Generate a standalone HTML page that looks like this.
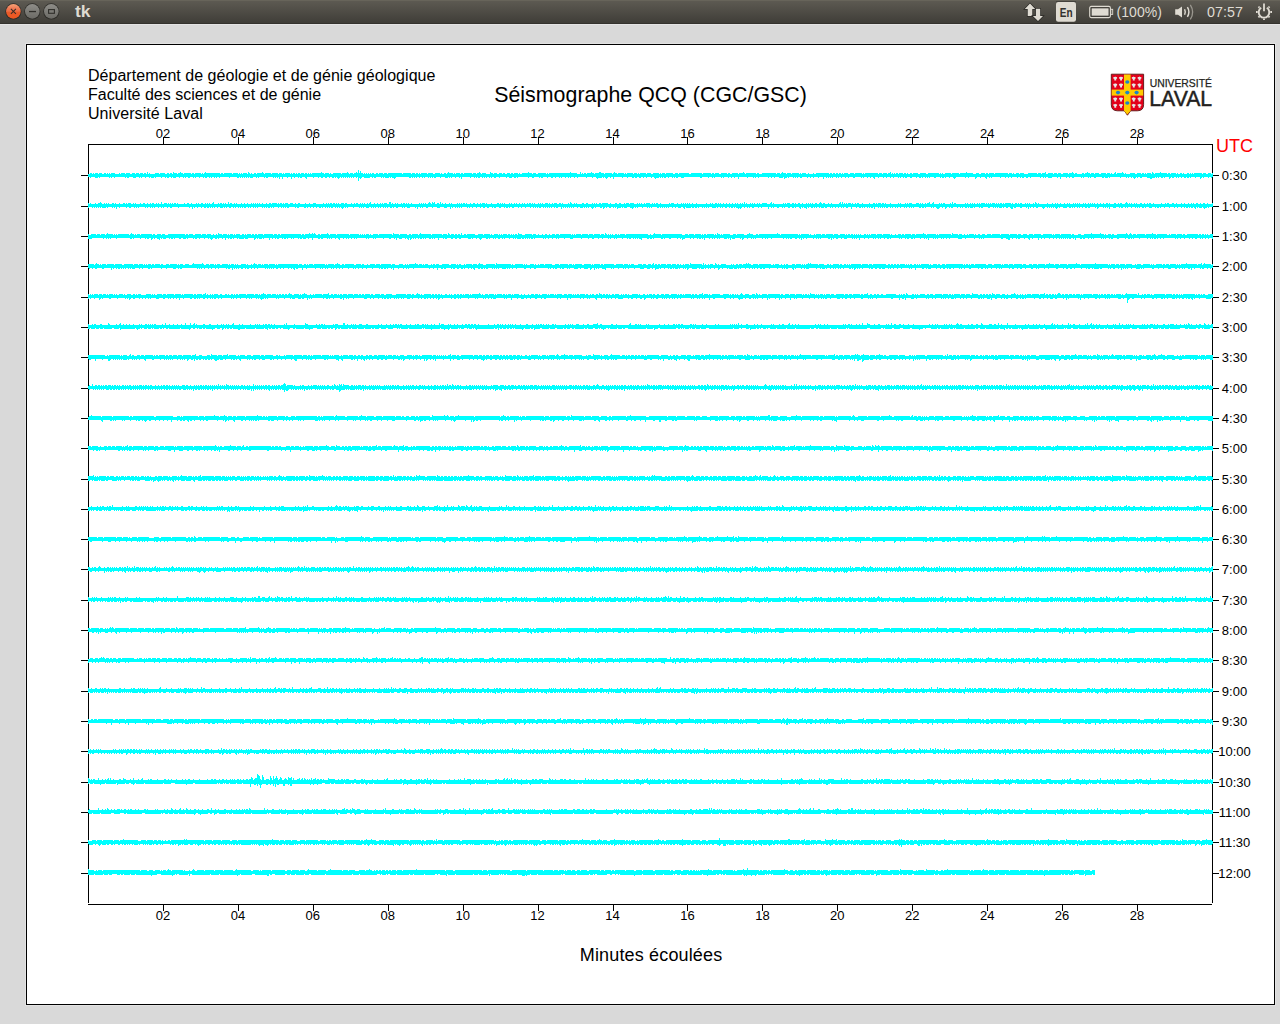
<!DOCTYPE html>
<html><head><meta charset="utf-8"><style>
html,body{margin:0;padding:0;width:1280px;height:1024px;overflow:hidden;background:#d9d9d9;}
svg{position:absolute;left:0;top:0;display:block}
text{font-family:"Liberation Sans",sans-serif;}
</style></head><body>
<svg width="1280" height="1024" viewBox="0 0 1280 1024">
<defs>
<linearGradient id="pg" x1="0" y1="0" x2="0" y2="1">
<stop offset="0" stop-color="#5e5b53"/><stop offset="1" stop-color="#3e3c37"/>
</linearGradient>
</defs>
<rect x="0" y="0" width="1280" height="24" fill="url(#pg)"/>
<rect x="0" y="0" width="1280" height="1" fill="#67645a"/>
<rect x="0" y="23" width="1280" height="1" fill="#34322e"/>
<rect x="0" y="24" width="1280" height="1" fill="#e4e4e4"/>
<!-- canvas -->
<rect x="25" y="43" width="1251" height="963" fill="#e3e3e3"/>
<rect x="26" y="44" width="1249" height="961" fill="#000"/>
<rect x="27" y="45" width="1247" height="959" fill="#fff"/>
<g shape-rendering="crispEdges">
<g stroke="#000" stroke-width="1" fill="none"><path d="M88.5 144V903M1212.5 144V903M88 144.5H1213M88 904.5H1212"/><path d="M163.5 137V144M163.5 905V911M238.5 137V144M238.5 905V911M313.5 137V144M313.5 905V911M388.5 137V144M388.5 905V911M463.5 137V144M463.5 905V911M538.5 137V144M538.5 905V911M613.5 137V144M613.5 905V911M687.5 137V144M687.5 905V911M762.5 137V144M762.5 905V911M837.5 137V144M837.5 905V911M912.5 137V144M912.5 905V911M987.5 137V144M987.5 905V911M1062.5 137V144M1062.5 905V911M1137.5 137V144M1137.5 905V911M81 175.5H88M1213 175.5H1219M81 206.5H88M1213 206.5H1219M81 236.5H88M1213 236.5H1219M81 266.5H88M1213 266.5H1219M81 297.5H88M1213 297.5H1219M81 327.5H88M1213 327.5H1219M81 357.5H88M1213 357.5H1219M81 388.5H88M1213 388.5H1219M81 418.5H88M1213 418.5H1219M81 448.5H88M1213 448.5H1219M81 479.5H88M1213 479.5H1219M81 509.5H88M1213 509.5H1219M81 539.5H88M1213 539.5H1219M81 569.5H88M1213 569.5H1219M81 600.5H88M1213 600.5H1219M81 630.5H88M1213 630.5H1219M81 660.5H88M1213 660.5H1219M81 691.5H88M1213 691.5H1219M81 721.5H88M1213 721.5H1219M81 751.5H88M1213 751.5H1219M81 782.5H88M1213 782.5H1219M81 812.5H88M1213 812.5H1219M81 842.5H88M1213 842.5H1219M81 873.5H88M1213 873.5H1219"/></g>
<g fill="#00ffff"><path d="M88 174h2v-1h2v1h1v-1h1v1h1v-1h3v1h1v-1h3v1h2v-1h2v1h1v-1h1v1h1v-1h1v1h1v-1h4v1h4v-1h1v1h1v-1h4v1h1v-1h4v1h2v-1h3v1h1v-1h3v1h1v-1h3v1h1v-1h2v1h1v-2h1v2h1v-1h1v1h5v-1h4v1h1v-1h5v1h2v-1h2v1h1v-1h2v1h1v-2h1v1h3v1h1v-1h2v-1h1v1h2v1h1v-1h7v1h1v-1h2v1h1v-1h6v1h1v-1h1v1h1v-1h1v-1h1v1h14v1h1v-1h2v1h1v-1h8v1h1v-1h5v1h1v-1h1v1h1v-1h1v1h1v-1h4v1h1v-2h1v1h1v1h1v-1h1v1h2v-1h2v1h1v-1h5v-1h1v1h1v1h1v-1h6v1h1v-1h6v1h1v-1h3v1h1v-1h1v1h1v-1h5v1h1v-1h1v1h1v-1h2v1h1v-1h1v1h1v-1h2v1h1v-1h3v1h1v-1h2v1h1v-1h1v1h1v-1h1v1h1v-1h9v-1h1v1h2v1h1v-1h4v1h1v-1h1v1h2v-1h8v1h1v-1h5v-1h1v1h1v1h1v-1h3v1h1v-1h2v-1h1v1h1v-3h1v3h1v-2h1v2h2v1h1v-1h1v1h1v-1h1v1h1v-1h1v1h1v-1h1v1h1v-1h2v1h2v-1h2v1h1v-1h4v1h1v-1h3v1h1v-1h14v1h1v-1h8v1h1v-1h3v1h1v-1h2v1h1v-1h1v1h1v-1h6v1h1v-1h5v1h2v-1h5v1h1v-1h1v1h2v-1h2v1h1v-1h1v-1h1v1h4v1h1v-1h1v1h1v-1h4v1h1v-1h2v1h1v-1h8v1h1v-1h3v1h1v-1h2v-1h1v1h1v1h1v-1h4v1h4v-2h1v1h2v1h1v-1h3v1h2v-1h3v1h1v-1h2v1h2v-1h3v1h1v-1h2v1h1v-1h4v1h1v-1h1v1h2v-1h6v-1h1v1h3v1h1v-1h3v1h2v-1h8v1h1v-1h1v1h1v-1h21v-1h1v1h6v1h3v-2h1v2h1v-1h1v1h1v-1h2v1h1v-1h4v-1h1v1h2v1h1v-1h4v-1h2v1h3v1h1v-1h7v1h1v-1h1v-1h1v1h2v1h1v-1h6v1h1v-1h1v1h1v-1h6v1h1v-1h3v1h1v-1h1v1h1v-1h6v1h1v-1h4v1h2v-1h6v1h1v-1h1v1h1v-1h3v1h1v-1h7v1h2v-1h3v1h1v-1h10v1h2v-1h11v1h1v-1h8v1h1v-1h2v1h1v-1h4v1h2v-1h6v1h1v-1h2v1h2v-1h6v1h1v-1h4v-1h1v1h1v1h1v-1h10v1h1v-1h2v1h3v-1h14v1h1v-1h3v1h1v-1h1v-1h1v1h3v1h1v-1h4v1h1v-1h7v1h1v-1h1v1h1v-1h4v1h2v-1h1v1h4v-1h1v1h2v-1h13v1h1v-1h2v1h1v-1h2v1h1v-1h2v1h1v-1h2v1h1v-1h1v1h1v-1h4v1h2v-1h4v1h1v-1h7v1h1v-1h1v1h1v-1h13v1h1v-1h3v1h1v-1h4v1h1v-1h2v-1h1v2h1v-1h1v1h1v-1h1v1h1v-1h2v1h1v-1h4v1h1v-1h2v1h1v-1h1v1h2v-1h2v1h1v-1h5v1h2v-1h6v1h2v-1h11v1h1v-1h1v1h1v-1h1v1h2v-1h6v1h1v-1h7v1h1v-1h6v-1h1v1h6v1h3v-1h3v1h2v-1h4v1h1v-1h2v1h1v-1h5v1h1v-1h13v1h1v-1h3v1h1v-1h1v1h2v-1h3v1h1v-1h4v1h4v-1h9v1h1v-1h3v1h1v-1h3v-1h1v2h2v-1h5v1h1v-1h3v1h1v-1h3v1h2v-1h5v1h1v-1h3v-1h1v1h1v1h1v-1h2v1h5v-1h2v1h1v-1h2v-1h1v1h2v1h1v-1h3v1h1v-1h4v1h2v-1h5v1h1v-1h3v1h1v-1h1v1h2v-1h1v-1h1v2h1v-1h5v-1h1v1h1v1h1v-1h1v1h4v-1h5v1h2v-1h4v1h1v-1h2v1h1v-1h1v1h1v-1h4v1h1v-2h1v1h1v1h1v-1h5v-1h1v1h6v1h1v-1h2v1h1v-1h5v1h1v-1h1v1h2v-1h2v1h1v-1h1v1h3v-1h2v1h1v-1h1v1h1v-1h1v1h1v-1h8v1h1v-1h3v1h2v-1h3v1h1v-1h1v4h-1v1h-1v-1h-2v1h-1v-1h-4v1h-1v-1h-1v1h-1v1h-1v-2h-4v1h-1v-1h-4v1h-1v-1h-1v1h-2v-1h-1v1h-2v-1h-2v1h-1v-1h-2v1h-1v-1h-1v1h-1v-1h-2v1h-2v-1h-1v1h-1v1h-1v-2h-4v1h-1v-1h-1v1h-2v-1h-2v1h-1v-1h-1v1h-1v-1h-1v1h-3v1h-2v-1h-3v-1h-5v1h-2v-1h-2v1h-1v-1h-1v1h-1v1h-1v-1h-1v-1h-1v1h-1v-1h-2v1h-1v-1h-1v1h-1v-1h-5v1h-1v-1h-10v1h-1v-1h-1v1h-3v-1h-1v1h-2v-1h-6v1h-2v-1h-3v1h-1v-1h-1v1h-1v-1h-4v1h-1v-1h-1v1h-1v-1h-7v1h-2v-1h-2v1h-1v-1h-2v1h-1v-1h-5v2h-1v-2h-2v1h-1v-1h-5v1h-4v-1h-2v1h-1v-1h-1v1h-1v-1h-2v1h-1v-1h-9v1h-1v-1h-2v1h-2v-1h-2v1h-2v-1h-1v1h-1v-1h-2v1h-1v-1h-5v1h-1v-1h-2v1h-1v-1h-2v1h-1v-1h-4v1h-1v-1h-8v1h-1v-1h-1v1h-1v-1h-2v2h-1v-1h-1v-1h-4v1h-1v-1h-3v1h-1v1h-1v-2h-6v1h-1v-1h-2v1h-1v-1h-9v1h-1v1h-1v-1h-1v-1h-3v1h-1v-1h-3v1h-1v-1h-1v1h-2v-1h-1v1h-1v-1h-4v1h-2v-1h-4v1h-1v-1h-1v1h-1v-1h-1v1h-1v-1h-2v1h-1v-1h-1v1h-2v-1h-2v1h-1v-1h-4v1h-2v-1h-3v1h-2v-1h-1v1h-1v-1h-2v1h-1v-1h-1v1h-1v-1h-4v1h-1v-1h-2v1h-1v-1h-3v1h-1v-1h-2v1h-1v-1h-4v1h-1v-1h-3v2h-1v-1h-1v-1h-2v1h-1v-1h-2v1h-1v-1h-3v1h-1v-1h-1v1h-1v-1h-6v1h-2v-1h-4v1h-1v-1h-2v1h-1v-1h-3v1h-1v-1h-2v1h-1v-1h-1v1h-1v-1h-3v1h-1v-1h-1v1h-1v-1h-1v1h-1v-1h-1v1h-1v-1h-2v2h-1v-2h-4v1h-1v-1h-4v1h-1v-1h-2v1h-1v-1h-2v1h-1v-1h-5v1h-2v-1h-2v1h-1v-1h-1v1h-1v-1h-1v1h-1v-1h-4v1h-1v-1h-1v1h-2v1h-1v-2h-1v1h-4v-1h-4v1h-1v-1h-2v1h-1v-1h-2v1h-1v-1h-9v1h-1v-1h-2v1h-1v-1h-1v1h-1v-1h-5v1h-1v-1h-8v2h-1v-2h-3v1h-1v-1h-2v1h-1v-1h-2v1h-1v-1h-4v1h-1v-1h-1v1h-1v-1h-6v1h-1v-1h-1v1h-1v-1h-3v1h-1v-1h-6v1h-2v-1h-16v1h-3v-1h-3v1h-2v-1h-1v1h-1v-1h-1v1h-1v-1h-3v1h-1v-1h-2v1h-2v-1h-1v1h-1v-1h-1v1h-1v-1h-1v1h-3v1h-1v-1h-1v-1h-2v1h-1v-1h-4v1h-1v-1h-2v1h-1v-1h-2v1h-2v-1h-2v1h-2v-1h-1v1h-2v-1h-4v1h-1v-1h-4v1h-1v-1h-8v2h-1v-2h-2v1h-1v-1h-2v1h-1v1h-1v-1h-1v-1h-1v1h-1v-1h-1v1h-4v1h-1v-1h-1v-1h-3v1h-1v-1h-5v1h-1v-1h-8v1h-1v-1h-2v1h-1v-1h-3v1h-1v-1h-1v1h-1v-1h-2v1h-1v-1h-3v1h-1v-1h-1v1h-1v-1h-3v1h-1v-1h-2v1h-2v-1h-3v1h-1v-1h-4v1h-2v-1h-1v1h-1v-1h-5v1h-2v-1h-3v1h-1v-1h-10v1h-1v-1h-1v1h-2v-1h-2v1h-3v-1h-2v1h-1v-1h-6v1h-1v-1h-3v1h-2v-1h-2v1h-1v-1h-1v1h-1v-1h-2v1h-1v-1h-1v1h-1v-1h-1v1h-1v-1h-2v1h-2v-1h-1v1h-1v-1h-1v1h-1v-1h-3v1h-1v-1h-8v2h-1v-2h-1v1h-1v-1h-3v1h-1v-1h-3v1h-1v-1h-1v1h-1v-1h-1v1h-3v-1h-4v1h-1v-1h-4v1h-2v-1h-1v1h-1v-1h-1v1h-1v-1h-1v1h-1v-1h-3v1h-1v-1h-1v1h-1v-1h-2v1h-1v-1h-2v1h-1v-1h-1v1h-1v-1h-1v1h-1v-1h-1v1h-2v-1h-13v1h-1v1h-1v-1h-2v-1h-1v1h-1v-1h-1v1h-4v-1h-1v1h-1v-1h-1v1h-1v-1h-5v1h-2v-1h-1v1h-1v-1h-2v1h-6v-1h-2v1h-1v1h-1v-1h-1v3h-1v-4h-1v1h-1v-1h-2v1h-1v-1h-1v1h-1v-1h-1v1h-1v-1h-1v1h-1v-1h-1v1h-1v-1h-1v1h-1v-1h-1v1h-1v-1h-1v1h-1v1h-1v-1h-1v-1h-1v1h-1v-1h-1v1h-2v-1h-2v1h-1v-1h-2v1h-2v-1h-2v1h-2v-1h-2v1h-1v-1h-4v1h-1v-1h-6v2h-1v-1h-1v-1h-3v1h-2v-1h-1v1h-1v-1h-3v1h-1v-1h-2v2h-1v-2h-3v1h-1v-1h-4v2h-1v-2h-2v2h-1v-2h-1v1h-1v-1h-1v1h-1v-1h-1v1h-1v-1h-5v1h-2v-1h-1v1h-1v-1h-5v1h-1v-1h-1v1h-1v-1h-3v1h-3v-1h-1v1h-1v-1h-1v1h-1v-1h-1v1h-1v-1h-1v1h-1v-1h-1v1h-1v-1h-1v1h-2v-1h-7v1h-1v-1h-9v1h-1v-1h-2v1h-1v-1h-1v1h-1v-1h-2v1h-1v-1h-1v1h-1v-1h-2v1h-2v-1h-1v1h-1v-1h-3v1h-1v-1h-3v1h-1v-1h-1v1h-1v-1h-3v1h-2v-1h-2v1h-1v-1h-1v1h-1v-1h-3v1h-1v-1h-3v1h-3v-1h-1v1h-1v-1h-2v1h-2v-1h-1v1h-1v-1h-3v1h-1v-1h-5v1h-1v-1h-1v1h-3v-1h-1v1h-1v-1h-3v1h-1v-1h-3v1h-1v-1h-1v1h-1v-1h-3v1h-3v-1h-4v1h-2v-1h-1v1h-1v-1h-10v1h-1v-1h-2v1h-1v-1h-1v1h-1v-1h-9v1h-1v-1h-1v1h-3v-1h-4v1h-1v-1h-2z"/><path d="M88 203h1v1h1v-1h1v1h4v-1h1v1h2v-1h2v-1h1v1h1v1h2v-1h1v1h1v-1h1v1h1v-1h1v1h3v-1h2v1h1v-1h1v1h3v-1h1v1h3v-1h2v1h1v-1h1v1h1v-1h3v1h2v-1h1v1h1v-1h1v1h4v-1h1v1h2v-1h2v1h2v-1h1v1h2v-1h1v1h1v-1h2v1h2v-1h1v1h1v-1h1v1h2v-2h1v2h2v-1h3v1h1v-1h1v1h1v-1h1v1h1v-1h1v1h1v-1h2v1h1v-1h1v1h6v-1h1v1h2v-1h2v1h2v-1h1v1h4v-1h1v1h1v-1h1v1h2v-1h2v1h2v-1h1v1h1v-1h1v1h1v-1h1v1h2v-1h1v-1h1v2h4v-1h1v1h1v-1h2v1h1v-1h1v1h1v-1h1v1h2v-2h1v2h1v-1h2v1h2v-1h1v1h1v-1h1v1h4v-1h1v1h2v-1h1v1h2v-1h1v1h3v-1h1v1h1v-1h1v1h1v-1h1v1h1v-1h1v1h1v-1h1v1h2v-1h1v1h3v-1h1v1h2v-1h2v1h1v-1h5v1h1v-1h1v1h1v-1h2v1h1v-1h1v1h1v-1h3v1h2v-1h3v1h2v-1h1v1h2v-1h2v1h5v-1h1v1h3v-1h1v1h3v-1h3v1h7v-1h1v1h2v-1h1v1h1v-1h1v1h1v-1h2v1h1v-1h2v1h1v-1h1v1h1v-1h1v1h2v-1h3v1h1v-1h2v1h4v-1h1v1h2v-1h1v1h1v-1h2v1h2v-1h1v1h1v-1h1v1h1v-1h1v1h2v-1h1v1h1v-1h1v-1h1v2h3v-1h1v1h2v-1h1v1h2v-1h1v1h1v-1h1v1h1v-1h3v1h2v-2h2v2h1v-1h1v1h2v-1h1v1h1v-1h1v1h3v-1h1v1h1v-1h2v1h1v-1h1v1h1v-1h1v1h2v-1h1v1h7v-1h1v1h1v-1h1v1h1v-1h1v1h1v-1h1v1h2v-1h1v-1h1v1h1v1h1v-2h1v1h1v-1h1v2h2v-1h2v1h1v-2h1v2h1v-1h1v1h2v-1h1v1h3v-1h1v1h1v-1h1v1h5v-1h1v1h1v-1h1v1h1v-1h1v1h1v-1h2v1h1v-1h1v1h3v-1h1v1h2v-1h2v1h2v-1h1v1h2v-1h1v1h1v-1h3v1h1v-1h1v1h4v-1h1v1h5v-1h2v1h1v-1h1v1h1v-1h1v1h1v-1h1v1h4v-1h1v1h1v-1h1v1h2v-1h1v1h1v-1h1v1h2v-1h1v1h2v-1h1v1h1v-1h1v1h2v-1h1v1h1v-1h2v1h1v-1h1v1h1v-1h1v1h3v-1h1v1h1v-1h1v1h1v-1h1v1h2v-1h3v1h1v-1h1v1h2v-1h1v1h1v-1h3v1h2v-1h2v1h1v-1h1v1h5v-1h1v1h1v-2h1v1h1v1h2v-1h1v1h1v-1h1v1h5v-1h2v1h2v-1h2v1h4v-1h1v1h1v-1h1v1h1v-1h1v1h2v-1h2v1h1v-1h6v1h2v-1h1v1h4v-1h2v1h2v-1h2v1h3v-1h1v1h1v-1h3v1h1v-1h4v1h3v-1h1v1h1v-1h1v1h1v-1h1v1h2v-1h1v1h1v-1h4v1h2v-1h1v1h1v-1h1v1h1v-1h2v1h2v-1h1v1h8v-1h1v1h1v-1h3v1h3v-1h1v1h3v-1h1v1h1v-1h1v1h1v-1h1v1h1v-1h1v1h1v-1h1v1h2v-1h1v1h3v-1h1v1h9v-1h1v1h3v-1h1v1h1v-1h1v1h2v-1h2v1h1v-1h1v1h1v-1h1v1h2v-1h1v1h2v-1h1v1h2v-1h1v1h2v-1h1v1h2v-1h1v1h1v-1h1v1h2v-1h1v1h1v-1h1v1h1v-2h1v2h1v-1h1v1h3v-1h1v1h1v-1h1v1h1v-1h1v1h2v-1h1v1h1v-1h1v1h2v-1h5v1h3v-1h1v-1h1v2h1v-1h1v1h9v-1h1v1h1v-1h1v1h1v-1h3v1h2v-1h2v1h1v-1h1v1h2v-1h2v1h2v-1h1v1h3v-1h1v1h1v-1h1v1h1v-1h1v1h1v-1h1v1h2v-1h2v1h2v-1h1v-1h1v1h1v1h1v-1h2v1h3v-1h1v1h2v-1h1v1h7v-1h1v-1h1v2h1v-2h1v2h1v-1h1v1h1v-1h1v1h1v-1h3v1h1v-1h1v1h2v-1h1v1h1v-1h2v1h3v-1h1v1h6v-1h1v1h3v-1h2v1h1v-1h1v1h1v-1h3v1h1v-1h2v1h1v-1h1v1h4v-1h1v1h7v-1h1v1h1v-1h1v1h4v-1h1v1h1v-1h1v1h1v-1h3v1h4v-1h3v1h1v-1h1v1h1v-1h1v1h2v-1h1v1h1v-1h2v-1h1v2h2v-1h1v-1h1v2h5v-1h1v1h1v-1h1v1h1v-1h2v1h5v-1h1v1h1v-2h1v2h1v-1h2v1h9v-1h1v1h1v-1h1v1h2v-1h1v1h1v-1h1v1h1v-1h1v1h2v-1h1v1h1v-1h1v1h1v-1h4v1h1v-1h1v1h1v-1h1v1h1v-1h1v1h1v-1h3v1h1v-1h1v1h1v-1h1v1h1v-1h2v1h1v-1h1v1h1v-1h6v1h1v-1h1v1h2v-1h2v1h1v-1h1v1h1v-1h2v1h3v-1h1v1h1v-1h1v1h1v-1h1v1h3v-1h1v1h1v-2h1v1h1v1h1v-1h1v1h8v-1h1v1h4v-1h1v1h2v-1h1v1h1v-1h1v1h2v-1h1v1h3v-1h1v1h2v-1h1v1h1v-1h1v1h3v-1h1v1h1v-1h1v1h1v-1h1v1h1v-1h1v1h3v-1h1v1h1v-1h1v1h2v-1h1v1h1v-1h1v1h1v-1h1v1h1v-1h1v1h2v-1h1v1h2v-1h1v1h2v-1h1v1h2v-1h2v1h1v-1h1v1h4v-1h2v1h2v-1h1v1h1v-1h2v1h3v-1h1v-1h1v1h1v1h1v-1h1v1h1v-1h1v1h2v-1h1v1h1v-1h1v1h3v-1h2v1h2v-1h1v1h2v-1h1v1h1v-1h2v1h2v-1h1v1h7v-1h1v1h3v-1h1v1h1v-1h2v1h3v-1h2v1h2v-1h1v1h4v-1h1v1h2v-1h1v1h3v-1h1v1h2v-1h1v1h1v-1h1v1h2v-1h2v1h2v-1h1v1h2v-1h2v1h2v-1h1v1h4v-1h1v4h-4v1h-1v-1h-1v1h-2v1h-1v-1h-1v-1h-1v1h-3v-1h-1v1h-1v-1h-1v2h-1v-1h-1v-1h-1v1h-2v-1h-1v1h-1v-1h-1v1h-2v-1h-1v1h-1v-1h-2v1h-1v-1h-3v1h-1v-1h-2v1h-1v-1h-4v1h-1v-1h-4v1h-1v-1h-3v1h-1v-1h-1v1h-2v-1h-1v1h-1v-1h-3v1h-3v-1h-3v1h-1v-1h-1v1h-2v-1h-2v1h-1v-1h-1v1h-1v-1h-1v1h-1v-1h-3v1h-1v-1h-3v1h-1v-1h-1v1h-1v-1h-2v1h-2v-1h-1v1h-1v-1h-3v1h-3v-1h-3v2h-1v-2h-1v1h-1v-1h-1v1h-1v-1h-1v1h-1v-1h-4v1h-1v1h-1v-2h-1v1h-1v-1h-5v1h-2v-1h-1v1h-2v-1h-2v1h-1v-1h-2v1h-1v-1h-1v1h-1v-1h-2v1h-1v-1h-1v1h-1v-1h-1v1h-2v-1h-2v1h-4v-1h-3v1h-1v-1h-1v1h-1v1h-1v-1h-1v-1h-1v1h-1v-1h-1v1h-1v-1h-1v1h-1v-1h-1v1h-1v-1h-2v1h-1v1h-1v-1h-1v-1h-4v1h-2v-1h-2v1h-1v-1h-2v1h-1v-1h-1v2h-1v-2h-1v1h-1v-1h-4v1h-2v-1h-4v1h-2v-1h-1v2h-2v-1h-1v-1h-2v1h-2v-1h-2v1h-1v-1h-1v1h-3v-1h-1v1h-1v-1h-1v1h-1v-1h-1v1h-1v-1h-3v1h-2v-1h-5v1h-2v-1h-1v1h-1v-1h-4v1h-1v-1h-1v1h-3v-1h-1v1h-1v-1h-1v1h-2v-1h-2v1h-1v-1h-1v1h-1v-1h-2v1h-1v-1h-4v1h-2v-1h-1v1h-1v-1h-2v1h-1v1h-1v-2h-2v1h-1v-1h-2v1h-1v1h-2v-1h-1v-1h-2v1h-1v-1h-1v1h-1v-1h-5v1h-1v-1h-1v1h-2v-1h-1v1h-2v-1h-5v1h-1v-1h-1v1h-1v-1h-1v1h-1v-1h-2v1h-1v-1h-1v1h-1v-1h-3v1h-1v-1h-2v1h-1v-1h-1v1h-1v-1h-2v1h-1v-1h-1v1h-1v-1h-2v1h-2v-1h-1v1h-1v-1h-1v1h-1v-1h-1v1h-1v-1h-1v1h-1v-1h-3v2h-1v-2h-1v1h-2v-1h-1v1h-1v-1h-1v1h-1v-1h-2v1h-1v-1h-1v1h-1v-1h-1v1h-2v-1h-2v1h-1v-1h-4v2h-1v-2h-3v1h-2v-1h-2v1h-1v-1h-1v1h-1v-1h-2v1h-1v-1h-2v1h-1v-1h-2v1h-1v-1h-1v1h-1v-1h-3v1h-2v-1h-1v1h-3v-1h-1v1h-1v-1h-2v1h-1v-1h-1v1h-1v-1h-1v1h-2v-1h-2v1h-1v-1h-1v2h-1v-1h-2v-1h-1v1h-1v-1h-1v2h-1v-1h-1v-1h-3v1h-1v-1h-1v1h-2v-1h-2v1h-2v-1h-3v1h-1v-1h-1v1h-1v-1h-3v1h-2v-1h-3v1h-1v-1h-1v1h-1v-1h-2v2h-1v-2h-6v1h-1v-1h-2v1h-1v-1h-4v1h-2v-1h-2v1h-1v-1h-1v1h-1v-1h-2v1h-1v-1h-2v1h-1v1h-1v-1h-1v1h-1v-1h-2v-1h-1v1h-1v-1h-1v1h-2v-1h-1v1h-1v-1h-2v1h-2v-1h-2v1h-1v-1h-1v1h-1v-1h-2v1h-1v-1h-1v1h-4v-1h-3v1h-1v-1h-1v1h-1v-1h-1v1h-1v-1h-1v1h-1v-1h-3v1h-1v-1h-1v1h-2v-1h-1v1h-2v-1h-1v1h-5v-1h-1v2h-1v-1h-1v-1h-2v1h-3v-1h-2v1h-1v-1h-2v1h-1v-1h-3v1h-1v-1h-1v1h-1v-1h-1v1h-1v-1h-1v1h-1v-1h-1v1h-1v-1h-1v1h-2v-1h-5v1h-1v-1h-1v1h-1v-1h-1v1h-1v-1h-4v1h-1v-1h-4v1h-1v-1h-1v1h-1v-1h-1v1h-1v1h-1v-1h-2v-1h-3v1h-3v-1h-1v1h-1v-1h-1v1h-3v1h-1v-2h-1v1h-1v-1h-1v1h-1v-1h-2v1h-2v-1h-2v1h-1v-1h-1v1h-1v1h-1v-2h-1v1h-2v-1h-4v1h-1v-1h-1v1h-1v1h-1v-1h-1v-1h-2v1h-1v-1h-1v1h-1v-1h-1v1h-1v-1h-1v1h-3v-1h-2v1h-1v-1h-3v1h-1v-1h-1v1h-1v-1h-1v1h-1v-1h-1v1h-1v-1h-1v1h-1v-1h-1v1h-1v-1h-1v2h-1v-2h-3v1h-2v-1h-1v1h-1v-1h-2v1h-1v-1h-1v1h-1v-1h-1v1h-1v-1h-1v1h-1v-1h-1v1h-1v-1h-2v1h-2v-1h-1v1h-1v-1h-1v1h-1v-1h-1v1h-1v-1h-2v1h-1v-1h-4v1h-1v-1h-3v1h-1v-1h-2v1h-1v-1h-4v1h-2v-1h-2v1h-1v-1h-1v1h-2v-1h-1v1h-1v-1h-3v1h-2v-1h-3v1h-2v-1h-1v1h-1v-1h-3v1h-2v-1h-2v1h-2v-1h-2v1h-1v-1h-3v1h-1v-1h-3v1h-1v-1h-2v1h-1v-1h-1v1h-1v-1h-5v1h-1v-1h-1v1h-1v-1h-1v1h-1v-1h-1v1h-1v-1h-2v1h-1v-1h-1v2h-1v-2h-3v1h-3v-1h-4v1h-3v-1h-4v1h-1v-1h-4v1h-2v-1h-3v1h-1v-1h-1v1h-1v-1h-2v2h-1v-2h-1v1h-1v-1h-5v1h-3v-1h-2v1h-1v-1h-1v1h-1v-1h-4v1h-2v-1h-2v1h-1v-1h-1v1h-2v-1h-2v1h-1v-1h-1v1h-1v-1h-1v1h-1v-1h-2v1h-1v-1h-1v1h-1v-1h-2v1h-1v-1h-1v1h-1v-1h-1v1h-1v-1h-2v1h-3v-1h-2v1h-1v-1h-1v1h-1v-1h-1v1h-1v-1h-5v1h-1v-1h-5v1h-1v-1h-1v1h-1v-1h-1v1h-1v1h-1v-1h-1v-1h-1v1h-1v-1h-1v1h-1v-1h-1v1h-1v-1h-2v1h-2v-1h-1v1h-1v-1h-1v1h-1v-1h-1v1h-1v-1h-2v1h-1v-1h-1v1h-2v-1h-2v1h-1v-1h-2v1h-1v-1h-2v1h-1v-1h-2v1h-1v-1h-1v1h-2v-1h-5v1h-2v-1h-1v1h-1v-1h-6v1h-2v-1h-1v1h-1v-1h-1v1h-1v-1h-1v1h-1v-1h-2v1h-1v-1h-4v1h-1v-1h-1v1h-1v-1h-1v1h-2v-1h-1v1h-1v-1h-1v1h-1v-1h-1v1h-1v-1h-4v1h-1v-1h-1v1h-1v-1h-1v1h-1v-1h-2v1h-1v-1h-1v1h-1v-1h-2v1h-2v-1h-1v1h-1v-1h-1v1h-1v-1h-1v1h-1v-1h-2v1h-1v-1h-1v1h-1v-1h-2v1h-2v-1h-2v1h-1v-1h-1v1h-1v-1h-1v1h-3v-1h-2v1h-1v-1h-2v1h-1v-1h-1v1h-1v-1h-1v1h-1v-1h-1v1h-2v-1h-1v1h-2v-1h-2v1h-1v-1h-3v1h-1v-1h-2v1h-1v-1h-1v2h-1v-2h-2v1h-1v-1h-10v1h-1v-1h-6v1h-2v-1h-2v1h-1v-1h-3v1h-1v-1h-1v1h-1v-1h-2v1h-1v-1h-3v1h-1v-1h-1v1h-1v-1h-1v1h-1v-1h-2v1h-1v-1h-1v1h-1v-1h-6v1h-1v-1h-1v1h-1v-1h-1v1h-1v-1h-3v1h-2v-1h-2v1h-1v-1h-6v1h-1v-1h-2v2h-1v-2h-1v1h-1v-1h-1v1h-1v-1h-4v1h-1v-1h-1v1h-4v-1h-1v1h-1v-1h-1v1h-1v-1h-1v1h-1v-1h-1v1h-1v-1h-1v1h-1v-1h-3v1h-1z"/><path d="M88 234h1v1h2v-1h5v1h1v-1h3v1h1v-1h4v1h1v-1h1v-1h1v1h5v1h1v-1h1v1h1v-1h1v1h1v-1h11v1h1v-1h1v-1h1v1h2v1h1v-1h1v1h1v-1h3v1h1v-1h11v1h1v-1h2v1h2v-1h4v1h1v-1h3v1h3v-1h17v1h1v-1h2v1h1v-1h4v1h2v-1h6v1h1v-1h4v1h1v-1h4v1h2v-1h1v1h2v-1h1v1h1v-2h1v1h3v1h1v-1h4v1h1v-1h1v1h1v-1h3v1h1v-1h1v1h1v-1h4v1h2v-1h2v1h1v-1h1v1h1v-1h4v1h1v-1h2v1h1v-1h2v1h1v-1h5v1h1v-1h9v1h1v-1h3v1h1v-1h2v1h1v-1h20v1h1v-1h2v1h1v-1h4v-1h1v1h2v-1h1v1h1v-1h1v1h1v1h2v-1h2v1h1v-1h6v-1h1v1h1v1h1v-1h6v1h1v-1h12v1h1v-1h9v1h1v-1h1v1h1v-1h1v1h1v-1h1v1h1v-1h3v1h1v-1h1v1h2v-1h5v1h1v-1h13v1h1v-2h1v1h5v1h1v-1h7v1h2v-1h2v1h1v-1h6v1h1v-1h1v-1h1v1h10v1h1v-1h10v1h1v-1h4v1h1v-2h1v1h1v1h1v-1h3v1h1v-1h2v1h1v-1h2v1h1v-2h1v2h2v-1h2v1h1v-1h8v1h3v-1h5v1h1v-1h6v1h1v-1h1v1h2v-1h4v1h1v-1h1v1h1v-1h1v1h1v-1h4v1h1v-1h2v1h1v-1h1v1h1v-1h1v1h1v-1h2v1h1v-2h1v1h3v1h3v-1h7v1h1v-1h3v1h2v-1h1v1h3v-1h1v1h2v-1h2v1h2v-1h1v1h2v-1h3v1h1v-1h3v1h1v-1h11v1h1v-1h1v1h1v-1h1v1h1v-1h5v1h1v-1h6v1h1v-1h4v1h1v-1h6v1h1v-1h3v1h1v-2h1v1h1v1h1v-1h1v1h1v-1h1v1h1v-1h1v1h2v-1h2v1h1v-1h1v1h1v-1h5v1h1v-1h22v1h2v-1h1v1h2v-1h1v-1h1v1h6v1h1v-1h20v1h3v-1h3v1h1v-1h5v1h1v-1h6v1h1v-1h1v1h1v-1h2v1h1v-1h7v1h1v-1h1v1h1v-2h1v1h2v1h1v-1h1v1h1v-1h7v1h3v-1h3v1h1v-1h7v1h3v-1h2v-1h1v1h3v1h3v-1h2v1h1v-1h18v-1h1v1h2v1h1v-1h17v1h1v-1h1v1h1v-1h8v1h1v-1h1v1h3v-1h1v1h1v-1h5v1h1v-1h3v1h1v-1h7v1h1v-1h4v1h2v-1h5v1h1v-1h1v1h1v-1h2v1h1v-1h2v1h1v-1h1v1h1v-1h1v1h1v-1h1v1h1v-1h1v1h3v-1h2v1h1v-1h1v1h1v-1h1v1h1v-1h5v1h1v-1h5v1h1v-1h7v1h1v-1h1v1h3v-1h1v1h2v-1h3v1h1v-1h2v1h1v-1h6v1h1v-1h3v1h1v-1h7v-1h1v1h2v1h1v-1h9v1h1v-1h1v1h1v-1h12v1h1v-2h1v1h5v1h1v-1h3v1h2v-1h1v1h2v-1h1v1h1v-1h5v1h1v-1h1v1h2v-1h2v1h2v-1h3v1h2v-1h4v1h1v-1h8v1h1v-1h8v1h1v-1h7v1h1v-1h3v1h2v-1h4v1h2v-1h4v1h1v-1h7v1h2v-1h9v1h1v-1h1v1h1v-1h5v1h1v-1h10v1h1v-1h2v1h4v-1h3v1h3v-1h7v-1h1v1h8v-1h1v1h3v1h1v-1h1v1h2v-1h3v1h1v-1h2v1h3v-1h9v-1h1v1h1v1h1v-1h1v-1h1v1h1v1h1v-1h3v1h1v-1h8v1h1v-1h6v-1h1v1h3v1h1v-1h10v1h2v-1h1v1h1v-1h5v1h1v-1h5v1h1v-1h2v1h2v-1h11v1h1v-1h2v1h1v-1h2v1h1v-1h1v1h1v-1h1v1h2v-1h3v5h-1v-1h-3v1h-1v-1h-2v1h-1v-1h-2v1h-1v-1h-1v1h-1v-1h-3v1h-2v-1h-2v1h-1v-1h-2v1h-1v-1h-4v1h-1v-1h-3v1h-1v-1h-2v1h-1v-1h-1v1h-1v-1h-11v1h-1v-1h-2v1h-1v-1h-2v1h-1v-1h-1v1h-2v-1h-1v1h-1v-1h-1v1h-1v-1h-2v1h-1v-1h-7v1h-1v-1h-5v1h-1v-1h-1v1h-1v-1h-1v1h-2v-1h-2v1h-1v-1h-6v1h-2v-1h-4v1h-2v-1h-1v1h-1v-1h-3v1h-1v-1h-1v1h-1v-1h-1v1h-1v-1h-7v1h-1v-1h-1v1h-1v-1h-2v1h-1v-1h-3v1h-2v-1h-1v1h-2v-1h-4v2h-1v-2h-1v1h-1v-1h-2v1h-2v-1h-1v1h-1v-1h-1v1h-1v-1h-1v1h-1v-1h-1v1h-1v-1h-1v1h-1v-1h-2v1h-1v-1h-2v1h-1v-1h-3v1h-1v-1h-4v1h-1v-1h-2v1h-1v-1h-2v2h-1v-2h-5v1h-1v-1h-2v2h-1v-1h-1v-1h-3v1h-1v-1h-4v1h-2v-1h-1v1h-1v-1h-3v1h-1v-1h-2v2h-2v-1h-2v-1h-3v1h-2v-1h-17v1h-1v-1h-1v1h-1v-1h-1v1h-1v-1h-4v1h-1v-1h-8v1h-1v-1h-3v1h-4v-1h-8v1h-1v-1h-2v1h-1v-1h-2v1h-1v-1h-1v1h-1v-1h-3v1h-1v-1h-1v1h-1v-1h-1v1h-1v-1h-4v2h-1v-2h-1v1h-1v-1h-1v1h-1v-1h-3v1h-1v-1h-5v1h-1v-1h-1v1h-2v-1h-2v1h-2v-1h-1v1h-1v-1h-3v1h-1v-1h-1v1h-1v-1h-8v1h-1v-1h-1v1h-2v-1h-2v1h-1v-1h-3v1h-1v-1h-1v1h-1v-1h-2v1h-1v-1h-1v1h-1v-1h-4v1h-1v-1h-3v1h-1v-1h-4v2h-1v-2h-2v1h-1v-1h-1v1h-1v-1h-1v1h-1v-1h-5v1h-3v-1h-2v1h-1v-1h-3v1h-2v-1h-2v1h-1v-1h-1v2h-1v-2h-1v1h-2v-1h-7v1h-1v-1h-1v1h-1v-1h-1v1h-1v-1h-2v1h-1v-1h-6v1h-1v-1h-2v1h-1v-1h-1v2h-1v-2h-1v1h-1v-1h-2v1h-2v-1h-3v1h-2v-1h-1v1h-1v-1h-1v1h-1v-1h-2v1h-1v-1h-11v1h-1v-1h-3v1h-1v-1h-1v1h-1v-1h-2v1h-1v-1h-6v1h-1v-1h-1v1h-1v-1h-1v1h-1v-1h-3v1h-1v-1h-3v1h-1v1h-1v-2h-1v1h-1v-1h-5v1h-3v-1h-1v2h-1v-2h-1v1h-1v-1h-1v1h-3v-1h-4v1h-1v-1h-1v1h-1v-1h-2v1h-1v-1h-1v1h-1v-1h-2v1h-1v-1h-4v2h-1v-2h-1v1h-1v-1h-1v1h-2v-1h-1v1h-1v-1h-3v1h-1v-1h-2v1h-1v-1h-5v1h-2v1h-1v-2h-1v1h-1v-1h-2v1h-1v-1h-6v1h-2v-1h-4v1h-1v-1h-1v1h-2v-1h-7v1h-1v-1h-1v1h-2v-1h-1v1h-2v-1h-5v2h-1v-1h-2v-1h-1v1h-1v-1h-1v1h-1v-1h-1v1h-1v-1h-2v1h-2v-1h-1v1h-1v-1h-4v1h-1v-1h-5v1h-1v-1h-1v1h-1v-1h-3v1h-1v-1h-1v1h-1v-1h-5v1h-1v-1h-3v1h-1v-1h-4v1h-2v-1h-3v1h-1v-1h-6v1h-1v-1h-8v1h-3v-1h-5v1h-1v-1h-5v1h-1v-1h-1v1h-1v-1h-3v1h-1v-1h-3v1h-1v-1h-2v1h-1v-1h-1v1h-1v-1h-8v1h-1v-1h-1v1h-2v-1h-1v1h-1v-1h-1v1h-1v-1h-1v1h-1v-1h-1v1h-2v-1h-1v1h-4v-1h-1v1h-1v-1h-1v1h-1v-1h-3v1h-1v-1h-4v1h-1v-1h-1v1h-1v-1h-2v1h-2v-1h-2v1h-1v-1h-1v1h-1v-1h-3v1h-1v-1h-1v1h-2v-1h-4v1h-1v1h-1v-1h-1v-1h-2v1h-1v-1h-3v1h-1v-1h-1v1h-3v-1h-7v1h-2v-1h-2v1h-2v-1h-2v1h-2v-1h-4v1h-2v-1h-1v1h-1v-1h-4v2h-1v-2h-3v1h-1v-1h-1v1h-1v-1h-1v1h-2v-1h-3v1h-1v-1h-1v1h-1v-1h-1v1h-2v-1h-1v1h-1v-1h-2v1h-1v-1h-1v1h-1v-1h-1v1h-1v1h-1v-2h-1v2h-1v-1h-1v-1h-1v1h-1v-1h-3v1h-3v-1h-2v2h-1v-2h-1v1h-1v-1h-3v1h-2v-1h-5v1h-1v-1h-7v1h-1v-1h-1v1h-1v-1h-4v1h-1v-1h-1v1h-1v-1h-9v1h-1v-1h-1v1h-1v-1h-2v1h-1v-1h-2v1h-1v-1h-1v1h-1v-1h-2v1h-1v-1h-3v2h-1v-1h-1v-1h-2v1h-1v-1h-3v1h-1v-1h-1v1h-1v-1h-1v1h-1v-1h-4v1h-2v-1h-1v1h-2v-1h-5v2h-1v-2h-3v1h-1v-1h-2v1h-3v-1h-1v1h-2v-1h-1v1h-1v-1h-4v1h-1v-1h-1v1h-1v-1h-3v1h-1v-1h-1v1h-2v-1h-1v1h-1v-1h-3v1h-2v-1h-1v1h-1v-1h-2v1h-1v-1h-2v2h-1v-2h-5v1h-1v-1h-1v1h-3v-1h-1v1h-1v-1h-1v1h-1v1h-1v-2h-6v1h-3v-1h-1v1h-5v-1h-1v1h-1v-1h-3v1h-1v-1h-1v1h-2v-1h-1v1h-1v-1h-2v2h-1v-2h-2v1h-1v-1h-3v1h-1v-1h-1v1h-2v-1h-2v1h-1v1h-1v-1h-1v-1h-1v1h-1v-1h-3v1h-1v-1h-4v1h-1v-1h-2v1h-2v-1h-1v1h-1v-1h-5v1h-1v-1h-1v1h-3v-1h-2v1h-2v-1h-4v1h-1v-1h-1v1h-2v-1h-1v1h-1v-1h-3v1h-3v-1h-1v1h-1v-1h-1v2h-1v-1h-2v-1h-2v1h-1v-1h-1v1h-1v1h-1v-2h-2v1h-2v-1h-1v1h-1v-1h-4v1h-1v-1h-6v1h-1v-1h-1v1h-2v-1h-13v1h-1v-1h-5v1h-1v-1h-1v1h-1v-1h-1v1h-1v-1h-2v1h-1v-1h-11v1h-4z"/><path d="M88 264h6v1h1v-1h1v-1h1v1h2v1h1v-1h1v1h1v-1h4v1h1v-1h7v1h1v-1h7v1h2v-1h9v1h1v-1h4v1h1v-1h4v1h1v-1h1v1h1v-1h1v1h1v-1h3v1h1v-1h2v1h1v-1h5v1h1v-1h2v1h3v-1h3v1h1v-1h7v1h1v-1h1v1h1v-1h3v1h2v-1h4v1h3v-1h1v-1h1v1h8v-1h1v1h1v1h2v-1h3v1h1v-1h4v1h1v-1h1v1h1v-1h3v1h2v-1h6v1h1v-1h1v1h1v-1h3v1h1v-1h1v1h1v-1h1v1h3v-1h5v1h1v-1h1v1h3v-1h1v1h1v-1h1v-1h1v1h2v1h1v-1h3v1h1v-1h1v1h1v-1h4v1h1v-1h6v1h1v-1h1v1h1v-1h20v1h1v-1h3v1h2v-1h2v1h1v-1h1v1h1v-1h4v1h1v-1h11v1h1v-1h1v1h1v-1h6v1h1v-1h2v-1h1v1h2v1h2v-1h2v1h1v-1h9v1h2v-1h5v1h1v-1h2v1h3v-1h1v1h2v-1h5v1h1v-1h4v1h1v-1h10v1h1v-1h3v1h4v-1h4v1h2v-1h1v1h1v-1h1v1h1v-1h6v-1h1v1h2v1h1v-1h3v1h1v-1h1v1h1v-1h3v1h3v-1h1v1h1v-1h2v1h1v-1h3v1h3v-1h7v1h2v-1h5v1h1v-1h1v1h1v-1h2v1h3v-1h1v1h1v-1h6v1h1v-1h4v1h1v-1h1v-1h1v1h3v1h3v-1h9v1h1v-2h1v1h14v1h1v-1h1v1h2v-1h8v1h1v-1h1v1h1v-1h1v1h3v-1h4v1h1v-1h1v1h2v-1h1v1h1v-1h4v1h1v-1h7v1h3v-1h4v1h1v-1h8v1h1v-1h3v1h1v-1h1v1h1v-1h7v1h2v-1h7v1h1v-1h1v1h1v-1h6v1h1v-1h2v1h1v-1h10v1h2v-1h7v1h1v-1h4v1h1v-1h1v1h1v-1h3v1h4v-1h4v1h1v-1h3v1h2v-1h3v1h1v-1h1v-1h1v2h1v-1h2v1h1v-1h2v1h1v-1h5v1h1v-1h4v1h1v-1h4v1h1v-1h2v1h1v-1h1v1h2v-1h1v1h1v-1h4v1h1v-2h1v1h11v1h1v-2h1v2h1v-1h1v1h2v-1h1v1h1v-1h3v1h2v-2h1v1h1v1h1v-1h1v1h2v-1h5v1h5v-1h1v1h1v-1h1v1h2v-1h2v1h1v-1h3v1h1v-1h3v-1h1v1h1v-1h1v1h2v1h2v-1h5v1h1v-1h12v1h2v-1h1v1h1v-1h4v1h2v-1h1v1h2v-1h1v1h1v-1h2v1h4v-1h3v1h1v-1h5v1h1v-1h1v1h1v-1h1v1h1v-1h2v-1h1v1h1v-1h1v1h7v1h1v-1h5v1h3v-1h2v1h1v-1h1v1h2v-1h6v1h1v-1h2v1h2v-1h2v1h1v-1h1v1h1v-1h1v1h1v-1h10v1h1v-1h6v1h1v-1h3v1h1v-1h13v1h2v-1h2v1h1v-1h2v1h1v-1h2v1h1v-1h2v1h1v-1h5v1h1v-1h1v1h1v-1h1v1h1v-1h2v1h2v-1h2v1h1v-1h1v1h1v-1h1v1h1v-1h8v1h1v-1h1v1h2v-1h4v1h1v-1h2v1h2v-1h3v1h1v-1h17v1h1v-1h1v1h1v-1h2v1h1v-1h1v1h1v-1h3v1h1v-1h11v1h2v-1h4v1h2v-1h7v1h1v-1h1v1h1v-1h4v1h1v-1h4v1h1v-1h8v1h1v-1h3v1h3v-1h3v1h1v-1h4v1h1v-1h7v1h1v-1h3v-1h1v1h4v1h1v-1h4v1h1v-1h7v1h1v-1h8v-1h1v1h3v1h1v-1h14v-1h1v1h12v1h1v-1h1v1h1v-1h4v1h1v-1h3v1h1v-1h5v1h1v-1h6v1h3v-1h1v1h1v-1h4v1h2v-1h7v1h1v-1h1v1h1v-1h1v1h2v-1h6v1h1v-1h2v1h1v-1h3v1h1v-1h6v1h1v-1h1v1h1v-1h1v1h1v-1h5v-1h1v1h10v1h1v-1h3v-1h1v2h1v-1h1v-1h1v1h6v1h1v-1h1v4h-2v1h-1v-1h-2v1h-1v-1h-3v1h-2v-1h-1v1h-1v-1h-5v1h-1v-1h-2v2h-1v-2h-1v1h-2v-1h-3v1h-1v-1h-1v1h-1v-1h-2v1h-1v-1h-2v1h-2v-1h-4v1h-3v-1h-4v1h-1v-1h-4v1h-1v-1h-4v1h-2v-1h-8v1h-1v-1h-1v1h-1v-1h-1v1h-4v-1h-4v1h-1v-1h-3v1h-1v-1h-1v1h-1v-1h-1v1h-1v-1h-1v2h-1v-2h-2v1h-1v-1h-3v1h-2v-1h-2v1h-1v-1h-1v1h-1v-1h-6v1h-2v-1h-1v1h-5v-1h-1v1h-1v-1h-2v1h-2v-1h-1v1h-1v-1h-4v1h-1v-1h-6v1h-1v-1h-2v1h-2v-1h-2v1h-2v-1h-2v1h-1v-1h-5v1h-2v-1h-7v1h-1v-1h-3v1h-1v-1h-5v1h-1v-1h-1v1h-1v-1h-3v1h-2v-1h-5v1h-1v-1h-3v1h-2v-1h-2v1h-1v-1h-3v1h-2v-1h-2v1h-1v-1h-7v1h-1v-1h-1v1h-1v-1h-2v1h-1v-1h-4v1h-1v-1h-3v1h-1v-1h-1v1h-1v-1h-2v1h-2v-1h-2v1h-1v-1h-7v1h-2v-1h-4v1h-1v-1h-2v1h-1v-1h-1v1h-1v-1h-5v1h-1v-1h-2v1h-2v-1h-1v1h-1v-1h-2v1h-2v-1h-2v1h-1v-1h-3v1h-1v-1h-5v1h-3v-1h-1v1h-1v-1h-2v1h-2v-1h-6v2h-1v-2h-3v1h-1v-1h-1v1h-1v-1h-7v1h-1v-1h-3v1h-1v-1h-3v1h-1v-1h-2v1h-1v-1h-1v1h-1v-1h-3v1h-3v-1h-1v1h-2v-1h-2v1h-2v-1h-2v1h-2v-1h-1v1h-1v-1h-6v1h-1v-1h-2v1h-1v-1h-1v1h-1v-1h-1v1h-1v1h-1v-2h-1v1h-1v-1h-1v1h-2v-1h-5v1h-1v-1h-2v1h-1v-1h-1v1h-1v-1h-2v1h-1v-1h-1v1h-1v-1h-2v1h-1v-1h-3v1h-1v-1h-1v1h-3v-1h-1v1h-1v-1h-3v1h-1v-1h-7v1h-3v-1h-1v1h-1v-1h-2v1h-1v-1h-5v1h-1v-1h-1v2h-1v-1h-1v-1h-4v1h-2v-1h-1v1h-1v-1h-1v1h-1v-1h-4v1h-1v-1h-7v1h-1v-1h-4v1h-2v-1h-1v1h-2v-1h-2v1h-1v-1h-2v1h-1v-1h-1v1h-1v-1h-2v1h-1v-1h-3v1h-1v-1h-4v1h-1v-1h-1v1h-1v-1h-1v1h-3v-1h-1v1h-4v-1h-1v1h-1v-1h-4v1h-1v-1h-2v1h-1v1h-1v-2h-3v1h-1v-1h-3v1h-1v-1h-1v1h-1v-1h-2v1h-1v-1h-1v1h-3v-1h-1v1h-1v-1h-2v1h-5v-1h-3v1h-1v1h-1v-2h-1v1h-1v-1h-1v1h-1v-1h-3v1h-1v-1h-1v1h-3v-1h-1v1h-1v-1h-1v1h-2v-1h-1v1h-1v-1h-3v1h-1v-1h-3v1h-1v-1h-1v1h-3v1h-1v-2h-2v1h-1v-1h-2v1h-3v-1h-3v1h-4v-1h-5v1h-1v-1h-5v1h-1v-1h-2v1h-1v-1h-1v1h-1v-1h-4v1h-1v-1h-4v1h-1v-1h-1v1h-1v-1h-5v2h-1v-1h-3v-1h-3v1h-1v-1h-1v1h-1v-1h-1v2h-1v-2h-2v1h-1v1h-1v-2h-2v1h-4v-1h-3v1h-1v-1h-2v1h-4v-1h-4v1h-1v-1h-1v1h-1v-1h-3v1h-2v-1h-1v1h-1v-1h-3v1h-2v-1h-1v1h-1v-1h-2v1h-1v-1h-1v1h-1v-1h-12v1h-2v-1h-3v1h-1v-1h-4v1h-2v-1h-7v1h-1v-1h-3v1h-1v-1h-2v1h-1v-1h-1v1h-1v-1h-1v1h-4v-1h-3v1h-1v-1h-1v1h-1v-1h-1v1h-1v-1h-1v1h-1v-1h-4v1h-2v-1h-1v1h-1v-1h-1v1h-2v-1h-1v1h-2v-1h-3v2h-1v-1h-1v-1h-1v1h-1v-1h-2v1h-1v-1h-3v1h-1v-1h-1v1h-2v-1h-2v1h-2v-1h-2v1h-2v-1h-1v1h-1v-1h-5v1h-2v-1h-1v1h-2v-1h-3v2h-1v-2h-3v1h-1v-1h-3v1h-1v-1h-15v1h-1v-1h-4v1h-1v-1h-1v1h-1v-1h-2v1h-1v-1h-4v1h-1v-1h-4v2h-1v-2h-1v1h-1v-1h-3v1h-1v-1h-1v1h-2v-1h-1v1h-2v-1h-1v1h-1v-1h-6v1h-1v-1h-5v1h-1v-1h-3v1h-1v-1h-3v1h-1v-1h-2v1h-1v-1h-1v1h-1v-1h-4v1h-1v-1h-5v1h-1v-1h-2v1h-1v-1h-2v1h-1v-1h-2v1h-1v-1h-1v1h-1v-1h-3v1h-1v-1h-1v1h-1v-1h-2v1h-1v-1h-1v1h-1v-1h-4v1h-1v-1h-8v1h-1v-1h-3v2h-1v-2h-4v1h-2v-1h-1v2h-1v-1h-1v-1h-1v1h-1v-1h-2v1h-1v-1h-4v1h-1v-1h-2v1h-1v-1h-2v1h-2v-1h-2v1h-1v-1h-1v1h-1v-1h-1v1h-1v-1h-1v1h-1v-1h-1v1h-1v-1h-7v1h-1v-1h-2v1h-1v-1h-2v1h-1v-1h-2v1h-2v-1h-1v1h-1v-1h-2v1h-2v-1h-2v1h-1v-1h-1v1h-1v-1h-1v1h-1v-1h-1v2h-1v-2h-2v1h-2v-1h-1v1h-1v-1h-7v1h-1v-1h-2v1h-1v-1h-3v1h-1v-1h-2v1h-1v-1h-3v1h-1v-1h-2v1h-1v-1h-1v1h-1v-1h-1v1h-1v-1h-15v1h-2v-1h-1v1h-1v-1h-2v1h-3v-1h-6v1h-1v-1h-4v1h-1v-1h-9v1h-1v-1h-1v1h-2v-1h-5v1h-1v-1h-2v1h-1v-1h-4v1h-3v-1h-1v1h-1v-1h-1v1h-1v-1h-2v1h-1v-1h-1v1h-1v-1h-1v1h-1v-1h-1v1h-2v-1h-1v1h-1v-1h-2v1h-1v-1h-1v2h-1v-2h-7v1h-2v-1h-5v1h-2v-1h-2v1h-1v-1h-2v1h-1v-1h-1z"/><path d="M88 294h1v1h1v-1h1v1h1v-1h1v1h1v-1h4v1h1v-1h3v1h1v-1h3v1h1v-1h1v1h1v-1h4v1h1v-1h1v1h1v-1h1v1h2v-1h4v1h1v-1h1v1h2v-1h4v1h2v-1h2v1h1v-1h1v1h1v-1h3v1h5v-1h5v1h1v-1h1v1h1v-1h1v1h2v-1h5v1h1v-1h3v1h1v-1h7v1h1v-1h6v1h1v-1h1v1h1v-1h9v1h1v-1h2v1h1v-1h5v1h1v-1h2v-1h1v2h1v-1h1v1h2v-1h1v1h1v-1h1v1h1v-1h4v1h2v-1h2v1h3v-1h2v1h1v-1h1v1h2v-1h2v1h1v-1h1v1h1v-1h2v1h1v-1h7v1h1v-1h7v1h1v-1h3v1h1v-1h1v1h1v-1h2v-1h1v1h2v1h1v-1h4v1h1v-1h4v1h1v-1h1v1h1v-1h2v1h1v-1h2v1h1v-1h2v1h1v-1h1v-1h1v1h2v1h2v-1h5v1h1v-1h1v1h1v-1h2v-1h1v1h2v1h3v-1h1v1h2v-1h1v1h1v-1h7v1h1v-1h5v-1h1v2h2v-1h2v1h1v-1h3v1h1v-1h1v1h1v-1h2v1h1v-1h4v1h1v-1h5v1h1v-1h4v1h1v-1h2v1h1v-1h2v1h1v-1h5v1h1v-1h2v1h2v-1h5v1h1v-1h3v1h2v-1h6v1h4v-1h10v1h1v-1h4v1h1v-1h2v1h2v-1h1v-1h1v1h2v1h1v-1h1v1h2v-1h7v1h1v-1h2v1h1v-1h2v1h1v-1h2v1h1v-1h1v1h3v-1h2v1h2v-1h1v1h1v-1h1v1h2v-1h2v1h1v-1h2v1h1v-1h2v1h1v-1h1v1h1v-1h4v1h1v-1h1v1h1v-1h7v-1h1v1h1v1h1v-1h1v1h2v-1h3v1h1v-1h5v1h1v-1h1v1h1v-1h5v1h1v-1h2v1h1v-1h1v1h1v-1h3v1h1v-1h1v1h1v-1h5v1h2v-1h1v1h2v-1h1v1h3v-1h1v1h2v-1h3v1h1v-1h3v1h1v-1h1v1h2v-1h5v1h1v-1h1v1h1v-1h4v1h1v-1h1v1h1v-1h5v1h2v-1h3v1h1v-1h4v1h1v-1h1v1h1v-1h1v1h1v-1h2v1h1v-1h5v1h1v-1h2v1h2v-1h1v1h1v-1h2v1h2v-1h2v1h1v-2h1v1h2v1h1v-1h2v1h1v-1h2v1h1v-1h1v1h2v-1h2v1h1v-1h4v1h2v-1h1v1h1v-1h1v1h1v-1h2v1h1v-1h1v1h3v-1h6v1h1v-1h1v1h3v-1h2v1h2v-1h1v1h1v-1h3v1h1v-1h2v1h2v-1h2v1h2v-1h3v1h1v-1h4v1h2v-1h6v1h1v-1h1v1h1v-1h2v1h1v-1h1v1h1v-1h6v1h1v-1h2v1h1v-1h2v1h2v-1h3v-1h1v2h1v-1h4v1h1v-1h1v1h2v-1h8v1h3v-1h6v1h1v-1h1v1h1v-1h2v1h1v-1h1v1h1v-1h1v1h2v-1h1v-1h1v1h1v1h2v-1h4v1h3v-1h3v1h1v-2h1v1h1v1h1v-1h1v1h2v-1h5v1h1v-1h12v1h1v-1h2v1h2v-1h4v1h1v-1h5v1h1v-1h6v1h1v-1h1v1h1v-1h2v1h1v-1h1v1h1v-2h1v1h4v1h1v-1h1v1h1v-1h1v1h1v-1h3v1h1v-1h1v1h1v-1h4v1h1v-1h3v1h2v-1h8v1h1v-1h3v1h1v-1h3v1h1v-1h7v1h1v-1h2v1h1v-1h3v-1h1v2h2v-1h2v1h2v-1h2v1h1v-1h2v1h2v-1h2v1h3v-1h10v1h3v-1h1v1h1v-1h1v1h1v-1h2v1h1v-2h1v1h1v1h4v-1h2v1h1v-1h1v1h1v-1h1v1h2v-1h5v1h2v-1h2v1h1v-1h3v1h2v-1h7v1h1v-1h5v1h1v-1h2v1h1v-1h1v1h1v-1h6v1h1v-1h4v1h1v-1h4v1h2v-2h1v1h5v1h2v-1h2v1h1v-1h2v1h1v-1h2v1h1v-1h2v1h1v-2h1v1h2v1h1v-1h4v1h2v-1h3v1h2v-1h1v1h3v-1h3v-1h1v1h1v1h1v-1h1v1h2v-1h1v1h1v-1h1v1h2v-1h1v1h1v-1h4v1h1v-1h7v1h1v-1h4v-1h1v2h1v-1h2v1h1v-1h2v1h1v-1h2v1h1v-1h1v1h1v-1h1v-1h2v1h1v1h1v-1h2v1h1v-1h3v1h1v-1h3v1h1v-1h2v1h1v-1h4v1h1v-1h1v1h1v-1h9v1h1v-1h5v1h1v-1h1v1h1v-1h2v1h1v-1h2v1h1v-1h3v1h1v-1h2v1h1v-1h1v1h1v-1h5v1h1v-1h1v1h2v-1h1v-1h1v1h10v1h1v-2h1v2h3v-1h1v1h1v-1h2v1h1v-1h3v1h1v-1h1v1h2v-1h11v1h1v-1h6v1h1v-1h2v1h1v-1h2v1h1v-1h1v1h1v-1h1v1h1v-1h12v1h1v-1h1v1h1v-1h2v1h1v-1h1v1h1v-1h2v1h3v-1h5v4h-2v1h-5v-1h-6v1h-1v-1h-4v1h-1v-1h-1v2h-1v-1h-1v-1h-1v1h-2v-1h-1v1h-1v-1h-2v1h-2v-1h-2v1h-1v-1h-2v1h-1v-1h-1v1h-3v-1h-4v1h-1v-1h-2v1h-1v-1h-1v1h-2v-1h-4v1h-1v-1h-2v1h-2v-1h-7v1h-1v-1h-2v1h-1v-1h-7v1h-2v-1h-2v1h-1v1h-1v3h-1v-5h-3v1h-1v-1h-2v1h-3v-1h-8v1h-1v-1h-1v1h-1v-1h-1v1h-1v-1h-5v1h-1v-1h-2v1h-2v-1h-6v1h-1v-1h-3v1h-1v-1h-3v2h-1v-2h-1v1h-1v-1h-9v1h-1v-1h-1v2h-1v-2h-2v1h-1v-1h-6v1h-2v-1h-2v1h-3v-1h-2v1h-1v-1h-3v1h-1v-1h-2v1h-2v-1h-4v1h-1v-1h-8v1h-1v-1h-1v1h-2v-1h-1v1h-1v-1h-2v1h-2v-1h-4v1h-1v-1h-3v1h-2v-1h-1v1h-1v-1h-2v1h-1v-1h-4v1h-2v-1h-3v2h-1v-2h-1v1h-3v-1h-3v1h-1v-1h-1v1h-1v-1h-1v1h-2v-1h-6v1h-1v-1h-4v1h-1v-1h-2v1h-1v-1h-2v1h-1v-1h-4v1h-1v-1h-1v1h-3v-1h-2v1h-1v-1h-2v1h-1v-1h-1v1h-1v-1h-1v1h-1v-1h-5v1h-1v-1h-2v1h-1v-1h-3v1h-1v-1h-1v1h-1v-1h-9v1h-1v-1h-2v1h-3v-1h-5v2h-1v-2h-1v1h-2v-1h-2v2h-1v-2h-6v1h-2v-1h-14v1h-1v-1h-3v1h-1v-1h-1v1h-1v-1h-1v1h-1v-1h-5v1h-2v-1h-6v1h-1v-1h-3v1h-1v-1h-3v1h-2v-1h-2v1h-1v-1h-2v1h-3v-1h-6v1h-1v-1h-3v1h-2v-1h-1v1h-1v-1h-1v1h-1v-1h-2v1h-1v-1h-3v1h-1v-1h-4v1h-1v-1h-6v1h-1v-1h-5v1h-1v-1h-1v1h-1v-1h-3v2h-1v-2h-4v1h-1v-1h-3v1h-1v-1h-1v2h-1v-2h-3v1h-1v-1h-5v1h-1v-1h-1v2h-1v-2h-4v1h-1v-1h-4v1h-1v-1h-1v1h-1v-1h-1v1h-1v-1h-2v1h-2v-1h-3v1h-1v-1h-2v1h-3v1h-1v-1h-1v-1h-4v1h-1v-1h-2v1h-1v-1h-4v1h-2v-1h-9v1h-2v-1h-3v2h-1v-2h-4v1h-1v-1h-1v1h-1v-1h-2v1h-1v-1h-1v1h-1v-1h-3v1h-1v-1h-1v1h-1v-1h-10v1h-1v-1h-2v1h-1v-1h-2v1h-1v-1h-1v1h-1v-1h-2v1h-1v-1h-2v1h-1v-1h-1v1h-1v-1h-1v1h-1v-1h-4v1h-2v-1h-2v1h-1v-1h-1v1h-1v-1h-5v1h-1v1h-1v-2h-2v1h-2v-1h-3v1h-1v-1h-3v1h-2v-1h-2v1h-1v-1h-5v1h-5v-1h-2v1h-1v-1h-3v1h-1v-1h-2v1h-1v-1h-1v1h-1v-1h-4v1h-1v-1h-4v2h-1v-1h-1v-1h-5v1h-1v-1h-1v1h-1v-1h-3v1h-1v-1h-2v1h-1v-1h-9v1h-1v-1h-2v2h-1v-2h-6v1h-1v-1h-2v1h-1v-1h-11v1h-2v-1h-2v1h-1v-1h-4v1h-2v-1h-4v1h-1v-1h-3v1h-1v-1h-2v1h-3v-1h-3v1h-1v-1h-5v2h-1v-2h-4v1h-1v-1h-1v1h-1v-1h-8v1h-3v-1h-1v1h-1v-1h-2v1h-1v-1h-2v1h-1v-1h-1v1h-1v-1h-5v1h-1v-1h-1v1h-1v-1h-6v1h-1v-1h-7v1h-1v-1h-1v1h-1v-1h-2v1h-2v-1h-2v1h-1v-1h-8v1h-1v-1h-2v1h-1v1h-1v-2h-1v1h-1v-1h-2v1h-1v-1h-2v1h-1v-1h-2v1h-1v-1h-1v1h-2v-1h-2v1h-1v-1h-2v1h-1v-1h-5v1h-1v-1h-2v1h-3v-1h-3v1h-1v-1h-1v1h-1v-1h-2v1h-1v-1h-1v1h-1v-1h-1v1h-1v-1h-3v1h-1v-1h-1v1h-2v-1h-1v1h-2v-1h-1v1h-1v-1h-3v1h-1v-1h-4v1h-1v-1h-2v1h-1v-1h-3v1h-3v-1h-10v1h-1v-1h-4v1h-1v-1h-1v1h-1v-1h-2v2h-1v-2h-1v1h-2v-1h-6v1h-1v-1h-3v1h-1v-1h-1v1h-2v-1h-2v1h-1v-1h-11v1h-1v-1h-1v1h-1v-1h-1v2h-1v-2h-3v1h-2v-1h-1v1h-3v-1h-3v1h-3v-1h-1v1h-1v-1h-5v1h-1v-1h-5v1h-1v-1h-1v1h-1v-1h-8v1h-1v-1h-1v1h-1v-1h-1v1h-2v1h-1v-1h-1v-1h-1v1h-1v-1h-1v1h-1v-1h-4v1h-1v-1h-1v1h-1v-1h-2v1h-1v-1h-5v1h-1v-1h-3v1h-1v-1h-2v1h-1v-1h-1v1h-1v-1h-9v1h-1v-1h-2v1h-1v-1h-2v1h-2v-1h-1v1h-1v-1h-1v1h-1v-1h-2v1h-1v-1h-2v1h-2v-1h-3v1h-1v-1h-1v1h-1v-1h-1v1h-2v-1h-2v1h-2v-1h-6v1h-1v-1h-3v2h-1v-2h-2v1h-1v-1h-2v1h-1v-1h-2v1h-1v-1h-1v1h-1v-1h-3v1h-2v-1h-4v1h-3v-1h-5v1h-1v-1h-1v1h-1v-1h-2v1h-1v-1h-2v1h-1v-1h-2v1h-1v-1h-4v1h-2v-1h-2v1h-1v1h-1v-2h-1v1h-1v-1h-1v1h-1v-1h-7v1h-1v-1h-6v1h-2v-1h-6v1h-1v-1h-1v1h-1v1h-1v-2h-4v1h-1v-1h-3v1h-1v-1h-1v1h-1z"/><path d="M88 324h1v1h3v-1h1v1h1v-1h2v1h4v-1h2v1h6v-2h1v1h1v1h6v-1h1v1h2v-1h1v-1h1v2h2v-1h1v1h2v-1h1v1h2v-1h1v1h3v-1h1v1h5v-1h1v1h1v-1h1v1h3v-1h2v1h1v-1h1v1h1v-1h1v1h1v-1h1v1h1v-1h2v1h6v-1h1v1h2v-2h1v2h3v-1h1v1h3v-1h1v1h3v-1h1v1h3v-1h1v1h3v-2h1v2h4v-2h1v2h2v-1h1v-1h1v2h1v-1h1v1h6v-1h2v1h4v-1h2v1h6v-1h1v1h3v-1h1v1h1v-1h1v1h2v-1h1v1h1v-1h1v1h3v-1h1v-1h1v2h5v-1h1v1h2v-1h1v1h7v-1h1v1h4v-1h1v1h1v-1h1v1h1v-1h1v1h3v-1h1v1h1v-1h2v1h1v-1h2v1h1v-1h1v1h2v-1h1v1h9v-1h1v1h1v-2h1v2h7v-1h1v1h10v-2h1v1h2v1h8v-1h1v1h2v-1h1v1h1v-1h2v1h1v-1h1v1h8v-1h1v1h1v-1h3v1h5v-2h2v2h2v-1h1v1h3v-1h1v1h1v-1h1v1h1v-1h1v1h3v-1h3v1h4v-1h2v1h10v-1h1v1h2v-1h1v1h4v-1h1v1h3v-1h1v1h2v-1h1v1h1v-1h2v1h1v-1h1v1h1v-1h2v1h4v-1h1v1h3v-1h1v1h4v-1h1v1h1v-1h2v1h3v-1h2v1h1v-1h1v1h1v-1h1v1h3v-1h1v1h2v-1h1v1h4v-2h1v2h1v-1h3v1h4v-1h1v1h1v-1h1v1h3v-1h1v1h2v-1h1v1h4v-1h1v1h2v-1h2v1h1v-1h2v1h1v-1h2v1h1v-1h2v1h2v-1h1v1h9v-1h1v1h5v-1h1v1h2v-1h2v1h1v-1h1v1h1v-1h1v1h2v-1h1v1h2v-1h1v1h1v-1h1v1h1v-1h1v1h2v-1h1v1h4v-1h1v1h5v-1h2v1h4v-1h1v1h3v-1h1v1h1v-1h1v1h1v-1h2v1h1v-1h1v1h2v-1h1v1h1v-1h1v1h3v-1h2v1h1v-1h1v1h9v-1h1v1h2v-1h1v1h1v-1h1v1h1v-1h1v1h3v-1h3v1h4v-1h1v1h3v-1h2v1h4v-1h4v-1h1v2h2v-1h2v1h9v-1h2v1h3v-1h1v1h12v-1h1v-1h1v2h4v-1h2v1h1v-1h1v1h1v-1h1v1h5v-1h1v1h1v-1h1v1h10v-1h1v1h4v-1h1v1h3v-1h1v1h4v-1h2v1h1v-1h1v1h1v-1h2v1h1v-1h2v1h7v-1h2v1h1v-1h1v1h1v-1h1v1h6v-1h1v1h3v-1h1v1h8v-1h1v1h2v-1h1v1h11v-1h1v1h1v-1h1v1h1v-1h1v1h1v-1h1v1h1v-2h1v2h2v-1h1v1h4v-1h2v1h6v-1h1v1h2v-1h1v1h3v-1h1v1h9v-1h1v1h1v-1h1v1h5v-1h1v1h2v-1h2v1h4v-1h1v-1h1v2h2v-1h1v1h2v-1h1v1h2v-1h1v1h16v-1h1v1h2v-1h1v1h1v-1h1v1h3v-1h1v1h2v-1h1v1h15v-1h1v1h1v-1h1v1h2v-1h2v1h1v-1h1v1h4v-1h1v1h2v-1h1v1h2v-2h1v2h4v-2h1v1h2v1h4v-1h1v1h3v-1h2v1h6v-1h1v1h1v-1h1v1h2v-2h1v2h2v-1h2v1h3v-1h2v1h2v-1h1v1h4v-1h1v1h4v-1h1v1h15v-1h1v1h2v-1h1v1h2v-1h1v1h1v-1h1v1h6v-1h1v1h1v-1h1v1h2v-1h1v1h1v-1h1v1h4v-1h1v-1h1v1h1v1h1v-1h2v1h6v-1h1v1h2v-1h2v1h3v-1h2v1h3v-2h1v1h1v1h6v-1h3v1h2v-1h2v1h2v-2h1v2h2v-1h1v1h5v-2h1v2h7v-1h1v1h9v-1h1v1h2v-1h1v1h4v-1h1v1h2v-1h1v1h2v-1h1v1h4v-1h1v1h6v-1h1v-1h1v2h1v-1h1v1h2v-1h1v1h4v-1h1v1h5v-2h1v2h1v-1h1v1h2v-1h2v1h4v-1h1v1h5v-1h1v1h1v-2h1v2h2v-1h1v-1h1v2h1v-1h1v1h2v-1h1v1h2v-1h1v1h7v-1h1v1h5v-1h1v1h1v-1h1v1h3v-2h1v2h2v-1h1v1h3v-1h1v1h1v-1h1v1h1v-1h1v1h2v-1h1v1h8v-1h1v1h1v-1h1v1h2v-1h1v1h2v-1h3v1h1v-1h1v1h2v-1h1v1h5v-1h2v1h3v-1h1v1h1v-1h4v1h2v-1h1v1h3v-1h1v1h3v-1h1v1h1v-1h1v1h1v-2h1v1h1v1h1v-1h1v1h4v-1h1v1h2v-1h2v1h3v-2h1v1h1v1h2v-1h1v1h2v-1h2v5h-1v-1h-2v1h-6v-1h-1v1h-1v-1h-2v1h-2v-1h-2v1h-7v-1h-1v1h-3v-1h-5v1h-10v-1h-1v1h-4v-1h-1v1h-3v-1h-1v1h-1v-1h-1v1h-5v-1h-2v1h-2v-1h-1v1h-9v-1h-2v1h-5v-1h-2v1h-7v-1h-1v1h-8v-1h-1v1h-5v-1h-1v1h-2v-1h-1v1h-4v-1h-1v1h-3v-1h-1v1h-4v-1h-1v1h-11v-1h-1v1h-5v-1h-2v1h-4v-1h-1v1h-1v-1h-1v1h-7v-1h-1v1h-9v1h-1v-1h-1v-1h-2v1h-3v-1h-1v1h-10v-1h-1v1h-5v1h-1v-1h-1v-1h-1v1h-1v-1h-1v1h-6v-1h-1v1h-2v-1h-1v1h-2v-1h-1v2h-1v-1h-4v-1h-1v1h-13v-1h-1v1h-5v-1h-2v1h-2v-1h-1v1h-10v-1h-1v1h-8v-1h-1v1h-1v-1h-1v1h-3v-1h-1v1h-8v-1h-1v1h-2v-1h-1v1h-6v-1h-5v1h-1v-1h-2v1h-3v1h-1v-1h-7v-1h-2v1h-7v-1h-3v1h-6v-1h-2v1h-7v-1h-1v1h-1v-1h-2v1h-11v-1h-3v1h-18v-1h-1v1h-1v-1h-1v1h-8v-1h-1v1h-6v-1h-1v1h-11v-1h-1v1h-2v-1h-2v1h-3v-1h-1v1h-14v-1h-1v1h-8v-1h-1v1h-9v-1h-1v1h-6v-1h-2v1h-1v-1h-1v1h-3v-1h-2v1h-1v-1h-1v1h-2v-1h-1v1h-5v1h-1v-2h-1v1h-3v-1h-4v1h-1v-1h-2v1h-5v-1h-1v1h-24v-1h-3v1h-5v-1h-1v1h-4v-1h-1v1h-3v-1h-1v1h-1v-1h-1v1h-4v-1h-1v1h-1v-1h-1v1h-1v-1h-1v1h-2v-1h-2v1h-16v-1h-2v1h-3v1h-1v-2h-1v1h-6v-1h-1v1h-18v-1h-3v1h-2v-1h-1v1h-4v-1h-1v1h-7v-1h-1v1h-1v-1h-2v1h-2v1h-1v-1h-2v-1h-1v1h-1v-1h-1v1h-3v-1h-2v1h-5v-1h-1v1h-2v-1h-1v1h-9v-1h-1v1h-2v-1h-2v1h-3v-1h-1v1h-2v-1h-1v1h-6v-1h-2v1h-5v-1h-1v1h-7v-1h-2v1h-5v1h-1v-2h-1v1h-2v-1h-1v1h-5v-1h-1v1h-1v1h-1v-1h-7v-1h-1v1h-1v-1h-1v1h-2v-1h-1v1h-2v-1h-1v1h-3v-1h-1v1h-2v-1h-1v2h-1v-2h-1v1h-2v-1h-1v1h-17v1h-1v-1h-1v-1h-1v1h-1v-1h-1v1h-3v-1h-1v1h-1v-1h-3v1h-3v-1h-1v1h-1v-1h-1v1h-7v-1h-1v1h-1v1h-1v-1h-3v1h-1v-1h-3v-1h-1v1h-8v1h-1v-1h-6v-1h-1v1h-1v-1h-1v1h-13v-1h-1v1h-7v-1h-1v1h-1v-1h-1v1h-1v-1h-4v1h-5v-1h-2v1h-5v-1h-2v1h-4v-1h-1v1h-2v-1h-1v1h-6v-1h-1v1h-6v-1h-1v1h-5v-1h-1v1h-2v-1h-1v1h-7v-1h-1v1h-2v-1h-1v1h-1v1h-1v-2h-2v1h-2v-1h-1v1h-2v-1h-1v1h-5v-1h-1v1h-4v-1h-4v1h-3v1h-1v-1h-4v-1h-1v1h-8v-1h-1v1h-2v-1h-3v1h-1v1h-1v-1h-5v-1h-2v1h-1v-1h-2v1h-2v-1h-1v1h-3v-1h-1v1h-2v-1h-1v2h-1v-1h-2v-1h-1v1h-8v-1h-1v1h-9v-1h-1v1h-5v1h-2v-1h-5v-1h-1v1h-2v-1h-1v1h-2v-1h-1v1h-1v-1h-1v1h-1v1h-1v-2h-2v1h-3v-1h-2v1h-2v1h-1v-1h-6v-1h-1v1h-2v-1h-1v1h-3v-1h-1v1h-1v-1h-2v1h-2v-1h-2v1h-1v1h-1v-1h-8v-1h-1v1h-11v-1h-1v1h-2v-1h-2v1h-1v-1h-1v1h-2v-1h-1v1h-5v-1h-1v1h-1v-1h-1v1h-3v-1h-1v1h-3v-1h-2v1h-1v-1h-1v1h-2v1h-1v-1h-1v-1h-1v1h-14v1h-1v-2h-1v1h-5v-1h-2v1h-8v-1h-1v1h-3v-1h-1v1h-3v-1h-1v1h-4v-1h-1v1h-2z"/><path d="M88 355h17v1h2v-1h1v1h1v-1h11v1h1v-1h1v1h1v-1h4v1h2v-1h1v-1h1v2h1v-1h2v1h3v-1h3v1h1v-1h3v1h1v-1h8v1h1v-1h1v1h1v-1h2v1h1v-1h6v1h1v-1h2v1h1v-1h3v1h1v-1h4v1h1v-1h4v1h1v-1h8v1h1v-1h3v-1h1v2h3v-1h3v1h5v-1h3v1h1v-2h1v1h5v1h1v-1h4v1h1v-1h4v-1h1v2h1v-1h7v1h2v-1h1v1h1v-1h5v1h2v-1h4v1h2v-1h7v1h1v-1h3v1h1v-1h8v1h3v-1h2v1h1v-1h1v1h4v-1h1v1h1v-1h7v1h1v-1h8v1h1v-1h4v1h1v-1h2v1h1v-1h1v1h1v-1h8v1h1v-1h7v1h1v-1h1v1h1v-1h1v1h1v-1h5v1h2v-1h1v1h1v-1h5v1h1v-1h4v1h1v-1h2v1h2v-1h2v1h1v-1h2v1h3v-1h2v1h1v-1h3v1h2v-1h3v1h1v-1h7v1h1v-1h1v1h1v-1h4v1h1v-1h3v1h1v-1h1v1h2v-1h4v1h3v-1h5v1h1v-1h1v1h1v-1h3v1h1v-1h1v1h2v-1h10v1h1v-1h3v1h1v-1h1v1h1v-1h1v1h1v-1h1v1h1v-1h1v1h1v-1h1v1h2v-1h2v-1h1v2h1v-1h4v1h1v-1h2v1h2v-1h12v1h1v-1h4v1h1v-1h3v1h1v-1h2v1h1v-1h3v1h1v-1h2v1h1v-1h6v1h1v-1h2v1h1v-1h2v1h1v-1h2v1h1v-1h3v1h1v-1h3v1h1v-1h3v1h1v-1h1v1h3v-1h2v1h2v-1h1v1h1v-1h7v1h1v-1h1v1h2v-1h4v1h1v-1h1v1h1v-1h6v1h1v-1h1v-1h1v1h1v1h2v-1h3v-1h1v1h3v1h1v-1h4v1h1v-1h8v1h4v-1h1v1h1v-1h3v1h2v-2h1v1h6v1h1v-1h1v1h2v-1h4v1h2v-1h1v-1h1v1h8v1h2v-1h3v1h1v-1h1v1h1v-1h2v1h1v-1h3v1h1v-1h2v1h1v-1h2v1h1v-1h3v1h1v-1h1v1h1v-1h12v1h2v-1h7v1h2v-1h1v1h2v-1h2v1h1v-1h2v1h3v-1h5v1h1v-1h4v1h2v-1h1v1h1v-1h5v1h1v-1h3v1h1v-1h4v-1h1v1h11v1h1v-1h2v1h1v-1h2v1h1v-1h6v1h1v-1h1v1h1v-1h6v1h1v-1h2v1h1v-2h1v1h2v1h1v-1h1v1h2v-1h3v1h1v-1h1v1h1v-1h11v1h1v-1h5v1h1v-1h5v1h1v-1h3v1h1v-1h2v1h1v-1h3v1h1v-1h1v1h1v-1h1v1h1v-1h1v-1h1v1h10v1h1v-1h13v1h1v-1h1v1h1v-1h6v-1h1v2h1v-1h2v1h1v-1h4v1h1v-1h6v1h1v-1h4v-1h1v1h1v-1h1v1h2v1h1v-1h2v-1h1v1h5v1h1v-1h5v1h1v-1h3v-1h1v1h3v1h1v-1h2v1h3v-1h9v1h1v-1h6v1h4v-1h2v1h1v-1h1v1h1v-1h1v1h1v-1h9v1h2v-1h16v1h2v-1h1v1h1v-2h1v2h1v-1h3v1h1v-1h3v1h1v-1h2v1h1v-1h10v1h1v-1h4v1h1v-1h2v1h2v-1h2v1h1v-1h1v1h1v-1h3v1h1v-1h1v1h1v-1h3v1h1v-1h2v1h1v-1h11v1h1v-1h4v1h1v-1h4v1h1v-1h2v1h1v-1h1v1h1v-1h1v1h1v-1h3v1h1v-1h5v1h3v-1h20v1h2v-1h3v1h1v-1h5v1h1v-1h4v-1h1v1h1v1h1v-1h4v1h1v-1h4v1h1v-1h1v1h1v-1h1v1h2v-1h3v1h1v-2h1v1h2v1h1v-1h1v1h1v-1h5v1h1v-1h1v1h1v-1h1v-1h1v1h1v1h1v-1h7v1h1v-1h2v1h1v-1h7v1h1v-1h1v1h1v-1h1v1h2v-1h3v1h1v-1h1v1h2v-1h5v1h1v-1h2v-1h1v1h1v1h2v-1h3v-1h1v1h3v1h2v-1h7v1h3v-1h1v1h2v-1h1v1h1v-1h2v1h1v-1h13v1h1v-1h1v1h1v-1h4v1h1v-1h7v5h-3v-1h-4v1h-1v-1h-1v1h-1v-1h-1v1h-1v-1h-4v1h-2v-1h-1v1h-1v-1h-2v1h-1v-1h-8v1h-3v-1h-4v1h-3v-1h-4v1h-1v-1h-2v1h-2v-1h-5v1h-1v-1h-1v1h-1v-1h-2v1h-3v-1h-1v1h-2v-1h-6v1h-3v-1h-1v2h-1v-2h-4v1h-2v-1h-5v1h-1v-1h-3v1h-1v-1h-1v1h-2v-1h-8v1h-1v-1h-3v1h-1v-1h-1v1h-1v-1h-1v1h-1v-1h-1v1h-2v-1h-5v1h-1v-1h-3v1h-1v-1h-8v1h-1v-1h-5v1h-2v-1h-1v1h-1v-1h-2v1h-3v-1h-3v1h-1v1h-1v-2h-3v2h-1v-1h-1v-1h-2v1h-1v-1h-1v1h-5v-1h-3v1h-1v-1h-2v1h-3v-1h-6v1h-1v-1h-1v2h-1v-2h-1v1h-1v-1h-1v1h-2v-1h-10v1h-1v-1h-6v1h-1v-1h-3v1h-1v-1h-2v1h-3v-1h-1v1h-1v-1h-5v1h-1v-1h-3v1h-1v-1h-11v1h-1v1h-1v-2h-2v1h-1v-1h-1v1h-1v-1h-6v1h-1v-1h-2v1h-1v-1h-1v1h-3v-1h-4v1h-1v-1h-4v1h-1v-1h-2v1h-1v-1h-1v1h-1v-1h-3v1h-1v-1h-1v1h-2v-1h-2v2h-1v-2h-6v1h-1v-1h-1v1h-1v-1h-1v1h-1v-1h-1v2h-1v-2h-3v1h-1v-1h-3v1h-1v-1h-2v1h-1v-1h-2v1h-1v-1h-3v1h-2v-1h-2v1h-2v-1h-2v1h-1v-1h-6v1h-2v-1h-2v1h-1v-1h-3v1h-3v-1h-1v1h-5v1h-1v1h-1v-3h-1v1h-2v1h-2v-2h-2v2h-1v-2h-1v1h-1v-1h-1v1h-1v-1h-3v1h-1v-1h-2v1h-1v-1h-1v1h-1v-1h-1v1h-2v-1h-3v1h-3v-1h-10v1h-1v-1h-3v1h-2v-1h-10v1h-1v-1h-1v1h-1v-1h-5v1h-1v-1h-6v1h-1v-1h-3v1h-1v-1h-1v1h-1v-1h-4v1h-1v-1h-6v1h-1v-1h-4v1h-2v-1h-1v1h-2v-1h-1v1h-2v-1h-6v1h-1v-1h-3v1h-5v-1h-4v1h-2v-1h-9v1h-1v-1h-1v1h-1v-1h-4v1h-1v-1h-1v1h-1v-1h-2v1h-1v-1h-3v1h-1v-1h-3v1h-1v-1h-2v1h-1v-1h-1v1h-2v-1h-2v1h-3v-1h-1v1h-1v-1h-6v2h-2v-1h-1v-1h-2v1h-1v-1h-4v1h-1v-1h-2v2h-1v-1h-2v-1h-2v1h-1v-1h-1v1h-2v-1h-4v2h-1v-2h-2v1h-1v-1h-1v1h-1v-1h-6v1h-2v-1h-3v1h-3v-1h-8v1h-1v-1h-3v1h-1v-1h-4v1h-1v-1h-9v1h-2v-1h-1v1h-1v-1h-1v1h-1v-1h-2v1h-2v-1h-1v1h-1v-1h-3v1h-1v-1h-3v1h-1v-1h-1v1h-2v-1h-5v1h-2v-1h-3v1h-1v-1h-1v1h-1v-1h-1v1h-1v-1h-3v1h-1v-1h-3v1h-1v-1h-6v1h-1v-1h-4v1h-1v-1h-1v1h-1v-1h-3v1h-1v-1h-1v1h-1v-1h-2v1h-1v-1h-4v1h-1v-1h-2v1h-1v-1h-1v1h-1v-1h-3v1h-1v-1h-3v1h-3v-1h-7v1h-1v-1h-1v1h-2v-1h-2v1h-1v-1h-1v1h-3v-1h-2v1h-1v-1h-1v1h-1v-1h-2v1h-1v-1h-1v1h-2v-1h-2v1h-2v-1h-3v1h-2v-1h-3v1h-1v-1h-1v1h-1v1h-1v-1h-2v-1h-3v1h-1v-1h-3v1h-1v-1h-3v1h-1v-1h-6v1h-1v-1h-2v1h-3v-1h-3v1h-1v-1h-2v2h-1v-2h-6v1h-1v-1h-7v2h-1v-2h-1v1h-1v-1h-2v1h-1v-1h-2v1h-1v1h-1v-2h-1v2h-1v-2h-3v1h-1v-1h-3v1h-1v-1h-2v1h-1v-1h-3v1h-1v-1h-4v1h-1v1h-1v-2h-1v1h-1v-1h-1v1h-2v-1h-4v1h-1v-1h-6v1h-2v-1h-2v1h-2v-1h-2v1h-2v-1h-4v1h-1v-1h-2v1h-1v-1h-2v1h-1v-1h-1v2h-1v-1h-1v-1h-1v1h-1v-1h-3v2h-1v-2h-2v1h-1v-1h-1v1h-2v-1h-8v2h-1v-1h-1v-1h-2v2h-1v-1h-2v-1h-8v1h-1v-1h-1v1h-2v-1h-8v1h-1v-1h-3v1h-2v-1h-1v1h-1v-1h-1v1h-1v-1h-3v1h-1v-1h-5v2h-2v-1h-1v-1h-2v1h-1v-1h-5v1h-1v-1h-3v1h-1v-1h-3v1h-1v-1h-3v1h-1v-1h-1v1h-2v-1h-5v1h-3v-1h-2v1h-1v-1h-3v1h-2v-1h-1v1h-1v-1h-2v1h-1v-1h-1v1h-1v-1h-6v2h-1v-1h-1v-1h-2v1h-1v-1h-1v1h-2v-1h-1v1h-1v-1h-5v1h-1v-1h-2v1h-3v-1h-1v1h-2v1h-2v-1h-1v-1h-2v1h-1v-1h-1v1h-2v-1h-1v1h-2v-1h-1v1h-1v-1h-2v1h-2v-1h-1v1h-2v-1h-1v2h-1v-2h-1v1h-2v-1h-2v1h-1v1h-1v-2h-2v1h-1v-1h-1v1h-1v-1h-1v1h-1v-1h-2v1h-1v-1h-4v1h-1v-1h-1v1h-1v-1h-1v1h-1v-1h-1v1h-1v-1h-1v1h-1v-1h-3v1h-1v-1h-6v1h-2v-1h-6v2h-1v-1h-1v-1h-4v1h-1v-1h-2v1h-1v-1h-1v1h-1v-1h-1v1h-1v-1h-3v1h-1v-1h-1v1h-4v-1h-1v1h-1v-1h-1v1h-1v-1h-1v1h-1v-1h-1v1h-1v-1h-1v1h-1v-1h-2v1h-1v1h-2v-2h-5v1h-1v-1h-6v2h-1v-2h-4v1h-2v-1h-1z"/><path d="M88 386h1v-1h1v1h2v-2h1v2h2v-1h2v1h1v-1h2v1h1v-1h1v1h1v-1h1v1h1v-1h2v1h1v-1h3v1h1v-1h1v1h1v-1h2v1h1v-1h1v1h1v-1h1v1h2v-1h2v1h1v-1h1v1h1v-1h1v1h1v-1h2v1h2v-1h1v1h1v-1h1v1h1v-1h1v1h1v-1h3v1h1v-1h1v1h1v-1h2v1h1v-1h1v1h1v-1h2v1h3v-1h1v1h2v-1h1v1h2v-1h1v1h1v-1h2v1h1v-1h2v1h1v-1h1v1h2v-1h1v1h1v-1h1v1h1v-1h1v1h1v-1h1v1h3v-1h3v1h1v-1h2v1h2v-1h1v1h3v-1h1v1h1v-1h1v1h1v-1h1v1h1v-1h2v1h1v-1h1v1h1v-1h2v1h1v-1h1v1h1v-1h1v1h1v-1h1v1h1v-1h1v1h1v-1h1v1h1v-2h1v2h1v-1h1v1h1v-1h1v1h1v-1h1v1h1v-2h1v1h2v1h1v-1h1v1h1v-1h1v1h1v-1h1v1h1v-1h1v1h1v-1h1v1h2v-1h2v1h1v-1h1v1h2v-1h1v1h1v-1h1v1h3v-2h1v2h1v-1h1v1h1v-1h1v1h1v-1h1v1h1v-1h1v1h1v-1h1v1h1v-1h2v1h1v-1h2v1h2v-1h1v1h1v-1h1v1h1v-1h1v1h1v-1h2v1h1v-1h2v-1h1v-1h1v1h1v2h1v-1h6v1h1v-1h1v1h5v-1h1v1h1v-1h2v1h4v-1h1v1h2v-1h1v1h1v-1h4v1h1v-1h1v1h1v-1h1v1h1v-1h1v1h1v-1h1v1h2v-1h2v1h3v-1h1v1h1v-2h1v1h1v1h1v-1h1v1h1v-2h1v1h1v-1h1v2h1v-2h1v1h5v1h2v-1h2v1h1v-1h1v1h1v-1h1v1h1v-1h3v1h1v-1h2v1h1v-1h1v1h3v-1h1v1h1v-1h1v1h1v-1h1v1h1v-1h1v1h1v-1h1v1h1v-1h1v1h4v-1h1v1h1v-1h1v1h1v-1h1v1h1v-1h1v1h1v-1h2v1h1v-1h1v1h1v-1h2v1h4v-1h1v1h2v-1h1v1h1v-1h1v1h1v-1h1v1h1v-1h2v1h2v-1h1v1h2v-1h2v1h1v-1h1v1h1v-1h1v1h3v-1h1v1h2v-1h1v1h2v-1h2v1h1v-1h1v1h2v-1h1v1h1v-1h2v1h1v-1h1v1h1v-2h1v2h1v-1h2v1h1v-2h1v1h1v1h1v-1h1v1h1v-1h2v1h1v-1h1v1h5v-1h1v1h2v-1h2v1h1v-1h1v1h1v-1h1v1h1v-1h1v1h1v-1h1v1h1v-1h1v1h1v-1h1v1h1v-1h1v1h1v-1h1v1h4v-1h1v1h1v-1h5v1h2v-1h4v1h1v-1h1v1h2v-1h2v1h1v-1h3v1h1v-1h1v1h2v-1h2v1h1v-1h1v1h1v-1h2v1h1v-1h1v1h1v-1h1v1h1v-1h3v1h1v-1h3v1h1v-1h1v1h2v-1h1v1h1v-1h1v1h1v-1h1v1h1v-1h1v1h1v-1h1v1h2v-1h3v1h1v-1h1v1h1v-1h1v1h1v-1h1v1h1v-1h1v1h1v-1h1v1h1v-1h1v1h2v-1h3v1h1v-1h1v1h1v-1h2v1h1v-1h1v1h1v-1h1v1h2v-1h2v1h1v-1h2v1h1v-1h1v1h3v-1h2v1h1v-1h1v-1h1v1h1v1h3v-1h2v1h2v-1h1v1h1v-1h1v1h1v-1h1v1h1v-1h1v1h1v-1h2v1h1v-1h1v1h1v-1h1v1h1v-1h2v1h1v-1h2v1h2v-1h1v1h1v-1h2v1h1v-1h1v1h1v-1h1v1h1v-1h2v1h2v-1h1v1h1v-1h1v1h1v-1h1v1h1v-2h1v1h2v1h1v-1h1v1h1v-1h2v1h1v-1h1v1h1v-1h4v1h1v-1h1v1h1v-1h1v1h1v-1h2v1h1v-1h1v1h1v-1h2v1h1v-1h1v1h1v-1h1v1h1v-1h1v1h1v-1h1v1h1v-1h1v1h1v-1h1v1h2v-1h1v1h1v-1h1v1h1v-1h1v1h1v-1h1v1h3v-1h2v1h1v-1h2v1h1v-1h2v1h1v-2h1v1h1v1h1v-1h1v1h1v-1h1v1h1v-1h2v1h1v-1h1v1h1v-1h1v1h1v-1h3v1h1v-1h2v1h1v-1h1v1h3v-1h1v1h1v-1h1v1h2v-1h2v1h1v-1h1v1h1v-1h2v1h2v-1h2v1h1v-1h1v1h1v-1h1v1h1v-1h1v1h1v-1h1v1h1v-1h1v1h6v-1h1v-1h1v1h1v1h2v-1h1v1h1v-1h2v1h1v-1h1v1h1v-1h1v1h1v-1h1v1h1v-1h1v1h1v-1h2v1h1v-1h1v1h5v-1h1v1h2v-2h1v2h1v-2h1v2h2v-1h1v1h1v-1h1v1h1v-1h1v1h1v-1h1v1h2v-1h1v1h1v-1h1v1h4v-1h1v1h2v-1h3v1h1v-1h1v1h1v-1h1v1h2v-1h2v1h1v-1h1v1h1v-1h1v1h1v-1h1v1h1v-1h4v1h1v-1h1v1h2v-1h1v1h2v-1h1v1h1v-1h2v1h1v-1h2v1h1v-2h1v2h1v-1h1v1h1v-1h1v1h1v-1h1v1h4v-1h1v1h1v-1h3v1h1v-1h1v1h1v-1h2v1h2v-1h2v1h1v-1h1v1h3v-1h1v1h1v-1h3v1h1v-1h1v1h2v-1h1v1h1v-1h3v1h1v-1h1v1h1v-1h3v1h1v-1h1v1h1v-1h1v1h1v-1h1v1h1v-1h1v1h1v-1h1v1h2v-1h2v1h1v-1h1v-1h1v2h1v-1h1v1h1v-1h1v1h1v-1h1v1h1v-1h1v1h2v-1h1v1h1v-1h2v1h1v-1h1v1h1v-1h1v1h2v-1h1v1h1v-1h1v1h1v-1h2v1h2v-1h1v1h1v-1h1v1h1v-1h1v1h1v-1h1v1h1v-1h3v1h1v-1h2v1h1v-1h1v1h1v-1h1v1h2v-1h1v1h1v-1h1v1h2v-1h4v1h2v-1h1v1h1v-1h3v1h1v-1h1v1h1v-1h1v1h1v-1h2v1h1v-1h1v1h1v-1h2v1h1v-1h3v1h1v-1h1v1h2v-2h1v2h1v-1h1v1h1v-1h1v1h1v-1h1v1h1v-1h2v1h1v-1h1v1h1v-1h1v1h1v-1h1v1h1v-1h1v1h1v-1h1v1h1v-1h1v1h1v-1h1v1h2v-1h1v1h1v-1h2v1h3v-1h1v1h1v-1h1v1h1v-1h3v1h1v-1h3v1h1v-1h1v1h2v-1h1v1h1v-1h1v1h1v-1h1v1h2v-1h1v1h1v-1h1v1h1v-1h1v1h1v-1h2v-1h1v2h1v-1h1v1h1v-1h1v1h2v-1h1v1h1v-1h1v1h4v-1h1v1h1v-1h1v1h1v-1h1v1h1v-1h1v1h1v-1h1v1h1v-1h1v1h2v-1h2v1h1v-1h2v1h2v-1h1v1h1v-1h2v1h2v-1h1v1h2v-1h4v1h1v-1h1v1h1v-1h1v1h1v-1h2v1h4v-1h1v1h1v-1h2v1h1v-1h3v1h2v-1h2v1h1v-1h1v1h1v-1h4v1h1v-1h2v1h2v-1h1v1h1v-2h1v2h1v-1h1v1h1v-1h1v1h1v-1h2v1h1v-1h2v1h1v-1h3v1h1v-1h2v1h1v-1h1v1h2v-1h2v1h2v-1h1v1h1v-1h1v1h1v-1h1v1h3v-1h1v1h1v-1h1v1h1v-1h1v1h1v-1h1v1h1v-1h3v1h1v-1h1v1h2v-1h2v1h1v-1h1v1h1v-1h2v1h1v-1h1v1h2v3h-1v1h-3v-1h-2v1h-1v-1h-3v1h-1v-1h-2v1h-2v-1h-1v1h-1v-1h-3v1h-1v-1h-3v1h-2v-1h-1v1h-2v-1h-2v1h-1v-1h-1v1h-4v-1h-1v1h-2v-1h-1v1h-1v-1h-1v1h-2v-1h-2v1h-1v-1h-1v1h-1v-1h-2v1h-1v-1h-1v1h-2v-1h-1v1h-2v-1h-1v1h-3v-1h-2v1h-1v-1h-4v2h-1v-2h-1v1h-1v1h-1v-1h-1v-1h-2v1h-1v1h-1v-1h-1v-1h-1v1h-1v1h-1v-1h-1v-1h-1v1h-2v-1h-1v1h-1v-1h-1v1h-1v1h-1v-1h-1v-1h-1v1h-1v-1h-1v1h-1v-1h-3v1h-2v-1h-1v1h-1v-1h-1v1h-2v-1h-2v1h-2v-1h-1v1h-1v-1h-1v1h-1v-1h-2v1h-2v-1h-1v1h-1v-1h-1v1h-1v-1h-1v1h-2v-1h-2v1h-1v-1h-2v1h-1v-1h-1v1h-2v-1h-2v1h-1v-1h-1v1h-4v-1h-1v1h-1v-1h-1v1h-1v-1h-1v1h-1v-1h-1v1h-3v-1h-2v1h-1v-1h-2v1h-1v-1h-1v1h-2v-1h-1v1h-1v-1h-1v1h-1v-1h-1v1h-1v-1h-1v1h-3v-1h-2v1h-1v-1h-1v1h-1v-1h-1v1h-1v-1h-1v1h-1v-1h-1v1h-1v-1h-1v1h-2v-1h-1v1h-1v-1h-1v1h-1v-1h-2v1h-1v-1h-1v1h-2v-1h-1v1h-1v-1h-1v1h-1v-1h-1v1h-1v-1h-1v1h-2v-1h-1v1h-1v-1h-1v1h-1v-1h-1v1h-1v-1h-1v1h-2v-1h-1v1h-1v-1h-1v1h-1v-1h-2v1h-1v-1h-1v1h-1v-1h-1v1h-1v-1h-2v1h-1v-1h-1v1h-1v-1h-1v1h-1v-1h-1v1h-1v-1h-1v2h-1v-2h-1v1h-1v-1h-1v1h-1v-1h-1v1h-1v-1h-2v1h-1v-1h-1v1h-1v-1h-3v1h-1v-1h-1v1h-2v-1h-1v1h-2v-1h-1v1h-1v-1h-1v1h-2v-1h-1v1h-1v-1h-1v1h-1v-1h-1v1h-1v-1h-2v1h-1v-1h-1v1h-2v-1h-1v1h-1v-1h-1v1h-1v-1h-1v1h-1v-1h-2v1h-1v-1h-3v1h-2v-1h-1v1h-2v-1h-2v1h-1v-1h-1v1h-1v-1h-1v1h-2v-1h-1v1h-1v-1h-1v1h-1v-1h-1v1h-2v-1h-2v1h-1v-1h-1v1h-1v-1h-1v1h-1v-1h-1v1h-1v-1h-1v1h-1v-1h-2v1h-1v-1h-1v1h-1v-1h-1v1h-2v-1h-1v1h-2v-1h-1v1h-2v-1h-1v1h-1v-1h-1v2h-1v-1h-3v-1h-1v1h-1v-1h-2v1h-1v-1h-1v1h-3v-1h-1v1h-2v-1h-3v1h-1v-1h-1v1h-1v-1h-2v1h-1v-1h-1v1h-1v1h-1v-1h-1v-1h-1v1h-1v-1h-1v1h-1v-1h-3v1h-1v-1h-3v1h-1v-1h-2v1h-2v-1h-2v1h-1v-1h-3v1h-1v-1h-1v1h-1v-1h-2v1h-2v-1h-1v1h-1v-1h-1v1h-1v-1h-1v2h-1v-2h-1v1h-2v-1h-3v1h-1v-1h-2v1h-1v-1h-3v1h-1v-1h-2v1h-1v-1h-1v1h-1v-1h-1v1h-2v-1h-1v1h-1v-1h-1v1h-1v-1h-1v1h-3v-1h-1v1h-2v-1h-1v1h-1v-1h-1v1h-1v-1h-1v1h-2v-1h-1v1h-1v-1h-1v1h-1v1h-1v-1h-2v-1h-2v1h-1v-1h-1v1h-1v-1h-2v1h-1v-1h-1v1h-1v-1h-1v1h-1v-1h-1v1h-2v-1h-1v1h-1v-1h-1v1h-2v-1h-1v1h-1v-1h-1v1h-1v-1h-2v1h-1v-1h-2v1h-1v-1h-3v1h-1v1h-1v-2h-1v1h-1v-1h-1v1h-1v-1h-1v1h-2v-1h-1v1h-2v-1h-1v2h-1v-2h-1v1h-1v-1h-1v1h-1v-1h-2v1h-1v-1h-1v1h-2v-1h-2v1h-1v-1h-1v1h-1v1h-1v-1h-1v-1h-1v1h-2v-1h-1v1h-1v-1h-3v1h-1v-1h-1v1h-1v-1h-2v1h-2v-1h-1v1h-1v-1h-1v1h-2v-1h-1v1h-1v-1h-1v1h-1v-1h-1v1h-1v-1h-1v1h-3v-1h-1v1h-1v-1h-1v1h-1v-1h-1v1h-1v-1h-5v1h-1v-1h-1v1h-1v-1h-1v1h-1v-1h-1v1h-1v-1h-1v1h-2v-1h-3v1h-1v-1h-1v1h-1v-1h-1v1h-1v-1h-1v1h-1v-1h-1v1h-1v-1h-1v1h-1v-1h-1v1h-2v-1h-1v1h-2v-1h-1v1h-1v-1h-1v1h-1v-1h-1v1h-1v-1h-2v2h-1v-2h-1v1h-2v-1h-1v1h-1v-1h-1v1h-2v-1h-1v1h-1v-1h-2v1h-1v-1h-1v1h-1v1h-1v-1h-2v-1h-1v1h-1v-1h-2v1h-1v-1h-1v1h-1v-1h-3v1h-1v-1h-1v1h-1v-1h-1v1h-1v-1h-1v1h-3v-1h-1v1h-1v-1h-1v1h-1v-1h-1v1h-1v-1h-1v1h-1v-1h-1v1h-1v-1h-1v1h-1v-1h-1v1h-1v-1h-2v1h-1v-1h-3v1h-2v-1h-1v1h-1v-1h-1v1h-1v-1h-1v1h-1v-1h-1v1h-1v-1h-1v1h-3v-1h-1v1h-2v-1h-1v1h-1v-1h-1v1h-1v-1h-1v1h-1v-1h-1v1h-1v-1h-1v1h-1v-1h-2v1h-2v-1h-1v1h-1v-1h-1v1h-1v-1h-1v1h-1v-1h-2v1h-1v-1h-1v1h-2v-1h-1v1h-1v-1h-1v1h-1v-1h-3v1h-1v-1h-3v1h-1v-1h-1v1h-2v-1h-1v1h-1v-1h-1v1h-2v-1h-2v2h-1v-1h-2v-1h-1v1h-2v1h-1v-2h-1v1h-1v-1h-2v1h-1v-1h-1v1h-1v-1h-1v1h-2v-1h-1v1h-2v-1h-2v1h-1v-1h-2v1h-1v-1h-2v1h-1v-1h-1v1h-3v-1h-1v1h-1v-1h-1v1h-1v-1h-1v1h-1v-1h-2v1h-1v-1h-1v1h-1v-1h-1v1h-1v-1h-2v1h-1v-1h-1v1h-1v-1h-2v1h-1v-1h-1v1h-2v-1h-1v1h-1v-1h-1v1h-1v-1h-1v1h-1v-1h-1v1h-1v-1h-1v1h-3v-1h-1v1h-1v-1h-1v1h-2v-1h-2v1h-1v-1h-1v1h-1v-1h-3v1h-2v-1h-2v1h-1v-1h-1v1h-1v-1h-1v1h-1v-1h-1v1h-2v-1h-1v1h-1v-1h-1v1h-2v-1h-1v1h-2v-1h-1v1h-1v-1h-1v1h-1v-1h-1v1h-1v-1h-1v1h-1v-1h-1v1h-2v-1h-1v1h-1v-1h-1v1h-4v-1h-1v1h-1v-1h-1v1h-1v-1h-1v1h-1v-1h-1v1h-3v-1h-1v1h-2v-1h-1v1h-1v-1h-1v1h-1v-1h-1v2h-1v-2h-1v1h-2v-1h-1v1h-1v-1h-1v1h-1v-1h-1v1h-5v-1h-1v1h-1v-1h-1v1h-1v-1h-1v1h-4v1h-1v1h-1v-2h-3v-1h-2v1h-2v-1h-1v1h-1v-1h-2v1h-1v-1h-1v1h-1v-1h-1v1h-1v-1h-1v1h-1v-1h-1v1h-1v-1h-1v1h-1v-1h-1v1h-1v-1h-3v1h-1v-1h-1v1h-1v-1h-1v1h-2v-1h-1v2h-1v-2h-1v1h-1v-1h-1v1h-1v-1h-1v1h-1v-1h-1v1h-2v-1h-1v1h-1v-1h-1v1h-1v-1h-2v1h-1v1h-2v-1h-1v2h-1v-2h-2v-1h-1v1h-1v-1h-1v1h-1v-1h-1v1h-2v-1h-1v1h-1v-1h-1v1h-1v-1h-1v2h-1v-1h-1v-1h-1v1h-1v-1h-1v1h-1v-1h-2v1h-1v-1h-1v1h-1v-1h-1v1h-1v-1h-1v1h-1v-1h-1v2h-1v-2h-1v2h-1v-2h-1v1h-3v-1h-1v1h-1v-1h-1v1h-1v-1h-2v1h-1v-1h-2v1h-1v-1h-1v1h-1v-1h-1v1h-1v-1h-1v1h-1v-1h-2v1h-1v-1h-1v1h-1v-1h-1v1h-1v-1h-3v1h-1v-1h-2v1h-1v-1h-2v1h-1v-1h-1v2h-1v-2h-1v1h-1v-1h-1v1h-2v-1h-1v1h-1v-1h-1v1h-1v-1h-1v1h-1v-1h-1v1h-2v-1h-1v1h-2v-1h-1v2h-1v-2h-1v1h-1v-1h-1v1h-1v-1h-1v1h-1v-1h-1v1h-3v-1h-2v1h-2v-1h-1v1h-1v-1h-1v1h-1v-1h-1v1h-1v-1h-1v1h-1v-1h-1v1h-1v-1h-1v1h-2v-1h-1v1h-1v-1h-2v1h-1v-1h-1v1h-1v-1h-1v1h-1v-1h-1v1h-1v-1h-2v1h-1v-1h-1v1h-1v-1h-1v1h-1v-1h-2v1h-1v-1h-1v1h-1v-1h-1v1h-1v-1h-1v1h-1v-1h-1v1h-1v-1h-1v1h-1v-1h-1v1h-1v-1h-1v1h-2v-1h-1v1h-1v-1h-2v1h-1v-1h-1v1h-1v-1h-1v1h-1v-1h-1v1h-2v-1h-1v1h-1v-1h-1v1h-2v-1h-1v1h-2v-1h-1v1h-3v-1h-2v1h-1v-1h-1v1h-1v-1h-1v1h-1v-1h-1v1h-1v-1h-1v1h-1v-1h-1v1h-1v-1h-3v1h-1v-1h-1z"/><path d="M88 417h1v-1h2v-1h1v1h9v1h1v-1h10v1h1v-1h16v1h1v-1h2v1h1v-1h21v1h2v-1h17v1h4v-1h3v1h1v-1h1v1h1v-1h15v1h1v-1h5v1h1v-1h9v-1h1v1h4v1h1v-1h4v-1h1v1h2v1h1v-1h4v1h1v-1h3v1h1v-1h8v1h1v-1h11v-1h1v1h4v1h1v-1h2v1h1v-1h1v1h1v-1h9v1h1v-1h7v1h1v-1h2v1h3v-1h4v1h1v-1h21v1h1v-1h2v1h1v-1h1v1h1v-1h11v1h1v-1h1v-1h1v1h8v1h2v-1h11v1h1v-1h2v-1h1v1h4v1h1v-1h7v1h2v-1h6v1h1v-1h12v1h1v-1h5v1h1v-1h2v1h2v-1h3v1h2v-1h4v1h1v-1h2v1h1v-1h11v1h2v-2h1v1h11v-1h1v1h2v-1h1v1h1v1h1v-1h4v1h1v-1h3v-1h1v1h15v1h1v-1h25v1h1v-1h2v-1h1v1h2v1h1v-1h2v1h1v-1h9v1h1v-1h1v1h1v-1h3v1h1v-1h18v1h1v-1h4v1h1v-1h16v1h1v-1h3v1h1v-2h1v1h12v1h1v-1h6v1h1v-1h7v1h2v-1h6v1h2v-1h2v1h1v-1h14v1h1v-1h3v-1h1v1h15v1h3v-1h18v1h1v-1h8v1h1v-1h8v1h2v-1h8v1h1v-1h4v1h2v-1h5v1h3v-1h8v1h1v-1h10v1h2v-1h4v1h1v-1h6v1h1v-1h2v1h1v-1h9v1h1v-1h1v1h1v-1h1v1h1v-1h8v-1h2v2h1v-1h7v1h2v-1h7v1h4v-1h5v-1h1v1h4v1h1v-1h17v1h1v-1h3v1h1v-1h11v1h1v-1h1v1h1v-1h13v1h1v-1h1v-1h1v1h1v1h3v-1h9v1h1v-1h12v1h1v-1h8v-1h1v1h2v1h2v-1h16v1h1v-1h1v-1h1v2h1v-1h3v1h1v-1h3v1h1v-1h1v1h1v-1h1v1h1v-1h1v1h2v-1h5v1h1v-1h8v1h2v-1h4v1h1v-1h12v1h2v-1h1v1h1v-1h1v1h1v-1h1v1h1v-1h2v-1h1v1h3v1h1v-1h9v1h1v-1h1v1h1v-1h3v1h1v-1h5v-1h1v2h1v-1h5v1h2v-1h3v1h3v-1h6v1h1v-1h4v1h1v-1h3v1h1v-1h4v1h1v-1h1v1h1v-1h3v1h3v-1h9v1h1v-1h5v1h1v-1h1v1h1v-1h1v1h2v-1h8v1h2v-1h4v1h3v-1h5v1h4v-1h8v1h1v-1h2v1h1v-1h4v1h1v-1h9v1h1v-1h20v1h2v-1h12v1h1v-1h11v1h2v-1h5v1h1v-1h5v1h1v-1h4v1h1v-1h4v1h1v-1h1v1h2v-1h24v5h-5v-1h-9v1h-2v-1h-2v1h-1v-1h-4v1h-4v-1h-5v2h-1v-2h-9v1h-1v-1h-7v1h-1v-1h-1v1h-2v-1h-1v2h-1v-2h-3v1h-1v-1h-1v2h-1v-1h-1v-1h-1v1h-2v-1h-9v1h-1v-1h-3v1h-1v-1h-4v1h-2v-1h-8v2h-1v-1h-3v-1h-3v1h-1v-1h-1v2h-1v-2h-1v1h-1v-1h-10v1h-1v-1h-1v2h-1v-2h-1v1h-1v-1h-5v1h-1v-1h-1v1h-1v-1h-8v1h-1v-1h-7v1h-1v-1h-1v2h-1v-2h-1v1h-2v-1h-3v1h-1v-1h-2v1h-2v-1h-1v1h-1v-1h-2v1h-1v-1h-5v1h-1v-1h-5v1h-1v-1h-3v1h-1v-1h-1v1h-1v-1h-1v1h-1v-1h-1v1h-1v-1h-1v1h-2v-1h-2v1h-1v-1h-3v1h-1v-1h-1v1h-2v-1h-1v1h-1v-1h-2v2h-1v-2h-6v1h-1v-1h-7v2h-1v-1h-1v-1h-2v1h-1v-1h-3v1h-1v-1h-1v1h-3v-1h-3v1h-2v-1h-2v1h-3v-1h-4v1h-1v-1h-5v1h-1v-1h-6v1h-2v-1h-10v1h-1v-1h-3v1h-2v-1h-1v1h-1v-1h-6v1h-1v-1h-3v1h-1v-1h-1v1h-3v-1h-2v1h-2v-1h-13v1h-2v-1h-2v1h-1v-1h-1v1h-1v-1h-12v1h-1v-1h-4v1h-2v-1h-13v1h-3v-1h-3v1h-1v-1h-2v1h-1v-1h-4v1h-1v-1h-12v2h-1v-1h-2v-1h-1v1h-1v-1h-10v1h-2v-1h-2v1h-1v-1h-3v1h-1v-1h-2v1h-1v-1h-8v1h-1v-1h-5v1h-1v-1h-5v1h-1v-1h-2v1h-1v-1h-1v1h-3v-1h-1v1h-1v-1h-3v1h-4v-1h-1v1h-1v-1h-1v1h-1v-1h-3v1h-1v-1h-5v1h-1v-1h-1v1h-1v-1h-3v1h-1v-1h-4v1h-2v-1h-6v1h-1v1h-1v-2h-1v1h-1v-1h-3v1h-1v-1h-6v1h-1v-1h-3v1h-1v-1h-2v1h-1v-1h-1v1h-3v-1h-4v1h-1v-1h-13v1h-1v-1h-1v1h-1v-1h-17v1h-2v-1h-1v1h-2v-1h-5v1h-2v-1h-4v2h-2v-2h-4v1h-2v-1h-7v2h-1v-2h-4v1h-1v-1h-4v1h-2v-1h-2v1h-1v-1h-3v1h-2v-1h-7v1h-1v-1h-5v1h-1v-1h-2v1h-1v-1h-2v1h-2v-1h-5v2h-1v-1h-1v-1h-2v1h-2v-1h-10v1h-1v-1h-1v1h-3v-1h-5v1h-1v-1h-4v1h-1v-1h-4v1h-2v-1h-3v1h-1v-1h-3v1h-1v1h-1v-2h-1v1h-2v-1h-4v1h-1v-1h-1v1h-2v-1h-1v1h-1v-1h-9v1h-1v-1h-8v1h-1v-1h-4v1h-1v-1h-1v2h-1v-2h-5v1h-1v-1h-2v1h-1v-1h-2v1h-2v-1h-1v1h-1v-1h-18v1h-1v-1h-2v1h-2v-1h-1v1h-1v1h-1v-2h-1v2h-1v-2h-5v1h-1v-1h-9v1h-1v1h-1v-1h-1v-1h-1v1h-1v-1h-5v1h-1v-1h-7v1h-1v-1h-1v1h-1v-1h-1v1h-1v-1h-3v1h-1v-1h-3v1h-2v-1h-1v1h-2v1h-1v-2h-1v1h-1v-1h-2v1h-2v-1h-7v1h-1v-1h-11v1h-3v-1h-4v1h-1v-1h-5v1h-1v-1h-3v1h-1v-1h-5v1h-2v-1h-2v1h-1v-1h-1v1h-1v-1h-4v1h-1v-1h-4v1h-1v-1h-1v1h-1v-1h-5v1h-1v-1h-8v1h-1v-1h-2v1h-1v-1h-5v1h-1v-1h-4v1h-1v-1h-1v1h-1v-1h-2v1h-1v-1h-1v1h-3v-1h-11v1h-1v-1h-2v1h-1v-1h-1v1h-1v-1h-5v1h-1v-1h-2v1h-1v-1h-2v1h-1v-1h-2v1h-1v-1h-5v1h-1v-1h-3v1h-3v-1h-1v1h-2v-1h-9v1h-1v-1h-1v1h-2v-1h-1v1h-1v-1h-1v1h-1v-1h-1v1h-1v-1h-3v1h-1v-1h-2v1h-2v-1h-6v2h-1v-1h-1v-1h-4v1h-1v-1h-1v1h-1v1h-1v-2h-1v1h-1v-1h-5v1h-1v-1h-9v1h-2v-1h-2v1h-1v-1h-2v1h-1v-1h-5v1h-1v-1h-2v1h-2v-1h-1v2h-1v-1h-1v-1h-2v1h-2v-1h-1v1h-2v-1h-2v1h-1v-1h-5v2h-1v-2h-3v1h-1v-1h-3v1h-1v-1h-3v1h-1v-1h-3v1h-1v-1h-4v1h-2v-1h-2v1h-1v1h-1v-1h-1v-1h-1v1h-1v-1h-2v1h-2v-1h-1v1h-1v-1h-5v1h-1v-1h-5v1h-1v-1h-1v1h-1v-1h-6v1h-1v-1h-1v1h-1v-1h-1v1h-2v-1h-7v2h-1v-1h-1v-1h-13z"/><path d="M88 446h3v1h1v-1h6v1h2v-1h1v1h3v-1h3v1h1v-1h3v1h1v-1h3v1h1v-1h6v1h1v-1h1v1h1v-1h2v-1h1v2h1v-1h3v1h1v-1h10v1h1v-1h3v1h1v-1h6v1h1v-1h3v1h2v-1h4v1h1v-1h9v1h1v-1h1v1h1v-1h6v1h1v-1h9v1h1v-1h8v1h1v-1h12v-1h1v1h1v1h1v-1h1v1h1v-1h2v1h2v-1h6v-1h1v1h5v1h1v-1h4v1h1v-1h1v-1h1v2h2v-1h2v1h1v-1h22v1h1v-1h2v1h1v-1h3v1h1v-1h2v1h5v-1h4v1h1v-1h3v1h1v-1h4v1h1v-1h1v1h2v-1h1v1h1v-1h8v1h1v-1h4v1h1v-1h7v-1h1v1h2v1h2v-1h4v1h1v-2h1v1h3v1h2v-1h2v1h1v-1h2v1h1v-1h3v1h1v-1h8v1h1v-1h1v1h1v-1h5v1h1v-1h2v1h1v-1h4v-1h1v2h1v-1h3v1h1v-1h10v1h1v-1h1v-1h1v1h3v1h1v-1h4v-1h1v2h1v-1h3v1h3v-1h1v1h1v-1h2v1h1v-1h14v1h2v-1h2v1h1v-1h2v1h1v-1h3v1h1v-1h1v1h1v-1h2v1h1v-1h1v1h1v-1h2v1h1v-1h1v1h2v-1h1v1h1v-1h7v1h1v-1h1v1h1v-1h2v1h1v-1h2v1h1v-1h7v1h1v-1h2v1h1v-1h3v1h1v-1h1v1h3v-1h2v1h1v-1h6v1h1v-1h4v1h2v-1h2v1h1v-1h5v1h1v-2h1v1h1v1h1v-1h5v1h1v-1h2v1h1v-1h7v1h3v-1h4v1h1v-1h1v1h1v-1h2v1h2v-1h2v1h1v-1h5v1h1v-1h2v-1h1v1h2v1h1v-1h2v1h2v-1h11v-1h1v2h1v-1h3v1h1v-1h1v1h1v-1h2v1h2v-1h1v1h1v-1h4v1h1v-1h1v1h1v-1h7v1h2v-1h10v1h1v-1h8v1h1v-1h2v1h1v-1h3v1h1v-1h1v1h3v-1h12v1h1v-1h1v1h1v-1h6v1h1v-1h1v1h5v-1h9v1h1v-1h4v1h1v-1h1v-1h1v1h3v1h2v-1h2v1h1v-1h2v1h1v-1h2v1h1v-1h2v1h1v-1h6v1h1v-1h4v1h1v-1h2v1h1v-1h5v1h1v-1h1v1h2v-1h3v1h1v-1h5v1h1v-1h3v1h1v-1h2v1h1v-1h1v1h1v-1h1v1h1v-1h2v1h2v-1h2v1h1v-1h9v1h1v-1h1v1h1v-1h4v1h1v-2h1v1h1v1h1v-1h6v1h1v-1h3v1h3v-1h1v1h1v-1h4v-1h1v2h1v-1h6v1h1v-1h1v1h1v-1h5v-1h1v1h11v1h1v-1h7v1h1v-1h3v1h2v-2h1v1h6v1h1v-2h1v1h5v1h1v-1h3v1h4v-1h4v1h2v-1h1v1h1v-1h5v1h1v-2h1v1h1v1h1v-2h1v1h2v-1h1v1h1v1h1v-1h11v1h1v-1h9v1h1v-1h2v1h1v-1h7v1h1v-1h9v1h1v-1h4v1h1v-1h2v1h1v-1h13v1h3v-1h3v1h1v-1h2v1h1v-1h4v1h1v-1h2v1h1v-1h5v1h1v-1h1v1h1v-1h3v1h1v-1h12v1h1v-1h2v1h1v-1h1v1h3v-1h12v1h1v-1h2v1h1v-1h6v1h2v-1h5v1h1v-1h12v1h1v-1h3v1h1v-1h2v1h2v-1h5v1h2v-1h1v1h1v-1h2v-1h1v1h8v1h1v-1h5v1h1v-1h5v1h2v-1h4v1h1v-1h7v1h1v-1h1v1h1v-2h1v1h1v1h1v-1h10v1h1v-1h2v1h1v-1h2v1h2v-1h3v1h1v-1h3v1h3v-1h9v1h1v-1h4v1h1v-1h2v1h2v-1h10v1h1v-1h3v1h1v-1h3v1h1v-1h1v1h1v-1h7v1h2v-1h3v1h3v-1h5v1h3v-1h4v1h1v-1h7v1h1v-1h2v1h1v-1h1v1h1v-1h6v5h-1v-1h-9v1h-1v-1h-1v1h-2v1h-1v-2h-3v1h-4v-1h-2v1h-1v-1h-1v1h-2v-1h-3v1h-2v-1h-4v1h-2v-1h-1v1h-4v1h-1v-2h-8v1h-1v-1h-3v1h-1v1h-1v-2h-3v1h-1v-1h-2v1h-1v-1h-2v1h-1v-1h-7v1h-2v-1h-2v1h-1v-1h-3v1h-1v-1h-1v2h-1v-2h-1v1h-1v-1h-7v1h-1v-1h-11v1h-1v-1h-2v1h-2v-1h-6v1h-1v-1h-1v1h-1v-1h-8v1h-1v-1h-1v1h-1v-1h-5v1h-1v-1h-1v1h-1v-1h-2v1h-1v-1h-5v1h-1v-1h-6v1h-1v-1h-2v1h-2v-1h-13v1h-1v-1h-2v1h-1v-1h-12v1h-1v-1h-2v1h-2v-1h-1v1h-1v-1h-1v1h-1v-1h-1v1h-3v-1h-4v1h-1v-1h-1v1h-1v-1h-4v1h-2v-1h-2v1h-2v-1h-4v1h-2v-1h-6v1h-1v-1h-1v1h-1v-1h-8v1h-4v-1h-4v1h-1v-1h-1v1h-3v-1h-1v1h-1v-1h-3v2h-1v-2h-3v1h-1v-1h-6v1h-2v-1h-1v1h-1v-1h-4v1h-2v-1h-1v2h-1v-2h-1v1h-1v-1h-7v1h-1v-1h-5v1h-1v-1h-5v1h-1v-1h-7v1h-1v-1h-2v1h-1v-1h-3v1h-1v-1h-4v1h-2v-1h-3v1h-1v-1h-3v2h-1v-2h-5v1h-2v-1h-7v1h-1v-1h-11v1h-1v-1h-2v1h-3v-1h-7v1h-1v-1h-1v1h-1v-1h-1v2h-1v-2h-2v1h-1v-1h-8v1h-1v-1h-1v1h-1v-1h-5v1h-1v-1h-4v1h-1v-1h-9v1h-2v-1h-5v1h-1v-1h-3v1h-1v-1h-3v1h-2v-1h-1v1h-2v-1h-5v1h-1v-1h-3v1h-1v-1h-3v1h-1v-1h-5v1h-1v1h-1v-2h-8v1h-2v-1h-1v1h-1v-1h-8v1h-1v-1h-2v1h-2v-1h-3v1h-1v-1h-4v1h-1v-1h-1v1h-1v-1h-2v1h-1v-1h-2v1h-1v-1h-1v1h-1v-1h-2v1h-1v-1h-5v2h-1v-1h-1v-1h-4v1h-3v-1h-10v1h-2v-1h-1v1h-1v-1h-1v2h-1v-2h-8v1h-1v-1h-5v1h-1v-1h-2v1h-2v-1h-7v1h-2v-1h-1v2h-1v-2h-1v1h-2v-1h-3v1h-2v-1h-2v1h-2v-1h-1v1h-1v-1h-8v1h-1v-1h-5v2h-1v-2h-5v1h-1v-1h-2v1h-1v-1h-5v1h-1v1h-1v-2h-1v1h-1v-1h-2v1h-1v-1h-1v1h-1v-1h-3v1h-1v-1h-3v1h-2v-1h-5v1h-1v-1h-3v1h-3v-1h-4v2h-1v-2h-5v1h-1v-1h-3v1h-1v-1h-2v1h-1v-1h-13v1h-1v-1h-3v1h-1v-1h-3v1h-1v-1h-2v1h-1v-1h-2v1h-1v-1h-3v1h-1v-1h-2v1h-1v-1h-4v1h-1v-1h-1v1h-2v-1h-2v1h-1v-1h-1v1h-2v-1h-14v1h-1v-1h-1v1h-3v-1h-3v1h-1v-1h-3v1h-1v-1h-7v1h-1v-1h-5v1h-1v-1h-3v1h-2v-1h-3v1h-2v-1h-7v1h-2v-1h-1v1h-2v-1h-9v1h-1v-1h-3v2h-1v-2h-2v1h-2v-1h-1v1h-3v-1h-3v1h-1v-1h-3v1h-1v-1h-7v1h-1v-1h-2v1h-1v-1h-1v1h-1v-1h-2v1h-2v-1h-3v2h-1v-2h-11v1h-2v-1h-3v1h-1v-1h-6v1h-2v-1h-2v1h-3v-1h-1v1h-1v-1h-8v1h-1v-1h-1v1h-1v-1h-3v1h-2v-1h-1v1h-2v-1h-2v1h-1v-1h-8v1h-2v-1h-6v1h-1v-1h-6v1h-1v-1h-3v1h-1v-1h-1v1h-3v-1h-3v1h-2v-1h-6v1h-1v-1h-9v2h-1v-2h-4v1h-1v-1h-3v1h-1v-1h-12v1h-2v-1h-16v1h-2v-1h-7v1h-1v-1h-3v1h-1v-1h-3v1h-1v-1h-3v1h-2v-1h-8v2h-1v-2h-1v1h-1v-1h-1v1h-2v-1h-2v1h-1v-1h-3v1h-1v-1h-2v1h-1v-1h-4v1h-1v-1h-1v1h-2v-1h-3v1h-1v-1h-3v1h-2v-1h-4v1h-4v-1h-4v2h-1v-2h-3v1h-3v-1h-10v1h-1v-1h-1v1h-2v-1h-5v1h-1v-1h-2v1h-1v-1h-1v1h-1v-1h-4v1h-1v-1h-4v1h-1v-1h-2v1h-2v-1h-1v1h-1v-1h-2v1h-1v-1h-1v1h-1v-1h-2v1h-2v-1h-12v1h-1v-1h-5v1h-1v-1h-1v1h-2v-1h-2v1h-1v-1h-5z"/><path d="M88 476h5v-1h1v2h1v-1h1v1h1v-1h1v1h1v-1h7v1h1v-1h2v1h1v-1h4v1h2v-1h2v1h1v-1h1v1h1v-1h3v1h1v-1h1v1h1v-1h3v1h1v-1h3v1h1v-1h2v1h1v-1h1v1h2v-1h3v1h1v-1h1v1h1v-1h2v1h1v-1h1v1h4v-1h2v1h1v-1h4v1h1v-1h5v1h1v-1h1v1h2v-1h5v1h1v-1h1v1h1v-1h1v-1h1v1h5v1h1v-1h4v1h1v-1h1v1h1v-1h2v1h1v-1h2v-1h1v2h1v-1h12v1h1v-1h6v1h1v-1h3v1h1v-1h1v1h1v-1h1v1h1v-1h1v1h1v-1h3v1h2v-1h3v1h1v-1h1v1h1v-1h1v1h1v-1h1v1h1v-1h3v1h1v-1h3v1h1v-1h1v1h1v-1h2v1h1v-1h1v1h2v-1h1v1h1v-1h1v1h1v-1h1v1h1v-1h4v1h1v-1h2v1h2v-1h1v-1h1v1h2v1h1v-1h1v1h2v-1h9v1h1v-1h2v1h1v-1h6v1h1v-1h2v1h1v-2h1v1h5v1h1v-1h1v1h1v-1h4v-1h1v1h2v1h1v-1h1v1h1v-1h3v1h2v-1h2v1h1v-1h2v1h1v-1h2v1h2v-1h5v1h1v-1h4v1h1v-1h2v1h1v-1h2v1h1v-1h5v1h1v-1h1v1h1v-1h7v1h1v-1h3v1h1v-1h3v1h1v-1h5v1h1v-1h2v1h1v-2h1v2h1v-1h1v1h1v-1h5v1h1v-1h3v1h1v-1h2v1h1v-1h2v1h2v-1h1v1h1v-2h1v1h2v-1h1v1h5v1h2v-1h9v1h1v-2h1v1h2v1h1v-1h2v1h1v-1h3v1h1v-1h2v1h1v-1h2v1h1v-1h3v1h1v-1h1v1h1v-1h2v1h1v-1h5v-1h1v1h5v1h2v-1h3v1h1v-1h2v1h3v-1h7v1h1v-1h1v1h1v-1h3v1h2v-1h1v1h1v-1h1v1h2v-2h1v1h6v1h1v-1h3v1h1v-2h1v1h1v1h1v-1h1v1h1v-1h1v1h1v-1h4v1h1v-1h4v-1h1v2h1v-1h6v1h1v-1h2v1h1v-1h11v1h1v-1h3v1h2v-1h1v1h2v-1h2v1h1v-1h1v1h1v-1h1v1h1v-1h2v1h1v-1h6v1h1v-1h4v1h1v-1h1v1h1v-1h1v1h1v-1h10v1h2v-1h2v1h1v-1h5v1h1v-1h1v1h1v-1h1v1h1v-1h1v1h1v-1h10v1h1v-1h4v1h1v-1h2v1h1v-1h1v1h1v-1h6v1h2v-1h1v1h1v-1h1v1h1v-1h1v-1h1v1h1v-1h1v1h7v1h3v-1h2v1h1v-1h2v1h1v-1h4v1h1v-1h9v1h1v-1h4v1h1v-1h1v-1h1v1h1v1h2v-1h4v1h1v-1h3v1h1v-1h3v1h2v-1h2v1h1v-1h4v1h1v-1h3v1h1v-1h4v1h1v-1h8v1h1v-1h4v1h2v-1h3v1h1v-1h1v1h2v-1h3v1h1v-1h2v-1h1v1h2v1h1v-1h1v-1h1v2h1v-1h6v1h2v-1h1v1h2v-1h1v-1h1v1h1v1h1v-1h1v1h2v-1h4v1h2v-1h4v1h2v-1h7v1h1v-1h3v1h1v-1h3v1h1v-1h1v1h1v-1h2v1h1v-1h6v1h1v-1h2v1h2v-1h3v1h1v-1h3v1h1v-1h1v1h1v-1h9v1h1v-1h2v1h1v-1h2v1h1v-1h5v1h1v-1h3v-1h1v1h1v1h1v-1h2v1h3v-1h1v1h1v-1h3v1h1v-1h1v1h1v-1h1v1h1v-1h2v1h1v-1h1v1h1v-1h5v1h1v-1h2v-1h1v2h1v-1h2v1h1v-1h1v1h1v-1h1v1h1v-1h1v1h1v-1h2v1h1v-1h1v1h2v-1h1v1h1v-1h1v1h1v-1h2v1h1v-1h1v1h2v-1h4v1h1v-1h5v1h1v-1h4v1h2v-1h2v1h1v-1h1v1h1v-2h1v2h1v-1h2v1h1v-1h2v1h2v-1h2v1h3v-1h3v1h1v-1h4v1h1v-1h2v1h1v-1h1v1h2v-1h1v1h1v-1h4v1h2v-1h8v1h1v-1h1v1h1v-1h1v1h1v-1h2v1h1v-1h1v1h1v-1h8v1h1v-1h2v1h1v-1h3v1h2v-1h3v1h1v-1h2v1h1v-1h1v1h1v-1h2v1h1v-1h10v1h1v-1h1v1h1v-1h5v1h1v-1h3v-1h1v2h1v-1h1v1h1v-1h2v1h1v-1h1v1h1v-1h7v1h1v-1h1v1h1v-1h3v1h1v-1h1v1h2v-1h3v1h1v-1h1v1h2v-1h1v1h1v-1h1v1h2v-1h1v1h1v-1h1v1h1v-1h2v1h1v-1h5v1h1v-1h2v1h2v-1h2v1h1v-1h1v1h1v-1h6v1h1v-2h1v1h8v1h1v-1h3v1h1v-2h1v1h5v1h1v-1h1v1h1v-1h1v1h2v-1h3v1h1v-1h1v1h1v-1h5v1h1v-1h4v1h1v-1h3v1h1v-1h5v1h2v-1h9v1h1v-1h2v1h1v-1h1v1h1v-1h1v1h3v-1h6v1h3v-1h1v-1h1v1h1v1h1v-1h8v1h1v-1h5v1h1v3h-1v1h-1v-1h-1v1h-2v-1h-2v1h-4v-1h-1v1h-3v-1h-1v1h-1v-1h-2v1h-1v-1h-1v1h-1v-1h-1v1h-1v-1h-1v1h-4v-1h-1v1h-1v-1h-1v1h-1v-1h-1v1h-1v-1h-2v1h-2v-1h-1v1h-2v-1h-3v1h-2v-1h-3v2h-1v-1h-1v-1h-1v1h-1v-1h-1v1h-1v-1h-3v1h-1v-1h-1v1h-2v-1h-1v1h-4v-1h-1v1h-1v-1h-1v1h-1v-1h-3v1h-1v-1h-1v1h-7v-1h-1v1h-1v-1h-2v1h-1v-1h-3v1h-2v-1h-1v1h-5v1h-1v-1h-2v-1h-2v1h-4v-1h-1v1h-2v-1h-2v1h-2v-1h-2v1h-3v-1h-1v1h-2v-1h-1v1h-1v-1h-6v1h-1v-1h-1v1h-1v-1h-2v1h-1v-1h-1v1h-1v-1h-1v1h-2v-1h-1v1h-1v-1h-1v1h-1v-1h-1v1h-1v-1h-3v1h-2v-1h-1v1h-1v-1h-1v1h-3v-1h-1v1h-1v-1h-2v2h-1v-2h-1v1h-4v-1h-1v1h-3v-1h-1v1h-2v-1h-1v1h-2v-1h-1v1h-2v-1h-1v1h-1v-1h-1v1h-2v-1h-1v1h-2v-1h-1v1h-1v-1h-2v1h-3v-1h-1v1h-1v-1h-1v1h-4v-1h-1v1h-9v-1h-1v1h-3v-1h-1v1h-1v-1h-1v1h-3v-1h-1v1h-5v-1h-2v1h-1v-1h-1v1h-1v-1h-1v1h-1v-1h-4v1h-7v-1h-1v2h-1v-2h-1v1h-1v-1h-1v1h-2v-1h-1v1h-1v-1h-1v1h-1v-1h-2v1h-2v1h-1v-1h-1v-1h-2v1h-1v-1h-1v1h-1v-1h-1v1h-3v-1h-1v1h-2v-1h-1v1h-2v-1h-2v1h-1v-1h-1v1h-1v-1h-1v1h-1v-1h-1v1h-2v-1h-1v1h-2v-1h-2v1h-1v-1h-1v1h-1v-1h-1v1h-2v-1h-2v1h-5v-1h-1v1h-1v-1h-1v1h-2v-1h-1v1h-3v-1h-1v1h-1v-1h-1v1h-5v-1h-1v1h-1v-1h-1v1h-2v-1h-2v1h-3v-1h-1v1h-3v-1h-2v1h-2v-1h-1v1h-1v-1h-1v1h-1v-1h-1v1h-3v-1h-1v1h-3v-1h-1v2h-1v-1h-2v-1h-1v1h-1v-1h-1v1h-2v-1h-1v1h-2v-1h-1v1h-3v-1h-1v1h-1v-1h-1v1h-3v-1h-1v1h-1v-1h-2v1h-3v-1h-1v1h-1v-1h-1v1h-1v-1h-2v1h-3v-1h-1v1h-1v-1h-3v1h-2v-1h-1v1h-2v-1h-2v1h-3v-1h-1v1h-2v-1h-1v1h-1v-1h-1v1h-2v-1h-1v1h-1v-1h-1v1h-2v-1h-2v1h-1v-1h-1v1h-1v-1h-1v1h-2v-1h-1v1h-1v-1h-2v1h-2v-1h-2v1h-3v-1h-1v1h-4v-1h-1v1h-1v-1h-1v1h-1v-1h-1v1h-1v-1h-1v1h-1v-1h-2v1h-1v-1h-1v1h-8v-1h-2v1h-3v-1h-1v1h-6v-1h-1v1h-1v-1h-1v1h-4v-1h-1v1h-6v-1h-2v1h-1v-1h-1v1h-1v-1h-1v1h-2v-1h-1v1h-1v-1h-1v1h-1v-1h-2v1h-1v-1h-2v1h-1v-1h-1v1h-3v-1h-1v1h-4v-1h-1v1h-1v-1h-1v1h-3v1h-1v-1h-1v-1h-1v1h-1v-1h-3v1h-1v-1h-2v1h-1v-1h-1v1h-1v-1h-1v1h-1v-1h-1v1h-1v-1h-1v1h-3v-1h-1v1h-5v-1h-1v1h-1v-1h-2v1h-1v-1h-1v1h-1v-1h-1v1h-2v-1h-1v1h-2v-1h-3v1h-1v-1h-1v1h-1v-1h-2v1h-1v-1h-1v1h-1v-1h-1v1h-2v-1h-1v1h-1v-1h-2v1h-3v-1h-2v1h-1v-1h-1v1h-1v-1h-2v1h-1v-1h-1v1h-1v-1h-1v1h-3v-1h-1v1h-3v-1h-1v1h-1v-1h-2v1h-1v-1h-1v1h-2v-1h-1v1h-2v-1h-2v1h-1v-1h-1v1h-1v-1h-2v1h-1v-1h-1v1h-3v-1h-1v1h-1v-1h-1v1h-1v-1h-4v1h-2v-1h-1v1h-6v1h-1v-1h-1v-1h-1v1h-1v-1h-2v1h-1v-1h-2v1h-2v-1h-1v1h-3v-1h-1v1h-1v-1h-3v1h-3v-1h-1v1h-1v-1h-1v1h-1v-1h-1v1h-1v-1h-1v1h-4v-1h-1v1h-1v-1h-1v1h-2v-1h-1v1h-3v-1h-1v1h-3v-1h-2v1h-1v-1h-1v1h-1v-1h-1v1h-4v-1h-2v1h-5v-1h-1v1h-2v-1h-3v1h-2v-1h-2v1h-1v-1h-1v1h-2v-1h-1v1h-1v-1h-1v1h-1v-1h-1v1h-1v-1h-3v1h-1v-1h-1v1h-1v-1h-1v1h-2v-1h-1v1h-1v-1h-2v1h-1v-1h-1v1h-4v-1h-2v1h-2v-1h-1v1h-2v-1h-1v1h-1v-1h-1v1h-2v-1h-1v1h-9v-1h-1v1h-7v-1h-1v1h-1v-1h-1v1h-1v-1h-1v1h-2v-1h-1v1h-1v-1h-1v1h-1v-1h-1v1h-1v-1h-4v1h-1v-1h-1v1h-1v-1h-1v1h-3v-1h-1v1h-1v-1h-2v1h-1v-1h-2v1h-1v-1h-1v1h-1v-1h-1v1h-2v-1h-1v1h-4v-1h-2v1h-1v-1h-2v1h-6v-1h-1v1h-2v-1h-2v1h-2v-1h-1v1h-7v-1h-1v1h-1v-1h-1v1h-2v-1h-1v1h-1v-1h-2v1h-5v-1h-2v1h-4v-1h-1v1h-1v-1h-1v1h-1v-1h-1v1h-1v-1h-1v1h-2v-1h-2v1h-1v-1h-2v1h-1v-1h-1v1h-1v-1h-1v1h-1v-1h-1v1h-1v-1h-1v1h-1v-1h-1v1h-1v-1h-3v1h-1v-1h-1v1h-5v-1h-2v1h-2v-1h-2v1h-2v-1h-2v1h-2v-1h-1v1h-1v-1h-1v1h-2v-1h-1v1h-2v-1h-1v1h-5v-1h-1v1h-1v-1h-2v1h-2v-1h-1v1h-1v-1h-2v1h-1v-1h-1v1h-1v-1h-2v1h-1v-1h-1v1h-1v-1h-1v1h-1v-1h-6v1h-1v-1h-1v1h-1v-1h-1v1h-1v-1h-1v1h-1v-1h-2v1h-2v-1h-1v1h-2v-1h-1v1h-1v-1h-1v1h-4v-1h-3v1h-2v-1h-2v1h-1v-1h-1v1h-1v-1h-2v1h-4v-1h-1v1h-1v-1h-1v1h-2v-1h-1v1h-2v-1h-1v1h-3v-1h-1v1h-3v-1h-1v1h-1v-1h-1v1h-2v-1h-1v1h-4v-1h-3v2h-1v-1h-1v-1h-2v1h-5v-1h-1v1h-4v-1h-2v1h-1v-1h-2v1h-1v-1h-1v2h-1v-1h-1v-1h-1v1h-1v-1h-1v1h-2v-1h-2v1h-1v-1h-1v1h-1v-1h-1v1h-2v1h-1v-1h-1v-1h-1v1h-2v1h-1v-2h-1v1h-1v-1h-1v1h-5v-1h-5v1h-3v-1h-1v1h-1v-1h-1v1h-2v-1h-1v1h-1v-1h-5v1h-1v-1h-3v1h-1v-1h-1v1h-1v-1h-1v1h-5v-1h-4v1h-2v-1h-1v1h-4v-1h-1v1h-1v-1h-1v1h-4v-1h-1v1h-1v-1h-2v1h-2z"/><path d="M88 507h3v-1h1v1h5v-1h1v1h2v-1h1v1h1v-1h2v1h3v-1h1v1h1v-1h2v1h1v-2h1v2h9v-1h1v1h3v-1h1v1h1v-1h1v1h6v-1h2v1h2v-1h1v1h1v-1h1v1h1v-1h1v1h1v-1h1v1h1v-1h1v1h2v-1h1v1h1v-1h1v1h4v-1h1v1h2v-1h1v1h1v-1h2v1h1v-1h1v1h3v-1h2v1h1v-1h1v1h2v-1h1v1h1v-1h1v1h3v-1h2v1h5v-1h2v1h1v-1h2v1h3v-1h1v1h4v-1h1v1h1v-1h1v1h2v-1h1v1h10v-1h1v1h1v-1h1v1h1v-1h2v1h5v-1h1v1h2v-1h1v1h3v-1h2v1h1v-1h1v1h11v-1h1v1h2v-1h1v1h10v-1h1v1h5v-1h1v1h4v-1h1v1h3v-1h1v1h1v-1h3v1h11v-1h1v1h2v-1h1v1h4v-1h1v1h1v-1h1v1h1v-2h1v2h4v-1h2v1h14v-1h1v1h2v-1h1v1h3v-1h1v-1h1v1h1v1h1v-1h2v1h2v-1h1v1h1v-1h2v1h1v-1h1v1h5v-1h1v1h1v-1h3v1h2v-1h2v1h5v-1h1v1h2v-1h3v1h4v-1h2v1h5v-1h1v1h2v-1h1v1h1v-1h1v1h5v-1h1v1h3v-1h2v1h5v-1h2v1h1v-1h1v1h3v-1h1v1h2v-2h1v1h1v1h3v-1h3v1h3v-1h1v1h5v-1h3v-1h1v2h1v-1h1v1h4v-1h1v1h2v-2h1v2h3v-1h1v1h1v-1h1v1h4v-2h1v1h1v1h1v-1h4v1h1v-2h1v1h1v1h2v-1h1v-1h1v2h2v-1h1v1h1v-1h1v1h2v-1h3v1h7v-1h1v1h9v-1h1v1h1v-1h1v1h4v-2h1v2h1v-1h1v1h4v-1h2v1h4v-1h1v1h4v-1h1v1h9v-1h2v1h2v-1h1v1h1v-1h1v1h2v-1h1v1h5v-1h1v1h2v-2h1v2h5v-1h1v1h5v-1h1v1h2v-1h1v1h3v-1h2v1h2v-1h2v1h2v-1h1v1h3v-1h1v1h4v-1h2v1h1v-1h1v1h3v-2h1v2h2v-1h1v1h1v-1h1v1h2v-1h1v1h5v-1h1v1h2v-1h2v1h2v-1h1v1h5v-1h1v1h4v-1h1v1h2v-1h2v1h2v-1h1v1h3v-1h1v1h1v-1h4v1h1v-1h1v1h1v-1h3v1h5v-1h4v1h5v-1h1v1h1v-1h1v1h2v-2h1v2h1v-1h1v1h15v-1h1v1h4v-1h1v1h1v-1h1v1h1v-1h2v1h2v-1h1v1h8v-1h2v1h6v-1h4v1h1v-1h1v1h2v-1h2v1h2v-1h1v1h4v-1h1v1h2v-1h1v1h2v-1h1v1h2v-1h1v1h3v-1h1v1h2v-1h1v1h2v-1h1v1h1v-1h1v1h1v-1h1v1h1v-1h1v1h1v-1h1v1h6v-1h1v1h1v-1h1v1h5v-1h2v1h1v-1h1v1h2v-2h1v1h1v1h7v-1h1v1h1v-1h1v1h2v-1h1v1h3v-1h2v1h1v-1h1v1h1v-1h1v1h2v-1h4v1h4v-1h1v1h3v-1h1v1h2v-1h1v1h1v-1h1v1h3v-1h1v1h4v-1h1v1h2v-1h1v1h7v-1h2v1h4v-1h1v1h3v-1h1v1h2v-1h1v1h5v-1h2v1h2v-1h2v1h1v-1h2v1h4v-1h1v1h2v-1h2v1h3v-1h1v1h2v-1h4v1h3v-1h2v1h3v-1h1v1h2v-1h1v1h1v-1h3v1h1v-1h1v1h6v-1h1v1h1v-1h1v1h1v-1h2v1h1v-1h1v1h1v-1h1v1h6v-1h1v1h2v-1h1v1h4v-1h2v1h2v-1h1v1h3v-1h1v1h7v-2h1v2h2v-1h1v1h1v-1h1v1h5v-1h1v1h15v-1h1v1h1v-1h1v1h7v-1h1v1h3v-1h1v1h2v-1h1v1h3v-1h1v1h1v-1h2v1h5v-1h2v1h1v-1h1v1h1v-1h1v1h1v-1h3v1h1v-1h1v1h1v-1h1v1h1v-1h1v1h1v-1h1v1h1v-1h2v1h2v-1h1v1h2v-1h1v1h2v-1h1v1h3v-1h1v1h2v-1h1v-1h1v2h5v-1h1v1h1v-1h3v1h7v-1h1v1h1v-1h1v1h5v-1h2v1h1v-1h1v1h6v-1h1v1h1v-1h1v1h5v-1h2v1h4v-1h1v1h4v-2h1v2h1v-1h1v1h4v-1h2v1h1v-1h1v1h2v-1h1v1h1v-1h1v1h3v-1h2v-1h1v2h1v-1h2v1h3v-1h2v1h5v-1h2v1h2v-1h1v1h6v-1h2v1h1v-1h1v1h4v-1h1v1h3v-1h1v1h3v-1h1v1h1v-1h1v1h1v-1h1v1h2v-1h1v1h2v-1h1v1h9v-1h2v1h5v-1h1v1h1v-1h3v1h1v-2h1v2h10v-1h1v1h1v4h-2v-1h-1v1h-1v-1h-1v1h-1v-1h-1v1h-2v-1h-3v1h-1v-1h-1v1h-1v-1h-1v1h-4v-1h-1v1h-1v-1h-1v1h-1v-1h-1v1h-1v-1h-1v1h-1v-1h-1v1h-1v-1h-1v1h-1v-1h-1v1h-1v-1h-1v1h-3v-1h-2v1h-1v-1h-1v1h-1v-1h-1v1h-2v-1h-1v1h-1v-1h-3v1h-2v-1h-1v1h-1v-1h-1v1h-1v-1h-1v1h-1v-1h-1v1h-3v-1h-1v1h-1v-1h-1v1h-3v-1h-1v1h-1v-1h-1v1h-1v-1h-1v1h-1v-1h-2v1h-1v-1h-1v1h-3v-1h-1v1h-1v-1h-1v1h-2v-1h-1v1h-1v-1h-1v1h-2v-1h-1v1h-1v-1h-1v1h-1v-1h-1v1h-3v-1h-1v1h-1v-1h-1v1h-1v-1h-2v1h-3v-1h-1v1h-4v-1h-3v1h-2v1h-1v-1h-2v-1h-2v1h-4v-1h-1v1h-3v-1h-2v1h-1v-1h-1v1h-1v-1h-1v1h-1v-1h-1v1h-1v-1h-1v1h-1v-1h-1v1h-1v-1h-2v1h-4v-1h-1v1h-1v-1h-2v1h-1v-1h-1v1h-2v-1h-3v1h-1v-1h-1v1h-2v-1h-1v1h-1v-1h-1v1h-2v-1h-1v1h-3v-1h-1v1h-1v-1h-1v1h-4v-1h-1v1h-6v-1h-1v1h-2v-1h-1v1h-1v-1h-1v1h-1v-1h-1v1h-1v-1h-1v1h-2v-1h-2v1h-1v-1h-1v1h-1v-1h-2v1h-1v-1h-1v1h-1v-1h-1v2h-1v-1h-2v-1h-1v1h-3v-1h-2v1h-5v-1h-1v1h-2v-1h-1v1h-4v-1h-1v1h-2v-1h-1v2h-1v-1h-4v-1h-1v1h-4v-1h-2v1h-1v-1h-2v1h-1v-1h-1v1h-1v-1h-1v1h-1v-1h-1v1h-2v-1h-2v1h-1v-1h-1v1h-2v-1h-1v1h-3v-1h-1v1h-1v-1h-1v1h-1v-1h-1v1h-1v-1h-1v1h-1v-1h-3v1h-3v-1h-3v1h-3v-1h-1v1h-1v-1h-1v1h-2v-1h-2v1h-1v-1h-1v1h-3v-1h-2v1h-1v-1h-2v1h-3v-1h-1v1h-2v-1h-1v1h-1v-1h-1v1h-1v-1h-1v1h-2v-1h-1v1h-1v-1h-1v1h-1v-1h-3v1h-2v-1h-2v1h-2v-1h-1v1h-2v-1h-1v1h-2v-1h-1v1h-1v-1h-2v1h-1v-1h-2v1h-1v-1h-1v1h-1v-1h-2v1h-1v-1h-1v1h-1v-1h-1v1h-2v-1h-1v1h-1v-1h-1v2h-1v-2h-2v1h-2v1h-1v-1h-1v-1h-1v1h-3v-1h-1v1h-5v-1h-1v2h-1v-1h-1v-1h-2v1h-1v-1h-1v1h-3v-1h-1v1h-1v-1h-1v1h-1v-1h-1v1h-2v-1h-2v1h-4v-1h-1v1h-2v-1h-3v1h-2v-1h-1v1h-1v1h-1v-1h-3v-1h-3v1h-1v-1h-2v1h-2v1h-1v-2h-1v1h-2v-1h-1v1h-2v-1h-1v1h-3v-1h-1v1h-2v-1h-1v1h-1v-1h-2v1h-1v-1h-1v1h-1v-1h-1v1h-1v-1h-2v1h-4v-1h-1v1h-5v-1h-2v1h-2v-1h-1v1h-3v-1h-1v1h-2v-1h-1v1h-1v-1h-1v1h-1v-1h-1v1h-4v-1h-1v1h-1v-1h-2v1h-2v-1h-1v1h-2v-1h-1v1h-2v-1h-1v1h-3v-1h-1v1h-3v-1h-1v1h-2v-1h-1v1h-2v-1h-1v1h-2v-1h-1v1h-1v-1h-1v1h-4v-1h-1v1h-6v1h-1v-1h-1v-1h-1v1h-2v-1h-1v1h-1v-1h-1v1h-1v-1h-2v1h-2v-1h-3v1h-1v-1h-1v1h-1v-1h-1v1h-2v-1h-1v1h-1v-1h-1v1h-3v-1h-1v1h-2v-1h-1v1h-1v-1h-1v1h-1v-1h-1v1h-3v-1h-2v1h-2v-1h-1v1h-1v-1h-1v1h-6v-1h-1v1h-4v-1h-1v1h-1v-1h-2v1h-1v-1h-1v1h-4v-1h-1v1h-2v-1h-1v1h-2v-1h-1v1h-1v-1h-1v1h-3v-1h-1v1h-1v1h-1v-2h-1v1h-1v-1h-1v1h-2v-1h-1v1h-3v-1h-1v1h-1v-1h-1v1h-4v1h-1v-1h-1v-1h-1v1h-1v-1h-1v1h-1v-1h-2v1h-1v-1h-1v1h-1v-1h-1v1h-2v-1h-1v1h-2v-1h-2v1h-1v-1h-1v1h-3v-1h-4v1h-1v-1h-1v1h-3v-1h-1v1h-1v-1h-1v1h-1v-1h-1v1h-4v-1h-3v1h-1v-1h-1v1h-4v-1h-1v1h-5v-1h-1v2h-1v-2h-2v1h-3v-1h-1v1h-1v-1h-1v1h-1v-1h-1v1h-1v-1h-1v1h-1v-1h-1v1h-2v-1h-1v1h-1v-1h-1v1h-1v-1h-1v1h-1v-1h-1v1h-4v-1h-2v1h-1v-1h-1v1h-2v-1h-2v1h-3v-1h-1v1h-6v-1h-1v2h-1v-1h-1v-1h-1v1h-1v-1h-1v1h-3v-1h-1v1h-4v-1h-1v1h-2v1h-1v-1h-1v-1h-1v1h-2v-1h-2v1h-1v-1h-1v1h-2v-1h-1v1h-2v-1h-1v1h-1v-1h-3v1h-2v-1h-1v1h-1v-1h-1v1h-1v-1h-1v1h-2v1h-1v-1h-2v-1h-1v1h-2v-1h-1v1h-2v-1h-1v1h-2v-1h-3v1h-1v-1h-3v1h-2v-1h-1v2h-1v-2h-1v1h-3v-1h-1v1h-2v-1h-1v1h-1v-1h-1v1h-4v-1h-1v1h-1v-1h-4v1h-6v-1h-2v1h-1v-1h-1v1h-1v-1h-1v1h-1v-1h-1v1h-1v-1h-1v1h-1v-1h-1v2h-1v-2h-1v1h-1v-1h-1v1h-1v-1h-2v1h-1v-1h-3v1h-2v-1h-3v1h-1v-1h-6v1h-1v-1h-2v2h-1v-1h-3v-1h-1v1h-1v-1h-1v1h-1v1h-1v-1h-2v-1h-2v1h-1v-1h-2v1h-4v-1h-1v1h-1v-1h-1v1h-1v-1h-1v1h-3v-1h-1v1h-2v-1h-3v1h-2v-1h-1v1h-3v-1h-1v1h-1v-1h-1v1h-1v-1h-4v1h-1v-1h-1v1h-4v1h-1v-2h-1v1h-3v-1h-1v1h-1v-1h-1v1h-1v-1h-1v1h-3v-1h-1v1h-1v-1h-1v1h-1v-1h-1v1h-5v-1h-1v1h-2v-1h-1v1h-1v-1h-4v1h-2v-1h-1v1h-1v-1h-1v1h-1v-1h-2v1h-2v-1h-2v2h-1v-2h-2v1h-1v-1h-2v1h-2v-1h-1v1h-3v-1h-1v1h-3v-1h-1v1h-1v-1h-1v1h-1v1h-1v-2h-1v1h-1v-1h-1v1h-1v-1h-1v1h-3v-1h-1v2h-1v-1h-1v1h-1v-2h-2v1h-1v-1h-1v1h-1v-1h-1v1h-1v-1h-1v1h-1v-1h-1v1h-1v-1h-1v1h-1v-1h-2v1h-3v-1h-1v1h-2v-1h-1v1h-3v-1h-2v1h-2v-1h-1v1h-2v-1h-3v1h-1v-1h-1v1h-1v-1h-2v1h-2v-1h-1v1h-3v-1h-3v1h-1v-1h-4v1h-2v-1h-2v1h-1v-1h-3v1h-4v-1h-1v1h-1v-1h-1v1h-1v-1h-1v1h-10v-1h-2v1h-2v-1h-1v1h-1v-1h-1v1h-1v-1h-2v1h-4v-1h-2v1h-4v-1h-1v1h-1v-1h-1v1h-3v-1h-1v1h-1v-1h-1v1h-1v-1h-1v1h-1v-1h-3v1h-3v-1h-1v1h-1v-1h-1v1h-1v-1h-2v1h-3v-1h-1v1h-2v-1h-2v1h-1v-1h-1v1h-1v-1h-1v1h-2z"/><path d="M88 537h9v1h1v-1h5v1h1v-1h12v1h1v-1h5v1h1v-1h5v1h1v-1h1v1h2v-1h5v1h1v-1h11v1h5v-1h5v1h2v-1h10v1h1v-1h14v1h2v-1h2v1h1v-1h2v1h1v-2h1v1h1v1h2v-1h4v1h1v-1h17v1h1v-1h7v1h3v-1h4v1h2v-1h2v1h4v-1h6v1h1v-1h8v1h1v-1h1v1h2v-1h11v1h1v-1h18v1h1v-1h4v1h1v-1h23v1h1v-1h3v1h2v-1h8v1h1v-1h1v1h4v-1h3v1h1v-1h16v-1h1v1h2v1h1v-1h5v1h3v-1h15v1h1v-1h1v1h1v-1h6v1h1v-1h13v1h1v-1h1v1h2v-1h4v1h1v-1h16v1h1v-1h6v1h3v-1h12v1h2v-1h5v1h2v-1h4v1h1v-1h20v1h1v-1h1v1h1v-1h9v-1h1v1h3v1h1v-1h4v1h2v-1h1v1h1v-1h2v1h1v-1h4v1h1v-1h4v-1h1v1h5v1h1v-1h5v1h1v-1h2v1h1v-1h6v1h1v-1h20v1h2v-1h2v1h1v-1h12v-1h1v1h7v1h1v-1h1v1h1v-1h7v1h1v-1h13v1h1v-1h5v1h1v-1h9v1h2v-1h11v1h1v-1h4v1h3v-1h10v1h1v-1h4v1h1v-1h1v1h1v-1h8v-1h1v1h2v1h1v-1h11v-1h1v1h2v1h1v-1h4v1h2v-1h5v1h1v-1h2v-1h1v1h9v-1h1v1h5v-1h1v2h1v-1h2v1h1v-2h1v1h9v1h1v-1h7v1h1v-1h7v1h1v-1h1v1h2v-1h12v1h1v-1h1v-1h1v1h21v1h1v-1h9v1h2v-1h8v1h1v-1h4v1h3v-1h7v1h1v-1h3v1h2v-1h2v1h1v-1h17v1h1v-1h4v1h2v-1h34v1h1v-1h5v1h1v-1h14v1h2v-1h4v1h1v-1h4v1h1v-1h12v1h1v-1h3v1h1v-1h12v1h1v-1h12v1h1v-1h5v1h1v-1h8v1h2v-1h16v1h1v-1h9v1h1v-1h2v-1h1v1h14v-1h1v1h1v-1h1v1h5v1h1v-1h5v-1h1v1h16v1h1v-1h14v1h1v-1h2v1h2v-1h1v1h2v-1h6v1h1v-1h6v1h2v-1h4v1h1v-1h7v-1h1v1h4v1h1v-1h7v1h1v-1h1v1h2v-1h4v1h2v-1h10v-1h1v1h5v1h2v-1h13v-1h1v1h13v1h1v-1h8v1h2v-1h6v1h1v-1h4v4h-5v1h-1v-1h-4v2h-1v-2h-3v1h-1v-1h-8v1h-1v-1h-1v1h-1v-1h-7v1h-1v-1h-3v1h-1v-1h-5v2h-1v-2h-1v1h-2v-1h-5v1h-1v-1h-4v1h-2v-1h-2v1h-1v-1h-3v1h-1v-1h-2v1h-1v-1h-2v1h-1v-1h-3v1h-1v-1h-8v1h-1v-1h-1v1h-1v-1h-7v1h-1v-1h-3v1h-4v-1h-1v1h-1v-1h-4v1h-1v-1h-2v1h-1v-1h-2v1h-1v-1h-1v1h-1v-1h-1v1h-1v-1h-2v1h-2v-1h-1v1h-2v-1h-3v1h-1v-1h-12v1h-1v-1h-3v1h-1v-1h-6v1h-1v-1h-9v1h-1v-1h-3v1h-1v-1h-2v1h-1v-1h-3v1h-1v-1h-6v1h-1v-1h-6v2h-1v-2h-5v1h-1v-1h-1v1h-3v1h-1v-2h-4v1h-1v-1h-3v1h-2v-1h-6v1h-1v-1h-3v1h-1v-1h-2v1h-1v-1h-2v1h-1v-1h-5v1h-1v-1h-1v1h-1v-1h-1v1h-2v-1h-4v1h-2v-1h-2v1h-1v-1h-2v1h-1v-1h-3v1h-2v-1h-7v1h-1v-1h-1v1h-2v-1h-2v1h-3v-1h-8v1h-2v-1h-1v1h-1v-1h-3v1h-2v-1h-1v1h-1v-1h-18v1h-1v-1h-3v1h-1v-1h-4v1h-1v1h-1v-2h-9v1h-2v-1h-5v1h-1v-1h-1v1h-1v-1h-2v1h-1v-1h-11v2h-1v-2h-1v1h-1v-1h-1v1h-2v-1h-5v1h-1v-1h-6v1h-1v-1h-1v1h-1v-1h-4v1h-1v-1h-4v1h-1v-1h-1v1h-2v-1h-2v1h-1v-1h-1v1h-2v-1h-4v1h-1v-1h-5v1h-1v-1h-3v1h-1v-1h-3v1h-1v-1h-6v1h-1v-1h-4v1h-1v-1h-4v1h-1v-1h-1v1h-1v-1h-10v1h-1v-1h-4v2h-1v-2h-3v1h-2v-1h-11v1h-1v-1h-5v1h-1v-1h-5v1h-3v-1h-2v1h-1v-1h-1v1h-2v-1h-5v1h-2v-1h-1v1h-1v-1h-8v1h-1v-1h-1v1h-2v-1h-2v1h-1v-1h-6v1h-1v-1h-1v1h-1v-1h-1v1h-3v1h-1v-2h-3v1h-1v-1h-1v1h-1v-1h-3v1h-1v-1h-1v1h-1v-1h-1v1h-1v-1h-11v1h-2v-1h-1v1h-1v-1h-2v1h-1v-1h-4v1h-1v-1h-8v1h-1v-1h-4v2h-1v-2h-3v2h-1v-1h-1v-1h-1v1h-2v-1h-4v1h-1v-1h-4v1h-1v-1h-1v1h-1v-1h-1v1h-1v-1h-1v1h-1v-1h-3v1h-1v-1h-2v1h-1v-1h-7v1h-1v-1h-3v1h-1v-1h-1v2h-1v-2h-1v1h-1v-1h-15v1h-1v-1h-1v1h-1v-1h-4v2h-1v-2h-6v1h-5v-1h-2v1h-2v-1h-2v1h-1v-1h-3v1h-2v-1h-13v1h-1v-1h-2v1h-1v-1h-1v1h-1v-1h-1v1h-4v-1h-5v1h-1v-1h-2v1h-2v-1h-9v1h-1v-1h-2v1h-1v-1h-2v1h-3v-1h-1v1h-1v-1h-3v1h-1v-1h-7v1h-1v-1h-2v1h-2v-1h-1v1h-1v-1h-1v1h-1v-1h-4v1h-1v-1h-6v1h-1v-1h-6v1h-1v-1h-4v1h-2v-1h-3v1h-1v1h-1v-1h-2v-1h-3v1h-1v-1h-2v1h-1v-1h-4v1h-1v-1h-9v1h-2v-1h-1v1h-2v-1h-9v1h-1v-1h-2v1h-1v-1h-1v1h-2v-1h-1v1h-3v-1h-5v1h-1v-1h-1v1h-2v-1h-5v1h-1v-1h-2v1h-1v-1h-1v1h-1v-1h-4v1h-1v-1h-1v1h-2v-1h-2v1h-1v-1h-2v1h-1v-1h-1v1h-1v-1h-12v1h-3v-1h-7v1h-1v-1h-1v2h-1v-2h-3v2h-1v-2h-14v1h-1v-1h-5v1h-1v-1h-2v1h-2v-1h-2v1h-3v-1h-1v1h-2v-1h-1v1h-1v-1h-1v1h-1v-1h-2v1h-2v-1h-1v1h-1v-1h-13v2h-1v-2h-3v1h-1v-1h-4v1h-1v-1h-7v1h-2v-1h-3v1h-1v-1h-10v1h-2v-1h-4v2h-1v-2h-6v1h-2v-1h-3v1h-1v-1h-1v1h-1v-1h-12v1h-1v-1h-2v1h-1v-1h-9v1h-2v-1h-2v1h-1v-1h-1v1h-1v-1h-1v1h-2v-1h-10v1h-1v-1h-7v1h-1v-1h-2v1h-1v-1h-3v1h-1v-1h-2v1h-2v-1h-1v1h-1v-1h-6v1h-1v-1h-2v1h-1v-1h-1v1h-1v-1h-2v1h-1v-1h-1v1h-1v-1h-5v1h-1v-1h-4v1h-1v-1h-6v1h-1v-1h-3v1h-1v-1h-4v1h-3v-1h-5v1h-1v-1h-10v1h-2v-1h-2z"/><path d="M88 567h2v1h2v-1h1v1h1v-1h2v1h2v-1h1v-1h1v1h1v1h3v-1h1v1h2v-1h2v1h1v-1h1v1h1v-1h1v1h1v-1h1v1h1v-1h1v1h2v-1h2v1h1v-1h1v1h1v-1h2v1h1v-2h1v2h1v-1h1v1h2v-1h1v1h1v-2h1v2h1v-1h3v1h1v-1h1v1h1v-1h1v1h1v-1h1v1h1v-1h1v1h2v-1h1v1h2v-1h1v1h1v-1h1v-1h1v2h1v-1h1v1h1v-1h1v1h4v-1h1v1h1v-1h1v1h2v-1h1v1h1v-1h1v-1h1v1h1v1h2v-1h1v1h1v-1h2v1h1v-1h1v1h1v-1h1v1h1v-1h1v1h1v-1h1v1h1v-1h1v1h1v-1h1v1h1v-1h1v1h2v-1h1v1h1v-1h1v1h1v-1h2v1h1v-1h1v1h1v-1h1v1h3v-1h1v1h1v-1h1v1h3v-1h1v1h1v-1h1v1h5v-1h1v1h1v-1h1v1h1v-1h1v1h1v-1h1v1h1v-1h1v1h1v-1h2v1h2v-1h1v1h1v-1h1v1h1v-1h2v1h1v-1h2v1h1v-1h3v1h1v-1h2v1h1v-1h1v1h1v-1h1v-1h1v2h1v-1h1v1h1v-1h4v1h1v-1h1v1h1v-1h2v1h5v-1h1v1h1v-1h1v1h1v-1h3v1h1v-1h1v1h1v-1h1v1h1v-1h1v1h1v-1h1v1h1v-1h1v1h1v-1h1v1h1v-1h1v1h1v-1h1v-1h1v1h1v1h1v-1h2v1h1v-2h1v2h1v-1h1v1h1v-1h1v1h2v-1h4v1h2v-1h1v1h1v-1h2v1h1v-1h1v1h1v-1h2v1h1v-1h2v1h1v-1h1v1h2v-1h1v1h1v-1h2v1h1v-1h1v1h1v-1h1v1h2v-1h1v1h1v-1h1v1h1v-1h1v1h1v-1h2v1h2v-2h1v2h2v-1h1v1h1v-1h2v1h1v-1h1v1h2v-1h1v1h1v-1h1v1h1v-1h1v1h1v-1h1v1h1v-1h1v1h2v-1h1v1h1v-1h1v1h2v-1h2v1h1v-1h1v1h1v-1h1v1h1v-1h1v1h1v-1h1v1h1v-1h1v1h1v-1h2v1h1v-1h2v1h1v-1h1v1h1v-1h1v1h2v-1h1v1h1v-1h2v-1h1v1h1v1h1v-1h1v-1h1v1h1v1h1v-1h1v1h1v-1h2v1h3v-1h1v1h2v-1h1v1h1v-1h1v1h1v-1h1v1h1v-1h1v1h1v-1h1v1h3v-1h2v1h1v-1h1v1h1v-1h1v1h1v-1h1v1h1v-1h1v1h1v-1h1v1h2v-1h1v1h1v-1h1v1h1v-1h1v1h1v-1h1v1h2v-1h2v1h1v-1h1v1h1v-1h1v1h2v-1h1v1h2v-1h2v1h1v-1h1v-1h1v1h1v1h1v-1h2v1h1v-1h2v1h1v-1h1v1h2v-1h3v1h1v-1h1v1h2v-2h1v2h1v-1h1v1h1v-1h2v1h1v-1h3v1h1v-1h1v1h1v-1h1v1h1v-1h1v1h1v-1h1v1h1v-1h1v1h1v-1h1v1h2v-1h1v1h3v-1h3v1h2v-1h1v1h1v-1h1v1h1v-1h1v1h2v-1h1v1h1v-1h1v1h1v-1h1v1h1v-1h1v1h1v-1h1v1h1v-1h1v1h1v-1h1v1h1v-1h1v1h2v-1h1v1h1v-1h1v1h2v-1h1v1h2v-1h1v1h1v-1h1v1h1v-1h2v1h1v-1h1v1h2v-1h1v1h2v-1h2v1h1v-1h5v1h1v-1h2v1h1v-1h1v1h1v-1h1v1h1v-1h2v1h1v-1h1v1h1v-2h1v1h1v1h1v-1h3v1h1v-1h1v1h1v-1h1v1h1v-1h1v1h1v-1h1v1h1v-1h1v1h1v-1h1v1h1v-1h1v1h1v-1h2v1h1v-1h1v1h1v-1h2v1h1v-1h2v1h1v-1h1v1h1v-1h1v1h1v-1h1v1h1v-1h1v1h2v-1h1v1h1v-1h2v1h2v-1h1v1h2v-1h1v1h2v-1h1v1h1v-1h1v1h1v-2h1v2h1v-1h1v1h1v-1h1v1h1v-1h1v1h1v-1h2v1h2v-1h1v1h1v-1h1v1h3v-1h1v1h1v-1h1v1h1v-1h1v1h2v-1h2v1h2v-1h1v1h2v-1h1v1h2v-1h1v1h3v-1h1v1h1v-1h1v1h3v-1h1v1h1v-2h1v1h1v1h1v-1h1v1h2v-1h1v1h1v-1h1v1h1v-1h1v1h1v-1h3v1h1v-1h1v1h2v-2h1v2h1v-1h2v1h1v-1h1v1h1v-1h2v1h1v-1h1v1h3v-1h1v1h1v-1h1v1h2v-1h1v1h4v-1h1v1h1v-1h1v1h2v-1h3v1h1v-1h2v1h1v-2h1v2h1v-1h1v-1h1v1h2v1h2v-1h1v1h3v-1h1v1h1v-1h1v1h1v-2h1v1h1v1h1v-1h3v1h1v-1h2v1h1v-1h1v1h1v-1h1v1h2v-1h1v1h1v-1h1v-1h1v1h2v1h2v-1h1v1h1v-1h1v1h1v-1h1v1h1v-1h1v1h1v-1h3v1h1v-1h3v1h1v-1h1v1h2v-1h2v1h1v-1h1v1h1v-1h1v1h1v-1h1v1h2v-1h2v1h1v-1h1v1h2v-1h1v1h2v-1h1v1h1v-1h1v1h3v-1h1v1h1v-1h1v1h2v-1h1v1h1v-1h1v1h1v-1h1v1h1v-1h1v1h1v-1h1v1h1v-2h1v2h1v-1h1v1h2v-1h5v1h1v-1h2v-1h1v1h2v1h1v-1h1v1h1v-1h1v-1h1v1h2v1h2v-1h1v1h1v-1h1v1h1v-1h1v1h1v-1h1v1h2v-1h1v1h1v-1h2v1h1v-1h1v1h1v-1h1v1h2v-1h1v1h1v-1h1v1h1v-1h1v-1h1v1h1v1h2v-1h1v1h1v-1h2v1h1v-1h1v1h1v-1h1v1h1v-1h1v1h1v-1h2v1h1v-1h1v1h1v-1h1v1h1v-1h2v-1h1v1h1v1h1v-1h1v1h1v-1h1v1h2v-1h1v1h2v-1h1v1h1v-1h2v1h1v-2h1v2h1v-1h1v1h1v-1h1v1h1v-1h1v1h1v-1h1v1h1v-1h1v1h1v-1h1v1h1v-1h1v1h1v-1h1v1h4v-1h1v1h1v-1h1v1h1v-1h1v1h1v-1h1v1h1v-1h1v1h1v-1h1v1h2v-1h2v1h1v-1h1v1h1v-1h1v1h1v-1h1v1h1v-1h1v1h1v-1h2v1h2v-1h1v1h1v-1h1v1h3v-1h2v1h1v-1h2v1h1v-1h1v1h1v-1h1v1h1v-1h1v1h1v-1h1v1h1v-1h1v1h2v-1h1v1h1v-1h1v1h1v-1h1v-1h1v2h2v-1h1v1h1v-2h1v2h1v-1h2v1h1v-1h1v1h1v-1h2v1h2v-1h1v1h2v-1h1v1h1v-1h3v1h1v-1h1v1h1v-1h1v1h1v-1h1v1h1v-1h1v1h1v-1h1v1h1v-1h2v1h1v-1h1v1h1v-1h1v1h1v-1h1v1h1v-1h1v1h2v-1h1v1h2v-1h4v1h1v-1h1v1h1v-1h1v1h1v-1h1v1h1v-1h1v1h2v-1h1v1h1v-1h2v1h1v-1h1v1h1v-1h4v1h1v-1h1v1h1v-1h1v1h1v-1h1v1h1v-1h1v1h1v-1h1v1h1v-1h1v1h1v-1h2v1h2v-1h1v1h1v-1h1v1h2v-1h1v1h2v-1h1v1h1v-1h1v1h1v-1h1v1h1v-1h2v1h1v-1h1v1h1v-1h1v1h1v-1h1v1h1v-1h1v1h1v-1h1v1h1v-1h2v1h2v-1h2v1h2v-1h2v1h1v-1h1v1h1v-1h3v1h1v-1h3v1h1v-1h1v1h2v-1h2v1h1v-1h1v1h1v-1h1v1h2v-1h1v1h1v-1h1v1h1v-1h1v1h1v-1h1v-1h1v2h2v-1h1v1h1v-1h3v1h1v-1h1v1h1v-1h1v1h1v-1h1v1h1v-1h1v1h1v-1h1v1h1v-1h1v1h1v-1h1v1h2v-1h1v1h1v-1h2v1h3v-1h1v1h3v-1h1v1h1v-1h1v-1h1v6h-1v-1h-1v1h-1v1h-1v-2h-2v1h-1v-1h-2v1h-1v-1h-3v1h-1v-1h-1v1h-1v-1h-1v1h-2v-1h-5v1h-1v-1h-2v1h-1v-1h-1v1h-1v-1h-1v1h-2v-1h-2v1h-2v-1h-4v1h-1v-1h-1v1h-1v-1h-1v1h-1v-1h-1v1h-1v-1h-1v1h-1v-1h-1v1h-2v1h-1v-2h-1v1h-2v-1h-2v1h-1v-1h-1v1h-1v-1h-1v1h-1v1h-1v-1h-1v-1h-1v2h-1v-1h-1v-1h-3v1h-1v-1h-2v1h-3v-1h-5v1h-1v-1h-2v1h-1v-1h-3v1h-2v1h-1v-1h-1v-1h-2v1h-2v-1h-2v1h-1v-1h-1v1h-2v-1h-1v1h-1v-1h-2v1h-1v-1h-2v1h-1v-1h-1v1h-2v-1h-1v1h-2v-1h-5v1h-5v-1h-2v1h-1v-1h-1v1h-1v-1h-2v1h-1v-1h-2v1h-2v-1h-1v2h-1v-2h-2v1h-2v-1h-2v1h-1v-1h-1v1h-1v-1h-1v1h-1v-1h-4v1h-1v-1h-2v1h-1v-1h-1v1h-1v-1h-2v1h-1v-1h-1v1h-1v-1h-1v1h-1v-1h-1v1h-2v-1h-1v1h-2v-1h-1v1h-1v-1h-2v1h-2v-1h-1v1h-1v-1h-2v1h-1v-1h-1v1h-2v-1h-5v1h-1v-1h-2v1h-1v-1h-3v1h-1v-1h-4v1h-1v-1h-2v1h-1v-1h-1v1h-1v-1h-1v1h-1v-1h-4v1h-1v-1h-2v1h-1v-1h-2v1h-2v-1h-1v1h-1v-1h-1v1h-1v-1h-1v1h-1v-1h-2v1h-1v-1h-2v1h-2v-1h-3v1h-1v-1h-6v1h-2v-1h-1v1h-1v-1h-3v2h-1v-1h-1v-1h-1v1h-2v-1h-2v1h-1v-1h-3v1h-2v-1h-1v1h-1v-1h-1v1h-1v-1h-1v1h-3v-1h-1v1h-1v-1h-1v1h-1v-1h-1v1h-3v-1h-3v1h-1v-1h-1v1h-1v-1h-2v1h-1v-1h-4v1h-1v-1h-5v1h-1v-1h-1v1h-1v-1h-2v1h-1v-1h-1v1h-1v-1h-1v1h-2v-1h-1v1h-1v-1h-2v1h-1v-1h-1v1h-1v-1h-3v2h-1v-2h-1v1h-1v-1h-2v1h-1v-1h-3v1h-1v-1h-1v1h-1v-1h-1v1h-2v-1h-1v1h-1v-1h-1v1h-2v-1h-1v1h-1v-1h-3v1h-1v-1h-4v1h-1v-1h-2v1h-1v-1h-1v1h-2v-1h-2v1h-1v1h-1v-1h-1v1h-1v-1h-1v-1h-1v1h-1v-1h-1v1h-2v-1h-1v1h-2v1h-1v-1h-1v-1h-2v1h-2v-1h-1v1h-1v-1h-1v1h-1v-1h-2v1h-1v-1h-5v1h-4v-1h-1v1h-1v-1h-1v1h-1v-1h-1v1h-2v-1h-6v1h-1v-1h-1v1h-1v1h-1v-2h-2v1h-1v-1h-2v1h-1v-1h-1v1h-1v-1h-1v1h-2v-1h-2v1h-2v-1h-1v1h-1v-1h-8v1h-2v-1h-1v1h-1v-1h-1v1h-1v-1h-1v1h-1v-1h-1v1h-1v-1h-1v1h-2v-1h-2v1h-1v-1h-2v1h-2v-1h-4v1h-1v-1h-4v1h-1v1h-1v-1h-1v-1h-1v1h-2v-1h-1v1h-2v-1h-1v1h-1v-1h-2v2h-1v-1h-1v-1h-1v1h-1v-1h-2v1h-1v-1h-3v1h-1v-1h-1v1h-1v-1h-1v1h-1v-1h-2v1h-1v-1h-2v1h-3v-1h-1v2h-1v-2h-1v2h-1v-1h-1v-1h-1v1h-3v-1h-2v1h-1v-1h-2v1h-1v-1h-3v1h-1v-1h-2v1h-1v-1h-2v1h-1v-1h-1v1h-1v-1h-2v1h-1v-1h-1v1h-2v-1h-2v1h-1v-1h-1v1h-2v1h-1v-1h-1v-1h-1v1h-1v-1h-2v1h-2v-1h-2v1h-1v-1h-2v1h-1v-1h-1v1h-1v-1h-2v1h-1v-1h-1v1h-1v-1h-1v1h-1v-1h-4v1h-1v-1h-1v1h-1v-1h-2v1h-1v-1h-1v1h-1v-1h-5v1h-2v-1h-1v1h-4v-1h-1v1h-1v-1h-1v1h-1v-1h-7v1h-1v-1h-4v1h-1v-1h-1v1h-2v-1h-2v1h-1v-1h-2v1h-1v-1h-2v1h-2v-1h-1v1h-3v-1h-3v1h-2v-1h-1v1h-2v-1h-2v1h-1v-1h-3v1h-1v-1h-2v2h-1v-2h-1v1h-1v-1h-4v1h-1v-1h-1v1h-1v-1h-1v1h-1v-1h-2v1h-2v-1h-1v1h-2v-1h-1v1h-1v-1h-1v1h-1v-1h-1v1h-1v-1h-3v1h-1v-1h-4v1h-1v-1h-1v1h-4v-1h-2v1h-1v-1h-1v1h-1v-1h-1v1h-1v-1h-1v1h-1v-1h-1v1h-1v-1h-1v1h-1v-1h-2v1h-1v-1h-6v1h-3v-1h-1v1h-1v-1h-2v1h-1v-1h-1v1h-3v-1h-1v1h-1v-1h-1v2h-1v-2h-1v1h-2v-1h-1v1h-1v-1h-1v1h-2v-1h-1v1h-1v-1h-1v1h-2v-1h-2v1h-2v-1h-1v1h-1v-1h-1v1h-2v-1h-2v1h-1v-1h-4v1h-1v-1h-1v1h-1v-1h-1v2h-1v-2h-3v1h-3v-1h-2v2h-1v-2h-4v1h-1v-1h-1v1h-1v-1h-1v1h-1v-1h-2v1h-1v-1h-2v1h-2v-1h-1v1h-1v-1h-2v1h-1v-1h-1v1h-1v-1h-2v1h-1v-1h-4v1h-1v-1h-1v1h-1v-1h-2v1h-2v-1h-1v1h-1v-1h-1v1h-1v-1h-2v1h-3v-1h-1v1h-1v-1h-2v1h-1v-1h-2v1h-2v-1h-2v1h-1v-1h-2v1h-1v-1h-2v1h-1v-1h-3v1h-1v-1h-4v1h-1v-1h-3v1h-1v-1h-1v1h-1v1h-1v-2h-2v1h-1v-1h-1v1h-1v-1h-1v1h-1v-1h-1v1h-1v-1h-1v1h-1v-1h-2v1h-1v-1h-5v1h-1v1h-1v-1h-1v-1h-3v1h-1v-1h-1v1h-1v-1h-1v1h-2v-1h-2v1h-1v-1h-1v1h-1v-1h-1v1h-1v-1h-1v1h-2v-1h-6v1h-3v-1h-1v1h-1v-1h-1v1h-1v-1h-1v1h-1v-1h-1v1h-1v-1h-1v1h-1v-1h-1v1h-2v-1h-3v1h-1v-1h-1v1h-1v-1h-1v1h-1v-1h-5v1h-2v1h-1v-2h-1v1h-1v-1h-1v1h-3v-1h-2v1h-1v-1h-1v1h-1v-1h-1v1h-1v-1h-1v1h-1v-1h-2v1h-1v-1h-2v1h-1v-1h-1v2h-1v-1h-2v-1h-1v1h-1v-1h-1v1h-2v-1h-2v1h-1v-1h-3v1h-1v-1h-1v1h-2v-1h-3v1h-1v-1h-2v1h-1v-1h-3v1h-2v-1h-2v1h-2v-1h-1v1h-1v-1h-7v1h-1v-1h-3v1h-5v-1h-2v1h-1v-1h-4v1h-1v-1h-2v1h-1v1h-1v-1h-1v-1h-2v1h-1v1h-1v-1h-2v-1h-4v1h-1v-1h-1v1h-1v-1h-1v1h-1v-1h-3v1h-1v-1h-1v1h-1v-1h-1v1h-1v-1h-5v1h-1v-1h-1v1h-1v-1h-2v1h-2v-1h-8v1h-1v-1h-1v1h-2v-1h-4v1h-3v-1h-3v1h-1v-1h-2v1h-1v-1h-1v1h-2v-1h-1v1h-1v-1h-2v1h-2v-1h-2v1h-1v-1h-1v1h-1v-1h-2v2h-1v-1h-1v-1h-1v1h-1v-1h-3v1h-1v-1h-4v1h-1v-1h-1v1h-2v-1h-1v1h-1v-1h-1v1h-1v-1h-1v2h-1v-2h-5v1h-1v-1h-2v1h-1v-1h-3v1h-2v-1h-2z"/><path d="M88 597h1v1h3v-1h1v1h1v-1h1v1h1v-1h1v1h4v-1h1v1h6v-1h1v1h1v-1h1v1h1v-1h1v1h1v-1h2v1h3v-1h1v1h5v-1h1v1h1v-1h1v1h8v-1h1v1h2v-1h1v1h16v-1h1v1h1v-1h1v1h4v-1h1v1h2v-1h1v1h10v-2h1v2h8v-1h3v1h1v-1h1v1h2v-1h1v1h2v-1h1v1h1v-1h1v1h2v-1h1v1h3v-1h1v1h1v-1h1v1h1v-1h1v1h5v-1h1v1h3v-1h1v1h4v-1h1v1h5v-1h4v1h2v-1h1v1h5v-1h1v1h2v-1h1v1h6v-1h1v1h1v-1h2v1h2v-2h2v2h2v-1h3v1h3v-1h1v-1h1v2h1v-1h1v1h3v-1h1v1h1v-2h1v1h2v1h1v-1h2v1h3v-1h1v1h1v-1h2v1h1v-2h1v2h3v-1h2v1h2v-1h1v1h4v-1h1v1h1v-1h1v1h1v-1h1v1h13v-1h1v1h5v-1h1v1h4v-1h1v1h2v-2h1v2h1v-1h1v1h1v-1h1v1h4v-1h2v1h2v-1h1v1h1v-1h1v1h1v-1h1v1h7v-1h2v1h6v-1h1v1h4v-1h1v1h1v-1h1v1h1v-1h1v1h1v-1h1v1h1v-1h2v1h3v-1h2v1h1v-1h1v1h2v-1h1v1h1v-1h1v1h6v-1h1v1h1v-1h1v1h1v-1h1v1h2v-1h1v1h11v-1h2v1h3v-1h1v1h1v-1h1v1h3v-1h2v1h1v-1h1v1h2v-1h1v1h1v-1h1v1h4v-1h1v1h2v-2h1v2h1v-1h1v1h2v-1h1v1h1v-1h1v1h1v-1h1v1h3v-1h2v1h2v-1h2v1h1v-1h1v1h1v-1h1v1h6v-1h1v1h6v-1h1v1h1v-1h1v1h1v-1h1v1h2v-1h1v1h4v-1h1v1h2v-1h1v1h1v-1h1v1h10v-1h2v1h1v-1h2v1h4v-1h1v1h2v-1h1v1h1v-1h1v1h10v-1h1v1h1v-1h1v1h3v-1h1v1h1v-1h2v1h5v-1h1v1h1v-1h1v1h2v-1h1v1h1v-1h1v1h1v-1h1v1h3v-1h1v1h4v-1h1v1h2v-1h2v1h3v-1h1v1h2v-1h1v1h3v-1h1v1h4v-1h1v1h1v-2h1v2h1v-1h2v1h3v-1h1v1h2v-1h1v1h1v-1h1v1h2v-1h1v1h1v-1h2v1h3v-1h2v1h1v-1h1v1h3v-1h1v1h2v-1h1v1h2v-1h2v1h2v-1h1v1h2v-1h1v1h1v-2h1v2h1v-1h2v1h4v-1h1v1h1v-1h1v1h4v-1h1v1h4v-1h1v1h1v-1h1v1h2v-1h1v1h1v-1h2v-1h1v1h1v1h1v-2h1v2h1v-1h2v1h4v-1h1v1h3v-2h1v2h2v-1h2v1h2v-1h1v1h7v-1h1v1h3v-1h1v1h1v-1h2v1h10v-1h1v1h1v-1h1v1h1v-1h1v1h1v-1h2v1h2v-1h1v1h6v-1h2v1h1v-1h1v1h6v-1h1v1h4v-1h1v1h1v-1h2v1h5v-1h1v1h9v-1h1v1h1v-1h2v1h11v-1h1v1h4v-1h2v1h2v-1h1v1h1v-1h1v1h1v-1h1v1h2v-1h1v-1h1v2h3v-1h1v1h11v-1h1v1h1v-1h3v1h1v-1h1v1h1v-1h2v1h6v-1h1v1h1v-1h1v1h5v-1h1v1h1v-1h2v1h2v-1h1v1h1v-1h1v1h4v-1h2v1h1v-1h1v1h5v-1h1v1h1v-1h1v1h4v-1h1v1h3v-1h1v1h1v-1h1v1h1v-1h2v1h2v-1h1v-1h1v1h1v1h1v-1h1v1h7v-1h1v1h10v-1h1v1h1v-1h3v1h2v-1h1v1h2v-1h1v1h1v-1h3v1h6v-1h1v1h2v-1h1v1h2v-1h1v1h1v-1h1v1h1v-1h1v1h1v-1h1v1h1v-1h1v1h4v-1h2v-1h1v2h2v-1h1v1h2v-1h1v1h2v-1h1v1h5v-1h1v1h2v-1h1v1h6v-2h1v1h1v1h1v-1h2v1h1v-1h1v1h6v-1h2v1h7v-1h1v1h1v-1h1v1h2v-1h2v1h6v-1h1v1h1v-2h1v2h6v-1h2v1h2v-1h1v1h3v-1h1v1h5v-1h1v1h1v-1h2v1h1v-1h1v1h5v-1h1v1h1v-1h1v1h8v-1h1v1h2v-1h3v1h2v-1h1v1h1v-1h1v1h1v-1h1v1h2v-1h1v1h3v-1h1v1h3v-1h3v1h1v-1h1v1h2v-1h4v1h3v-1h1v1h1v-1h1v1h1v-1h1v1h1v-1h1v1h1v-1h3v1h5v-1h2v1h1v-1h1v1h2v-2h1v1h1v1h1v-1h1v1h5v-1h1v1h1v-1h1v-1h1v2h3v-1h1v1h3v-1h3v1h7v-1h1v1h1v-1h1v1h4v-1h1v1h2v-2h1v1h1v1h5v-1h1v1h8v-1h1v1h9v-2h1v2h2v-1h2v1h2v-1h2v1h1v-1h1v1h2v-2h1v2h10v-1h1v1h3v-1h1v1h3v-1h1v1h1v-1h1v1h3v-2h1v2h2v4h-5v-1h-2v1h-3v-1h-1v1h-4v-1h-1v1h-2v-1h-3v1h-1v-1h-3v1h-2v-1h-1v1h-3v-1h-1v1h-6v-1h-1v1h-2v-1h-2v1h-2v-1h-1v1h-3v1h-1v-1h-2v-1h-1v1h-2v-1h-3v1h-4v-1h-1v1h-2v1h-1v-1h-3v-1h-1v1h-3v-1h-1v1h-2v-1h-1v1h-6v-1h-2v1h-2v-1h-2v1h-5v-1h-2v1h-1v-1h-1v1h-3v-1h-2v1h-4v-1h-1v1h-6v-1h-1v1h-6v-1h-1v1h-1v-1h-1v1h-4v1h-1v-2h-1v1h-1v-1h-1v1h-3v-1h-1v1h-6v-1h-1v1h-2v-1h-1v1h-1v-1h-1v1h-2v-1h-1v1h-2v-1h-1v1h-1v-1h-1v1h-1v-1h-1v1h-1v-1h-1v1h-3v-1h-1v1h-8v-1h-2v1h-5v-1h-1v1h-3v-1h-1v1h-1v-1h-1v2h-1v-2h-1v1h-2v-1h-1v1h-1v-1h-1v1h-1v1h-1v-2h-1v1h-3v-1h-1v1h-1v-1h-1v1h-6v-1h-1v1h-4v-1h-1v1h-1v-1h-1v1h-1v-1h-2v1h-1v-1h-1v1h-3v-1h-2v1h-5v-1h-1v1h-5v-1h-1v1h-1v-1h-1v1h-3v-1h-2v1h-3v-1h-2v1h-6v-1h-1v1h-4v-1h-1v1h-2v-1h-2v1h-1v1h-1v-2h-1v1h-4v-1h-1v1h-2v-1h-1v1h-3v-1h-1v1h-2v-1h-1v1h-25v1h-1v-1h-2v-1h-1v1h-1v-1h-1v1h-3v-1h-1v1h-2v-1h-3v1h-2v-1h-1v1h-1v-1h-1v1h-3v-1h-1v1h-1v-1h-2v1h-9v-1h-2v1h-1v-1h-2v1h-5v-1h-2v1h-3v-1h-1v1h-3v-1h-1v1h-3v-1h-2v1h-2v-1h-1v1h-2v-1h-1v1h-4v-1h-1v1h-6v-1h-1v1h-1v-1h-1v1h-2v-1h-1v1h-1v-1h-1v1h-2v-1h-1v1h-1v-1h-1v1h-3v-1h-3v1h-1v-1h-2v1h-2v-1h-3v2h-1v-1h-8v-1h-1v1h-1v-1h-2v1h-4v-1h-1v1h-9v-1h-1v1h-2v1h-1v-2h-1v1h-3v-1h-1v1h-3v1h-1v-1h-4v-1h-1v1h-1v-1h-1v1h-2v-1h-3v1h-5v1h-1v-1h-11v-1h-1v1h-4v-1h-1v1h-4v1h-1v-2h-1v1h-1v1h-1v-1h-2v-1h-1v1h-6v-1h-1v1h-1v-1h-1v1h-2v-1h-1v1h-3v-1h-1v1h-4v-1h-2v1h-2v1h-1v-1h-2v-1h-1v1h-5v1h-1v-1h-2v-1h-1v1h-3v-1h-2v1h-4v-1h-1v1h-4v-1h-2v1h-5v-1h-1v1h-4v-1h-1v1h-2v-1h-1v1h-3v-1h-4v1h-1v-1h-1v1h-2v-1h-1v1h-1v-1h-1v1h-1v1h-1v-2h-1v1h-1v-1h-2v1h-4v-1h-1v1h-3v-1h-2v1h-6v-1h-1v1h-4v-1h-1v1h-1v-1h-1v1h-3v-1h-1v1h-1v-1h-2v1h-4v-1h-2v1h-5v-1h-1v1h-6v-1h-1v1h-5v-1h-1v1h-4v-1h-1v1h-4v1h-1v-2h-1v1h-4v-1h-1v2h-1v-1h-2v-1h-1v1h-13v-1h-1v1h-2v-1h-3v1h-2v-1h-1v1h-3v-1h-1v1h-3v-1h-1v1h-1v-1h-1v1h-1v-1h-1v1h-1v-1h-1v1h-2v-1h-2v1h-2v-1h-1v2h-1v-2h-3v1h-3v-1h-2v1h-1v-1h-1v1h-4v-1h-1v1h-8v-1h-2v2h-1v-2h-1v1h-5v-1h-1v1h-6v-1h-1v1h-1v-1h-1v1h-5v-1h-1v1h-4v-1h-2v1h-1v-1h-1v2h-1v-1h-4v-1h-2v1h-1v-1h-1v1h-1v1h-1v-1h-1v1h-1v-1h-1v-1h-2v1h-1v-1h-1v1h-3v-1h-2v1h-8v1h-1v-2h-1v1h-2v-1h-1v2h-1v-1h-1v-1h-1v1h-1v-1h-2v1h-3v-1h-1v1h-3v-1h-2v1h-5v-1h-2v1h-3v-1h-2v1h-2v-1h-2v1h-1v-1h-3v1h-4v-1h-1v1h-1v-1h-1v1h-2v-1h-1v1h-1v-1h-1v1h-6v-1h-1v1h-4v-1h-1v1h-2v-1h-1v1h-3v-1h-2v1h-1v-1h-1v1h-3v-1h-1v1h-3v-1h-2v1h-1v-1h-1v1h-1v-1h-1v1h-1v-1h-3v1h-2v-1h-2v1h-2v-1h-1v1h-2v-1h-1v1h-2v-1h-1v1h-6v-1h-1v1h-2v-1h-3v1h-1v-1h-1v1h-5v-1h-3v1h-1v-1h-2v1h-2v-1h-1v1h-3v-1h-1v1h-1v-1h-2v1h-1v-1h-1v1h-3v-1h-2v1h-1v-1h-3v1h-4v-1h-1v1h-1v-1h-2v1h-6v-1h-1v1h-2v-1h-1v1h-1v-1h-1v1h-2v-1h-1v1h-1v-1h-2v1h-1v1h-1v-1h-3v-1h-1v1h-6v-1h-1v1h-1v-1h-1v1h-3v-1h-1v1h-1v-1h-1v1h-1v-1h-1v1h-2v-1h-1v1h-3v-1h-2v1h-8v-1h-1v1h-1v-1h-1v1h-2v-1h-2v1h-1v-1h-1v1h-1v-1h-1v1h-1v-1h-1v1h-4v-1h-1v1h-1v-1h-1v1h-6v-1h-2v1h-2v-1h-1v1h-3v-1h-1v1h-1v-1h-1v1h-3v-1h-1v1h-2v-1h-3v1h-1v-1h-1v1h-1v-1h-1v2h-1v-1h-2v-1h-1v1h-3v-1h-1v1h-1v-1h-2v1h-10v-1h-1v1h-2v-1h-3v1h-2v-1h-1v1h-2v-1h-1v2h-1v-2h-1v1h-1v-1h-1v1h-3v-1h-1v1h-2v-1h-1v1h-3v-1h-1v1h-1v-1h-2v1h-1v-1h-1v1h-1v-1h-2v1h-1v-1h-2v1h-2v-1h-1v1h-1v-1h-2v1h-1z"/><path d="M88 628h2v1h1v-1h8v1h1v-1h3v1h2v-1h1v1h1v-1h1v1h1v-1h1v-1h1v1h1v-1h1v1h1v1h1v-1h14v1h1v-1h7v1h1v-1h6v1h1v-1h6v1h1v-1h2v1h1v-1h9v1h1v-1h5v1h1v-1h4v1h1v-2h1v1h1v1h1v-1h5v1h1v-1h7v1h1v-1h5v1h1v-1h1v1h3v-1h6v1h1v-1h14v1h2v-1h6v1h1v-1h5v1h1v-1h6v-1h1v2h3v-1h9v-1h1v1h1v1h1v-1h1v1h1v-1h1v1h2v-1h2v-1h1v1h2v1h2v-1h2v1h1v-1h14v1h1v-1h1v1h1v-1h2v1h1v-1h1v1h2v-1h6v1h2v-1h2v1h1v-1h8v1h1v-1h1v1h1v-1h1v1h1v-1h3v1h3v-1h3v1h1v-1h8v1h1v-1h3v-1h1v1h4v1h2v-1h1v1h1v-1h10v1h1v-1h7v1h2v-1h1v1h4v-1h1v1h1v-1h3v-1h1v2h1v-1h5v1h3v-1h8v1h1v-1h3v1h1v-1h1v1h3v-1h2v1h1v-1h21v-1h1v1h5v1h3v-1h2v1h1v-1h8v1h2v-1h3v1h1v-1h10v1h2v-1h4v1h4v-1h3v1h2v-1h2v1h2v-1h7v1h1v-1h3v1h2v-1h15v1h1v-1h1v1h2v-1h1v1h1v-1h5v1h1v-1h1v1h2v-1h1v1h2v-1h16v1h1v-1h1v1h1v-1h1v1h1v-1h3v1h1v-1h1v1h1v-1h2v1h1v-1h22v1h1v-1h5v1h1v-1h2v1h1v-1h13v1h1v-1h12v1h1v-1h3v1h1v-1h6v1h1v-1h1v1h1v-1h14v1h2v-1h7v1h1v-1h4v1h2v-1h10v1h1v-1h1v1h1v-1h2v1h1v-1h1v1h2v-1h5v1h1v-1h21v1h1v-1h3v1h2v-1h4v1h2v-1h6v1h2v-1h6v1h1v-1h11v1h1v-2h1v1h8v1h1v-1h6v1h1v-1h1v1h4v-1h10v1h1v-1h3v1h1v-1h3v1h1v-1h5v1h1v-1h3v1h1v-1h2v1h1v-1h1v1h1v-1h2v1h1v-1h1v1h1v-1h3v1h1v-1h2v1h1v-1h1v1h2v-1h6v1h1v-1h1v1h1v-1h14v1h1v-1h7v1h2v-1h3v1h1v-1h7v1h2v-1h8v1h6v-1h6v1h1v-1h12v1h1v-1h1v1h1v-1h3v1h1v-1h10v1h1v-1h2v1h1v-1h2v1h1v-1h2v1h1v-1h5v1h1v-1h1v-1h1v1h9v1h2v-1h11v1h1v-1h1v1h2v-1h5v1h1v-1h1v1h1v-1h2v-1h1v1h2v1h2v-1h12v1h1v-1h1v1h1v-1h2v1h1v-1h5v1h1v-1h11v1h1v-1h1v1h1v-1h13v1h4v-1h5v1h1v-1h1v1h1v-1h1v1h3v-1h3v1h1v-1h7v1h1v-1h3v1h2v-1h2v-1h1v1h3v1h1v-1h1v1h1v-1h3v1h1v-1h4v1h1v-1h2v-1h1v1h3v1h1v-1h9v-1h1v1h4v-1h1v1h12v1h1v-1h1v1h1v-1h4v-1h1v1h2v1h1v-1h2v1h2v-1h22v1h1v-1h10v1h1v-1h3v1h3v-1h1v1h1v-1h7v1h1v-1h2v1h1v-2h1v1h7v1h1v-1h4v1h1v-1h7v1h1v-1h1v1h1v-1h1v-1h1v1h4v5h-1v-1h-1v1h-1v-1h-2v1h-1v-1h-4v1h-1v-1h-2v1h-1v-1h-1v1h-3v-1h-8v1h-1v-1h-5v1h-1v-1h-6v1h-1v-1h-11v1h-1v-1h-7v1h-1v-1h-5v1h-1v-1h-3v1h-1v-1h-8v1h-6v1h-1v-2h-3v1h-1v-1h-1v1h-1v-1h-9v1h-1v-1h-2v1h-1v-1h-5v1h-1v-1h-1v1h-2v-1h-6v1h-1v-1h-2v1h-2v-1h-2v1h-1v1h-1v-1h-1v-1h-10v2h-1v-2h-3v2h-1v-2h-4v1h-1v-1h-1v2h-1v-2h-1v1h-2v-1h-11v1h-1v-1h-2v1h-1v-1h-9v1h-2v-1h-2v1h-1v-1h-2v1h-1v-1h-1v1h-1v-1h-1v1h-1v-1h-4v1h-1v-1h-9v1h-1v-1h-2v1h-1v-1h-2v1h-1v-1h-5v1h-1v-1h-5v1h-1v-1h-3v1h-1v-1h-3v1h-1v-1h-3v1h-1v-1h-1v1h-1v-1h-5v1h-1v-1h-1v1h-1v-1h-5v1h-3v-1h-6v1h-2v-1h-4v1h-2v-1h-4v1h-1v-1h-3v1h-1v-1h-5v1h-1v-1h-2v1h-1v-1h-7v1h-1v-1h-1v1h-1v-1h-3v1h-1v-1h-1v1h-1v-1h-10v1h-1v-1h-6v1h-1v-1h-2v1h-1v-1h-11v1h-1v-1h-1v1h-1v-1h-4v1h-1v-1h-1v1h-1v-1h-1v1h-1v-1h-3v1h-1v-1h-2v1h-1v1h-1v-2h-5v2h-1v-2h-5v1h-1v-1h-3v1h-1v-1h-4v1h-1v-1h-10v1h-1v-1h-6v1h-1v-1h-6v1h-1v-1h-2v1h-1v-1h-1v1h-1v-1h-16v1h-1v-1h-8v1h-5v-1h-3v1h-1v-1h-3v1h-1v-1h-3v1h-1v-1h-2v1h-1v-1h-2v1h-2v-1h-1v1h-1v-1h-1v2h-1v-2h-1v2h-1v-2h-1v1h-2v-1h-3v1h-1v-1h-1v1h-5v-1h-9v1h-1v-1h-1v1h-5v-1h-3v1h-2v-1h-5v1h-2v-1h-5v2h-1v-2h-2v1h-1v-1h-9v1h-1v-1h-2v1h-1v-1h-3v1h-1v1h-1v-2h-10v1h-1v-1h-1v1h-3v-1h-1v1h-1v-1h-5v1h-1v-1h-4v1h-1v-1h-9v1h-1v-1h-14v1h-1v-1h-4v1h-2v-1h-2v1h-1v-1h-3v1h-3v-1h-4v1h-1v-1h-6v1h-1v-1h-3v1h-1v-1h-3v1h-2v-1h-1v1h-1v-1h-8v1h-1v-1h-1v1h-1v-1h-4v1h-1v-1h-8v1h-1v-1h-1v1h-1v-1h-7v1h-1v-1h-9v1h-1v-1h-1v1h-1v-1h-4v1h-3v-1h-2v1h-2v-1h-1v1h-2v-1h-2v2h-1v-1h-1v-1h-1v1h-2v-1h-7v1h-2v-1h-5v1h-1v-1h-6v1h-1v-1h-4v1h-1v-1h-7v1h-1v-1h-1v1h-2v-1h-3v1h-2v-1h-5v1h-1v-1h-2v1h-1v-1h-2v2h-1v-2h-1v1h-1v-1h-2v1h-1v-1h-1v1h-1v-1h-5v1h-1v-1h-3v1h-2v-1h-1v1h-1v-1h-5v1h-1v-1h-2v1h-1v-1h-1v1h-1v-1h-3v1h-1v1h-1v-2h-8v1h-2v-1h-3v1h-1v-1h-5v1h-2v-1h-3v1h-2v1h-1v-2h-2v1h-1v-1h-5v1h-1v-1h-2v1h-1v-1h-3v1h-1v-1h-13v1h-1v-1h-1v2h-1v-2h-3v1h-1v1h-1v-2h-6v1h-1v-1h-1v1h-1v-1h-3v1h-1v-1h-1v1h-1v-1h-7v1h-1v-1h-3v1h-1v-1h-1v1h-2v-1h-2v1h-1v-1h-2v1h-2v-1h-1v1h-1v-1h-2v2h-1v-2h-2v1h-1v-1h-2v1h-1v-1h-1v1h-1v-1h-3v2h-1v-2h-9v2h-1v-2h-10v1h-1v-1h-7v1h-2v-1h-1v1h-2v-1h-7v1h-1v-1h-2v1h-3v-1h-1v1h-2v-1h-2v1h-3v-1h-2v1h-1v-1h-1v1h-1v-1h-6v1h-1v-1h-4v1h-1v-1h-1v1h-1v-1h-1v1h-1v-1h-1v1h-1v-1h-1v1h-1v-1h-1v1h-1v-1h-21v1h-1v-1h-11v1h-1v-1h-9v1h-2v-1h-2v1h-1v-1h-2v1h-1v-1h-2v1h-1v1h-1v-2h-3v1h-1v-1h-2v1h-1v-1h-3v1h-1v-1h-6v1h-2v-1h-1v2h-1v-2h-2v1h-1v-1h-2v1h-1v-1h-1v1h-1v-1h-4v1h-1v-1h-7v1h-1v-1h-8v1h-1v-1h-4v1h-1v-1h-6v1h-1v-1h-2v2h-1v-1h-1v-1h-3v1h-1v-1h-3v1h-3v-1h-4v1h-1v-1h-1v2h-1v-2h-1v1h-1v-1h-2v1h-2v-1h-4z"/><path d="M88 659h2v-1h3v1h2v-1h3v1h1v-1h2v-1h1v1h1v-1h1v1h1v1h1v-1h3v1h1v-1h2v1h1v-1h3v1h2v-1h3v1h1v-1h12v1h3v-1h1v1h1v-1h3v1h2v-1h1v1h1v-1h1v1h1v-1h3v1h1v-1h4v1h1v-1h3v1h2v-1h5v1h1v-1h4v1h2v-1h3v1h1v-1h3v1h2v-1h2v1h1v-1h1v1h1v-1h2v-1h1v1h5v1h1v-1h4v1h2v-1h3v1h1v-1h3v1h2v-1h1v1h1v-1h3v1h2v-1h1v1h2v-1h1v1h3v-1h1v1h1v-1h5v1h3v-1h1v1h3v-1h7v1h1v-1h1v1h1v-2h1v2h1v-1h4v1h3v-1h1v1h1v-1h2v1h2v-1h2v1h1v-1h1v-1h1v2h1v-1h4v-1h1v1h1v1h2v-1h3v1h1v-1h1v1h1v-1h4v1h1v-1h6v1h2v-1h5v1h1v-1h1v1h1v-1h5v1h2v-1h2v1h1v-1h6v1h1v-1h5v1h1v-1h2v1h1v-1h4v1h2v-1h6v1h2v-1h2v1h1v-1h3v1h1v-1h1v1h1v-1h2v1h1v-1h2v1h3v-2h1v1h1v1h1v-1h2v1h4v-1h4v-1h1v1h1v1h1v-1h1v1h1v-1h5v1h2v-1h1v1h1v-1h2v-1h1v2h1v-1h2v1h1v-1h1v1h1v-1h2v1h4v-1h1v1h2v-1h2v1h4v-1h1v1h4v-1h2v-1h2v2h1v-1h2v1h1v-1h1v1h1v-1h1v1h1v-1h2v1h1v-1h3v1h1v-1h1v1h1v-1h1v1h1v-1h1v1h2v-1h3v-1h1v2h1v-1h3v1h1v-1h1v1h4v-1h3v1h1v-1h1v1h2v-1h1v1h5v-1h1v1h1v-1h4v1h1v-1h5v1h5v-1h3v-1h1v1h1v1h3v-1h3v1h1v-1h4v1h1v-1h3v1h1v-1h4v1h1v-1h2v1h1v-1h2v1h1v-1h1v1h1v-1h7v1h1v-1h2v1h1v-1h4v1h1v-1h4v1h1v-1h11v1h1v-1h4v1h1v-1h5v1h2v-2h1v1h2v1h2v-1h1v1h1v-1h3v-1h1v1h1v1h1v-1h6v1h1v-1h2v1h1v-1h2v1h1v-1h2v1h1v-1h6v1h3v-1h7v1h2v-1h1v1h1v-1h1v1h1v-1h4v1h1v-1h1v1h1v-1h8v1h1v-1h3v1h1v-1h1v1h1v-1h3v1h1v-1h7v1h1v-1h1v1h1v-1h2v1h1v-1h9v1h3v-2h1v2h2v-1h2v1h1v-1h3v1h1v-1h5v1h1v-1h3v1h2v-1h1v1h4v-1h4v1h1v-1h1v1h1v-1h6v1h1v-1h1v1h1v-1h1v1h1v-1h1v1h1v-1h3v1h1v-1h1v1h1v-1h4v1h1v-1h2v1h1v-1h1v1h2v-1h6v1h1v-1h2v1h1v-1h1v-1h1v1h5v1h1v-1h4v1h1v-1h1v1h1v-1h5v1h1v-1h3v1h1v-1h2v1h2v-1h1v1h2v-1h3v1h1v-1h2v1h1v-1h2v1h1v-1h1v1h2v-1h3v-1h1v2h1v-1h4v1h1v-1h1v1h2v-1h4v-1h1v1h2v1h1v-1h1v1h1v-1h3v-1h1v1h1v1h1v-1h2v1h1v-1h9v1h1v-1h3v1h2v-1h4v1h1v-1h6v1h1v-1h5v1h1v-1h5v1h1v-1h2v1h1v-1h5v-1h1v1h12v1h1v-1h1v1h1v-1h2v1h1v-1h5v1h1v-1h2v1h1v-1h1v1h1v-1h1v-1h1v1h1v1h1v-1h3v1h1v-1h1v1h1v-1h13v1h1v-1h1v1h2v-1h2v1h1v-1h1v1h1v-1h1v1h1v-1h2v1h1v-1h2v1h1v-1h1v1h1v-1h1v1h2v-1h2v1h1v-1h1v1h1v-1h1v1h2v-1h1v1h1v-1h2v1h1v-1h5v1h3v-1h1v1h1v-1h1v1h1v-1h5v1h2v-1h3v1h1v-1h1v1h1v-1h1v1h1v-1h1v1h3v-1h2v-1h1v1h3v1h3v-1h3v1h2v-1h1v1h3v-1h1v1h1v-1h1v1h4v-1h3v1h2v-1h1v1h1v-1h2v1h1v-1h1v1h1v-1h1v1h1v-1h5v1h2v-1h3v1h1v-1h1v-1h1v1h1v1h3v-1h4v1h2v-1h2v1h1v-1h1v1h1v-1h1v1h1v-1h1v1h1v-1h1v1h2v-1h1v1h2v-1h5v1h1v-1h1v1h1v-1h1v1h2v-1h1v1h1v-1h1v1h1v-1h1v1h1v-1h2v1h1v-1h1v1h1v-1h3v1h1v-1h6v1h1v-1h1v1h2v-1h1v1h1v-1h5v1h2v-1h4v1h1v-1h3v1h2v-1h2v1h2v-1h1v1h1v-1h4v1h1v-1h3v1h1v-1h11v1h1v-1h1v1h1v-1h3v1h1v-1h1v1h1v-1h7v1h1v-1h3v1h1v-1h5v-1h1v1h9v1h1v-1h4v1h2v-1h11v1h1v-1h5v1h1v-1h3v1h1v-1h2v1h1v-1h1v5h-1v-1h-1v1h-1v-1h-2v1h-1v-1h-2v1h-1v-1h-4v1h-1v-1h-1v1h-1v-1h-6v1h-1v-1h-1v1h-1v-1h-4v1h-1v-1h-15v1h-3v-1h-1v1h-1v-1h-3v1h-2v-1h-1v1h-1v-1h-2v1h-1v-1h-2v1h-1v-1h-4v1h-2v-1h-1v1h-1v-1h-2v1h-3v-1h-8v1h-2v-1h-1v1h-1v-1h-7v2h-1v-2h-2v1h-1v-1h-2v1h-1v-1h-11v1h-2v-1h-3v1h-1v-1h-7v1h-1v-1h-1v1h-1v-1h-4v1h-3v-1h-11v1h-2v-1h-1v1h-2v-1h-5v1h-1v-1h-1v1h-1v-1h-6v1h-2v-1h-1v1h-2v-1h-3v1h-2v-1h-1v1h-1v-1h-1v1h-1v-1h-3v2h-1v-2h-4v1h-2v-1h-7v1h-1v-1h-1v1h-1v-1h-1v2h-1v-2h-1v1h-1v-1h-2v1h-1v-1h-4v1h-1v-1h-2v1h-1v-1h-2v1h-1v-1h-8v1h-2v-1h-4v1h-1v-1h-5v1h-1v-1h-1v1h-2v-1h-2v1h-1v-1h-1v1h-1v-1h-3v1h-1v-1h-3v2h-1v-2h-6v1h-1v-1h-5v1h-1v-1h-4v1h-1v-1h-6v1h-2v-1h-1v1h-1v-1h-12v1h-2v-1h-2v1h-1v-1h-1v1h-1v-1h-4v1h-1v-1h-4v1h-2v-1h-2v1h-1v-1h-3v1h-1v-1h-1v1h-1v-1h-2v1h-1v-1h-6v1h-1v-1h-13v1h-1v-1h-1v1h-1v-1h-2v1h-2v-1h-1v1h-4v-1h-1v1h-2v-1h-1v1h-1v-1h-4v1h-1v-1h-5v1h-1v-1h-4v1h-1v-1h-1v1h-2v-1h-2v1h-1v-1h-20v1h-1v-1h-2v1h-1v-1h-1v1h-1v-1h-4v1h-2v-1h-5v1h-2v-1h-5v1h-1v1h-1v-2h-2v1h-1v-1h-8v1h-1v-1h-3v1h-1v-1h-1v1h-1v-1h-8v1h-1v-1h-1v1h-1v-1h-5v1h-2v-1h-2v1h-2v-1h-6v1h-2v-1h-1v1h-1v-1h-6v1h-1v-1h-14v1h-2v-1h-8v1h-1v-1h-3v1h-1v-1h-1v1h-1v-1h-1v1h-1v-1h-5v1h-1v-1h-1v1h-2v-1h-3v1h-2v-1h-3v2h-1v-2h-1v1h-2v-1h-7v2h-1v-1h-3v-1h-7v1h-2v-1h-4v1h-2v-1h-14v1h-1v-1h-3v1h-1v-1h-7v1h-1v-1h-5v1h-1v-1h-5v1h-1v-1h-1v1h-1v-1h-5v1h-2v-1h-3v1h-1v-1h-2v2h-1v-2h-1v1h-1v-1h-6v1h-1v-1h-1v1h-1v-1h-1v1h-1v-1h-8v1h-1v-1h-3v1h-1v-1h-1v1h-1v-1h-3v1h-1v-1h-1v1h-1v-1h-7v1h-1v-1h-6v1h-1v-1h-4v1h-1v-1h-4v1h-1v-1h-4v1h-1v-1h-8v1h-2v-1h-1v1h-1v-1h-8v1h-1v-1h-4v1h-2v-1h-1v1h-1v-1h-3v1h-1v-1h-4v1h-1v-1h-2v1h-1v-1h-1v1h-1v-1h-3v1h-1v-1h-8v1h-1v-1h-3v1h-1v-1h-2v1h-2v-1h-6v1h-2v-1h-1v1h-1v-1h-5v1h-1v-1h-3v1h-2v-1h-4v1h-1v-1h-7v2h-1v-1h-1v-1h-5v2h-1v-2h-1v1h-1v-1h-3v1h-1v-1h-3v1h-1v-1h-10v1h-1v-1h-15v1h-1v-1h-2v1h-2v-1h-4v1h-1v-1h-2v1h-1v-1h-3v1h-1v-1h-1v1h-1v-1h-5v1h-1v-1h-5v1h-1v-1h-3v1h-2v-1h-3v1h-1v-1h-12v1h-2v-1h-3v1h-1v-1h-1v1h-1v-1h-3v1h-1v-1h-6v1h-1v-1h-2v1h-1v-1h-1v1h-2v-1h-2v1h-1v-1h-6v2h-1v-2h-3v1h-2v-1h-2v2h-1v-2h-5v1h-1v-1h-11v1h-2v-1h-3v1h-1v-1h-1v1h-1v-1h-6v1h-1v-1h-2v2h-1v-2h-5v1h-1v-1h-3v1h-1v-1h-3v1h-1v-1h-3v1h-1v-1h-1v1h-1v-1h-4v1h-2v-1h-14v1h-1v-1h-2v1h-1v-1h-5v1h-2v-1h-2v1h-1v-1h-5v1h-1v-1h-7v1h-1v-1h-4v1h-1v-1h-1v1h-1v-1h-3v1h-1v-1h-10v1h-1v-1h-6v1h-1v-1h-4v1h-1v-1h-9v1h-1v-1h-15v1h-1v-1h-2v1h-1v-1h-5v1h-2v-1h-1v1h-1v-1h-3v1h-1v-1h-2v1h-1v-1h-1v1h-1v-1h-1v1h-1v-1h-6v1h-1v-1h-2v1h-1v-1h-2v1h-1v-1h-3v1h-1z"/><path d="M88 688h1v1h2v-1h1v1h3v-1h2v1h3v-1h1v1h1v-1h1v1h1v-1h2v1h2v-1h1v1h10v-1h2v1h3v-1h1v1h6v-1h1v1h1v-1h2v1h3v-1h1v1h1v-1h1v1h1v-1h1v1h1v-1h1v1h2v-1h1v1h11v-1h1v-1h1v2h5v-1h1v1h4v-1h1v1h6v-1h1v1h1v-1h1v1h3v-1h3v1h1v-1h1v1h1v-1h1v1h1v-1h1v1h4v-1h1v1h3v-2h1v2h1v-1h2v1h6v-1h1v1h7v-1h1v1h5v-1h2v1h3v-1h1v1h4v-1h1v1h3v-1h1v1h1v-2h1v2h7v-1h1v1h6v-1h1v1h5v-1h1v1h4v-1h1v1h2v-1h1v1h3v-1h1v-1h1v2h2v-1h2v1h1v-1h1v1h1v-1h3v1h3v-1h1v1h2v-2h1v2h7v-1h1v1h2v-1h1v1h2v-1h1v1h2v-1h2v-1h1v2h6v-1h3v1h3v-1h1v1h2v-2h1v2h2v-1h1v1h1v-1h2v1h2v-1h1v1h2v-1h1v1h1v-1h1v1h4v-1h1v1h2v-1h1v1h4v-1h1v1h2v-1h1v1h1v-1h2v1h4v-1h1v1h7v-1h1v1h5v-1h1v1h4v-1h1v1h1v-1h1v1h1v-1h1v1h2v-2h1v2h1v-1h1v1h1v-1h1v1h3v-1h2v1h3v-1h3v1h3v-1h2v1h6v-1h1v1h2v-1h1v1h4v-1h1v1h1v-1h2v1h1v-1h1v1h1v-1h1v1h3v-1h2v1h2v-1h2v1h3v-1h2v1h2v-1h1v1h1v-1h1v1h8v-1h3v1h1v-1h1v1h2v-1h1v1h3v-1h2v1h1v-1h1v1h6v-1h2v1h3v-1h2v1h5v-1h1v1h1v-1h2v1h1v-1h2v1h4v-1h1v1h3v-1h1v1h5v-1h1v1h4v-1h1v1h1v-1h1v1h4v-1h1v1h2v-1h2v1h2v-1h1v1h2v-1h1v1h11v-1h1v1h1v-1h1v1h1v-1h1v1h1v-1h1v1h4v-1h1v1h2v-1h1v1h2v-1h1v1h1v-1h1v1h2v-1h1v1h6v-1h2v1h1v-1h1v1h1v-1h2v1h2v-1h1v1h3v-1h1v1h1v-1h1v1h2v-1h2v1h2v-1h3v1h6v-1h1v1h1v-1h1v1h5v-1h1v1h2v-1h2v1h2v-1h1v1h1v-1h2v1h2v-1h1v1h2v-1h1v1h3v-1h1v1h3v-1h1v1h6v-1h1v1h3v-1h1v1h3v-1h1v-1h1v2h1v-1h1v-1h1v2h9v-1h1v1h2v-1h1v1h7v-1h2v1h1v-1h2v1h2v-1h1v1h3v-1h2v1h1v-1h1v1h1v-1h1v1h8v-1h1v1h4v-1h1v1h1v-1h1v1h1v-1h1v1h2v-1h1v1h2v-1h3v1h4v-2h1v2h3v-1h3v1h1v-1h2v1h4v-1h5v1h5v-1h1v1h1v-1h2v1h8v-1h1v1h1v-1h1v1h1v-1h2v1h3v-1h2v1h2v-1h1v1h5v-1h2v1h2v-1h1v1h1v-1h1v1h4v-1h1v-1h1v2h1v-1h2v1h3v-1h1v1h1v-1h1v1h1v-1h2v1h4v-1h1v1h1v-1h1v-1h1v2h7v-1h5v1h1v-1h1v1h2v-1h3v1h2v-1h1v1h2v-1h1v1h1v-1h1v1h1v-1h2v1h2v-1h3v1h3v-1h1v1h7v-1h2v1h9v-1h1v1h5v-1h2v1h1v-1h1v1h4v-1h3v1h2v-1h2v1h10v-1h2v1h1v-1h1v1h2v-1h1v1h2v-1h1v1h2v-1h1v1h4v-1h1v1h1v-1h1v1h5v-1h1v1h1v-2h1v2h5v-2h1v2h1v-1h3v1h1v-1h1v1h5v-1h2v1h1v-1h1v1h1v-1h2v1h3v-1h1v1h5v-2h1v2h1v-1h1v1h1v-1h2v1h1v-1h1v1h1v-1h2v1h2v-1h4v1h1v-1h3v1h2v-1h1v1h2v-1h2v1h1v-1h3v1h1v-1h1v1h1v-1h1v1h1v-1h1v1h1v-1h1v1h3v-1h1v1h4v-1h1v1h1v-1h1v1h1v-1h1v-1h1v2h1v-1h1v1h1v-1h3v1h3v-1h1v1h1v-1h2v1h3v-1h1v1h4v-1h1v1h6v-1h1v1h2v-1h3v1h2v-1h2v1h3v-1h1v1h8v-1h1v1h2v-1h1v1h3v-1h1v1h10v-1h3v1h2v-1h1v1h1v-1h1v1h6v-1h2v1h2v-1h3v1h2v-1h1v1h2v-1h1v1h2v-1h1v1h1v-1h1v1h1v-1h1v1h2v-1h1v1h1v-1h2v1h4v-1h1v1h2v-1h1v1h11v-1h1v1h1v-1h1v1h4v-1h1v1h2v-1h1v1h4v-1h2v1h5v-2h1v2h4v-1h2v1h2v-1h2v1h2v-1h1v1h5v-1h1v1h1v-1h1v1h3v-1h1v1h1v-1h1v1h1v-1h1v1h3v-1h2v1h1v-1h1v1h1v-1h1v1h2v-1h1v1h2v-1h1v4h-3v1h-2v-1h-2v1h-1v-1h-1v1h-1v-1h-1v1h-2v-1h-1v1h-1v-1h-2v1h-1v-1h-1v1h-1v-1h-1v1h-2v-1h-1v1h-1v-1h-1v1h-1v-1h-2v1h-1v1h-1v-2h-1v1h-4v-1h-1v1h-1v-1h-1v1h-3v-1h-1v1h-3v-1h-1v1h-1v-1h-2v1h-4v-1h-1v1h-2v-1h-1v1h-3v-1h-1v1h-1v-1h-2v1h-1v-1h-1v1h-3v-1h-1v1h-2v-1h-1v1h-2v-1h-1v1h-1v-1h-1v1h-1v-1h-3v1h-3v-1h-1v1h-1v-1h-1v1h-2v-1h-3v1h-1v-1h-1v1h-1v-1h-1v1h-1v-1h-1v1h-1v-1h-1v1h-1v-1h-1v1h-2v1h-1v-1h-2v-1h-1v1h-1v-1h-1v1h-1v-1h-1v1h-1v1h-1v-1h-2v-1h-2v1h-2v-1h-1v1h-1v-1h-1v1h-1v-1h-1v1h-1v-1h-3v1h-5v-1h-1v1h-1v-1h-1v1h-1v-1h-1v1h-1v-1h-1v1h-1v-1h-2v1h-3v-1h-1v1h-2v-1h-1v1h-3v-1h-2v1h-1v-1h-2v1h-3v-1h-1v1h-2v-1h-2v1h-1v-1h-1v1h-1v-1h-1v1h-1v-1h-1v1h-1v-1h-1v1h-3v-1h-3v1h-1v1h-1v-1h-1v-1h-1v1h-1v-1h-1v1h-3v-1h-1v1h-1v-1h-1v1h-1v-1h-2v1h-1v-1h-3v1h-1v-1h-1v1h-2v-1h-1v1h-7v-1h-1v1h-1v-1h-2v1h-1v-1h-1v1h-3v-1h-3v1h-2v-1h-1v1h-2v-1h-1v1h-1v-1h-1v1h-1v-1h-1v1h-1v-1h-2v1h-2v-1h-1v1h-1v-1h-1v1h-1v-1h-3v2h-1v-1h-1v-1h-1v1h-4v-1h-1v1h-1v-1h-1v1h-3v-1h-2v1h-2v-1h-2v1h-1v-1h-1v1h-1v-1h-1v1h-1v-1h-1v1h-3v-1h-1v1h-1v-1h-1v1h-1v-1h-2v1h-1v-1h-3v1h-1v-1h-1v1h-3v-1h-2v1h-1v-1h-1v1h-3v-1h-1v1h-1v-1h-2v1h-6v-1h-2v1h-1v-1h-1v1h-3v-1h-1v1h-2v-1h-1v1h-3v-1h-1v1h-2v-1h-1v1h-3v1h-1v-2h-1v1h-2v-1h-1v1h-2v-1h-1v1h-1v-1h-1v1h-4v-1h-1v1h-2v-1h-2v1h-1v-1h-1v1h-2v-1h-3v1h-2v-1h-1v1h-1v-1h-2v1h-1v-1h-1v1h-1v-1h-2v1h-1v-1h-2v1h-1v-1h-2v1h-1v-1h-1v1h-2v-1h-1v1h-2v-1h-1v1h-5v-1h-1v1h-4v-1h-2v1h-1v-1h-1v1h-1v-1h-1v1h-1v-1h-2v1h-2v-1h-1v1h-1v-1h-1v1h-5v-1h-1v1h-2v-1h-3v1h-3v-1h-1v1h-2v-1h-1v1h-5v-1h-1v1h-1v-1h-1v1h-1v-1h-1v1h-1v-1h-3v1h-4v-1h-1v1h-1v1h-1v-1h-2v-1h-1v1h-1v-1h-1v1h-1v-1h-2v1h-3v-1h-2v1h-3v-1h-1v1h-2v-1h-1v1h-3v-1h-1v1h-1v-1h-2v1h-3v-1h-1v1h-2v-1h-1v1h-1v-1h-2v1h-1v-1h-1v1h-1v-1h-1v1h-1v-1h-1v1h-3v-1h-3v1h-1v-1h-1v1h-2v-1h-1v1h-2v-1h-1v1h-1v-1h-1v1h-2v-1h-2v1h-1v-1h-1v1h-1v-1h-1v1h-1v-1h-1v1h-2v-1h-1v1h-1v1h-1v-2h-1v2h-1v-1h-3v-1h-3v1h-4v-1h-1v1h-1v-1h-2v1h-3v-1h-1v1h-2v-1h-1v1h-2v-1h-1v1h-2v-1h-1v1h-1v-1h-2v1h-1v-1h-1v1h-1v-1h-1v1h-5v-1h-1v1h-1v-1h-1v1h-1v-1h-1v1h-2v-1h-1v1h-2v-1h-1v1h-2v-1h-1v1h-2v-1h-1v1h-1v-1h-1v1h-1v-1h-1v1h-1v-1h-1v1h-3v-1h-1v1h-1v-1h-1v2h-1v-1h-2v-1h-2v1h-6v-1h-1v1h-1v-1h-1v1h-1v-1h-2v2h-1v-2h-1v1h-1v-1h-2v1h-1v-1h-1v1h-2v-1h-3v1h-1v-1h-1v1h-2v-1h-1v1h-1v-1h-1v1h-1v-1h-2v1h-8v-1h-1v1h-3v-1h-1v1h-2v-1h-1v1h-2v-1h-1v1h-1v-1h-1v1h-3v-1h-1v1h-1v-1h-1v1h-1v-1h-1v1h-1v-1h-1v1h-2v-1h-1v1h-3v-1h-1v1h-1v-1h-1v2h-1v-1h-2v-1h-1v1h-2v-1h-2v1h-1v-1h-2v1h-2v-1h-1v1h-1v-1h-1v1h-2v-1h-2v1h-1v-1h-1v1h-8v-1h-1v1h-2v-1h-1v1h-1v-1h-1v1h-2v-1h-1v1h-1v-1h-2v1h-2v-1h-1v2h-1v-2h-1v1h-3v-1h-1v2h-1v-1h-3v-1h-1v1h-1v-1h-1v1h-2v-1h-1v1h-2v-1h-2v1h-3v-1h-1v1h-2v-1h-1v1h-3v-1h-1v1h-2v-1h-1v1h-1v-1h-1v1h-1v-1h-1v1h-1v-1h-1v1h-1v-1h-1v1h-3v-1h-1v1h-3v-1h-1v1h-1v1h-1v-1h-1v-1h-1v1h-1v-1h-1v1h-2v1h-1v-2h-1v1h-1v-1h-3v1h-1v-1h-1v1h-5v-1h-1v1h-1v-1h-1v1h-1v-1h-1v1h-1v-1h-1v1h-1v-1h-1v1h-1v-1h-1v1h-1v-1h-1v1h-3v-1h-1v1h-4v-1h-2v2h-1v-2h-1v1h-4v-1h-2v1h-3v-1h-3v1h-3v-1h-1v1h-7v-1h-1v1h-5v-1h-2v1h-1v-1h-1v1h-1v-1h-2v1h-1v-1h-1v1h-1v-1h-1v1h-3v-1h-1v1h-3v-1h-1v1h-1v-1h-1v1h-1v-1h-2v1h-2v-1h-1v1h-4v-1h-1v1h-1v-1h-1v1h-1v1h-1v-1h-2v-1h-2v1h-1v-1h-1v1h-1v-1h-1v1h-2v-1h-1v1h-3v-1h-1v1h-3v-1h-1v1h-2v-1h-3v1h-1v-1h-1v1h-2v-1h-1v1h-1v-1h-1v1h-1v-1h-1v1h-3v-1h-1v1h-2v-1h-2v1h-2v-1h-1v1h-1v-1h-2v1h-2v-1h-1v1h-1v-1h-1v1h-1v-1h-3v1h-2v-1h-1v1h-2v-1h-3v1h-2v-1h-1v1h-2v-1h-1v1h-2v-1h-1v1h-1v-1h-1v1h-1v-1h-1v1h-1v-1h-2v1h-2v-1h-1v1h-2v-1h-2v1h-2v-1h-1v1h-1v-1h-2v1h-3v-1h-1v1h-1v-1h-2v1h-3v-1h-1v1h-4v-1h-1v1h-1v-1h-4v1h-2v-1h-1v1h-2v-1h-1v1h-2v-1h-1v1h-1v-1h-1v1h-1v-1h-1v1h-1v-1h-1v1h-3v-1h-1v1h-1v-1h-1v1h-1v-1h-2v1h-2v-1h-1v1h-1v-1h-2v1h-1v-1h-3v1h-5v-1h-1v1h-1v1h-1v-1h-2v-1h-1v1h-1v-1h-1v1h-4v-1h-2v1h-3v-1h-1v1h-1v-1h-3v1h-3v-1h-2v1h-2v-1h-2v1h-1v-1h-1v1h-1v-1h-1v1h-1v-1h-1v1h-2v-1h-1v1h-3v1h-1v-1h-2v-1h-1v1h-2v-1h-1v1h-6v-1h-1v1h-1v-1h-1v1h-1v-1h-1v1h-1v-1h-1v1h-1v-1h-1v1h-1v-1h-1v1h-3v-1h-1v1h-2v-1h-1v1h-1v-1h-1v1h-1v-1h-1v1h-1v-1h-1v2h-1v-2h-1v1h-1v-1h-1v1h-3v-1h-1v1h-2v-1h-1v1h-1v-1h-1v1h-1v-1h-1v1h-3v-1h-1v1h-1z"/><path d="M88 719h1v1h2v-1h2v1h1v-1h3v1h1v-1h15v1h2v-1h3v1h1v-1h6v1h1v-1h15v1h1v-1h13v1h1v-1h5v1h2v-1h6v1h1v-1h3v1h1v-1h10v1h1v-1h2v1h1v-1h12v1h1v-1h23v1h2v-1h1v1h1v-1h1v1h1v-1h14v1h1v-1h6v1h1v-1h11v1h1v-1h2v1h1v-1h1v1h1v-1h3v1h1v-1h2v1h1v-1h7v1h1v-1h3v1h2v-1h7v1h1v-1h5v1h1v-1h7v1h1v-1h11v1h1v-1h2v1h1v-1h7v1h2v-1h4v1h1v-1h7v-1h1v1h8v1h1v-1h5v1h1v-1h4v1h1v-1h1v1h1v-1h4v1h4v-1h1v1h1v-1h14v-1h1v1h2v1h2v-1h6v1h1v-1h1v1h1v-1h3v1h1v-1h5v1h2v-1h12v1h1v-1h3v1h1v-1h2v1h1v-1h1v1h1v-1h5v1h1v-1h5v1h1v-2h1v1h12v1h1v-1h11v-1h1v1h2v1h2v-1h2v1h1v-1h19v1h2v-1h15v1h1v-1h3v1h1v-1h8v1h2v-1h5v1h1v-1h4v1h1v-1h2v1h1v-1h4v1h2v-1h3v-1h1v2h2v-1h3v1h1v-1h7v1h1v-1h5v1h2v-1h2v1h2v-1h5v1h1v-1h4v1h2v-1h8v1h1v-1h3v1h1v-1h2v1h1v-1h2v-1h1v1h1v1h1v-1h1v1h1v-1h2v1h1v-1h16v-1h1v1h4v-1h1v1h9v1h2v-1h10v1h1v-1h1v1h1v-1h5v1h1v-1h13v-1h1v1h4v1h1v-1h7v1h1v-1h3v1h1v-1h21v1h1v-1h10v1h1v-1h2v1h1v-1h1v1h1v-1h13v1h1v-1h9v1h1v-1h4v1h2v-1h6v1h1v-1h1v-1h1v1h1v1h1v-1h1v-1h1v1h4v1h1v-1h4v1h2v-1h3v-1h1v2h1v-1h2v1h1v-1h6v1h2v-1h2v1h2v-1h5v1h1v-1h2v-1h1v1h6v1h1v-1h4v1h3v-1h2v1h2v-1h6v1h6v-1h5v-1h1v2h2v-1h13v1h2v-1h8v1h1v-1h1v1h1v-1h6v1h1v-1h7v1h1v-1h11v1h2v-1h14v1h1v-1h20v1h1v-1h1v1h1v-1h10v-1h1v1h12v1h1v-1h2v1h2v-1h3v1h1v-1h16v1h1v-1h1v1h1v-1h8v1h1v-1h9v1h1v-1h6v1h1v-1h14v1h1v-1h10v-1h1v2h1v-1h22v1h1v-1h15v1h1v-1h6v1h2v-1h8v1h1v-1h19v1h1v-1h2v1h4v-1h10v1h1v-1h3v-1h1v2h1v-1h4v1h1v-1h14v1h1v-1h3v1h1v-1h5v1h1v-1h2v1h2v-1h4v1h1v-1h7v1h1v-1h2v1h1v-1h2v1h1v5h-1v-2h-1v1h-1v-1h-4v1h-1v-1h-5v1h-1v-1h-6v1h-1v-1h-2v1h-1v-1h-1v1h-2v-1h-3v1h-1v-1h-3v1h-2v-1h-15v1h-1v-1h-1v1h-1v-1h-1v1h-1v-1h-4v1h-2v-1h-4v1h-1v-1h-2v1h-1v-1h-1v1h-1v-1h-2v1h-1v-1h-7v1h-1v-1h-3v1h-1v-1h-2v1h-2v-1h-5v1h-1v-1h-2v1h-1v-1h-4v1h-1v-1h-4v1h-1v-1h-2v1h-2v-1h-3v2h-1v-2h-4v1h-3v-1h-1v1h-2v-1h-5v1h-1v-1h-1v1h-1v-1h-4v1h-1v-1h-2v1h-2v-1h-2v1h-3v-1h-23v1h-1v-1h-5v1h-1v-1h-6v1h-1v1h-1v-1h-1v-1h-4v1h-1v-1h-1v1h-1v-1h-2v1h-2v-1h-1v1h-1v-1h-1v1h-2v-1h-3v1h-1v-1h-1v1h-1v-1h-1v1h-1v-1h-3v1h-1v-1h-3v1h-2v-1h-2v1h-3v-1h-2v1h-1v-1h-2v1h-1v-1h-4v1h-1v-1h-3v1h-1v-1h-2v1h-1v-1h-1v1h-1v-1h-13v1h-1v-1h-4v1h-1v-1h-3v1h-2v-1h-4v1h-1v-1h-4v2h-1v-2h-3v1h-2v-1h-4v1h-1v-1h-8v1h-1v-1h-1v1h-2v-1h-3v1h-1v-1h-5v1h-1v-1h-10v1h-2v-1h-6v1h-1v-1h-8v1h-2v-1h-2v1h-1v-1h-2v1h-1v-1h-2v1h-1v-1h-17v1h-1v-1h-1v1h-1v-1h-1v1h-3v-1h-1v1h-1v-1h-6v1h-1v-1h-2v1h-1v-1h-1v1h-1v-1h-3v1h-1v-1h-4v1h-1v-1h-3v1h-2v-1h-3v1h-1v-1h-7v1h-1v-1h-2v1h-1v-1h-5v1h-1v-1h-1v2h-2v-2h-1v1h-1v-1h-2v1h-1v-1h-21v1h-3v-1h-10v1h-1v-1h-3v1h-1v-1h-1v1h-1v-1h-1v1h-1v-1h-4v1h-1v-1h-1v1h-1v-1h-4v1h-1v-1h-1v1h-1v-1h-6v1h-1v-1h-1v1h-1v-1h-1v1h-2v-1h-7v1h-1v-1h-3v1h-1v-1h-2v1h-1v-1h-1v1h-1v-1h-12v1h-2v-1h-3v1h-1v1h-1v-1h-1v-1h-6v1h-1v-1h-2v1h-1v-1h-1v1h-1v-1h-3v1h-1v-1h-2v1h-1v-1h-5v1h-1v-1h-1v2h-1v-2h-2v1h-2v1h-1v-2h-1v1h-1v-1h-1v1h-5v-1h-1v1h-1v-1h-9v1h-1v-1h-2v1h-1v-1h-1v1h-1v-1h-2v1h-1v-1h-2v2h-1v-1h-1v-1h-3v1h-1v-1h-1v1h-1v-1h-4v1h-1v-1h-5v1h-1v-1h-5v1h-1v-1h-5v1h-1v-1h-1v1h-2v-1h-2v1h-1v-1h-4v1h-1v-1h-4v1h-1v-1h-1v1h-1v-1h-1v1h-1v-1h-6v1h-2v-1h-7v1h-1v-1h-3v1h-1v-1h-4v1h-2v-1h-3v1h-1v-1h-2v1h-1v-1h-3v1h-1v1h-1v-2h-4v1h-1v-1h-2v1h-1v1h-1v-1h-1v-1h-6v1h-1v-1h-1v1h-1v-1h-2v1h-1v-1h-1v1h-1v-1h-7v1h-1v-1h-3v1h-1v-1h-2v1h-3v1h-1v-2h-1v1h-1v-1h-1v1h-2v-1h-1v1h-1v-1h-2v1h-1v-1h-1v1h-3v-1h-4v2h-1v-1h-2v-1h-4v1h-1v-1h-1v1h-5v-1h-3v1h-1v-1h-16v2h-1v-2h-2v1h-1v-1h-1v1h-1v-1h-4v1h-1v-1h-2v1h-1v-1h-6v1h-1v-1h-7v1h-1v-1h-3v1h-3v-1h-1v1h-1v-1h-4v1h-1v-1h-2v1h-1v-1h-10v1h-1v-1h-2v2h-1v-2h-1v1h-1v-1h-4v1h-1v-1h-4v1h-1v-1h-2v1h-2v-1h-12v1h-1v-1h-4v2h-1v-1h-1v-1h-8v1h-1v-1h-3v1h-2v-1h-2v1h-1v-1h-4v1h-1v-1h-2v1h-1v-1h-2v1h-1v-1h-6v1h-2v-1h-3v1h-1v-1h-1v1h-1v-1h-3v1h-1v-1h-1v1h-4v-1h-3v1h-1v-1h-3v1h-1v-1h-4v1h-1v-1h-2v2h-1v-2h-2v1h-2v-1h-2v1h-2v-1h-1v1h-1v-1h-3v1h-1v-1h-2v1h-1v-1h-1v1h-1v-1h-6v1h-2v-1h-1v1h-1v-1h-9v1h-1v-1h-3v1h-1v-1h-2v1h-1v-1h-5v1h-1v-1h-2v1h-3v-1h-2v1h-2v-1h-3v1h-1v-1h-5v1h-1v-1h-3v1h-1v-1h-1v1h-1v-1h-1v1h-1v-1h-1v1h-4v-1h-2v1h-1v-1h-4v1h-1v-1h-3v1h-1v-1h-1v1h-5v-1h-14v1h-1v-1h-3v2h-1v-2h-1v1h-1v-1h-10v1h-1v-1h-6v2h-1v-2h-2v1h-1v-1h-5v1h-1v-1h-7v2h-1v-2h-4v1h-1v-1h-17v1h-1z"/><path d="M88 749h1v1h1v-1h1v1h2v-1h1v1h2v-1h1v1h1v-1h1v1h1v-1h1v1h12v-1h1v1h1v-1h1v1h3v-1h1v1h1v-1h1v1h1v-1h1v1h1v-1h1v1h1v-1h2v1h1v-1h2v1h1v-1h2v1h1v-1h1v1h2v-1h1v1h1v-1h1v1h4v-1h1v1h1v-1h1v1h2v-1h1v1h3v-1h1v1h1v-1h1v1h2v-1h1v1h2v-1h1v1h1v-1h1v1h3v-1h1v1h1v-1h1v1h1v-1h1v1h1v-1h1v1h4v-1h1v1h2v-1h1v1h4v-1h1v1h1v-1h2v1h2v-1h1v1h1v-1h2v1h2v-1h1v1h4v-1h4v1h2v-1h1v1h6v-1h1v1h2v-2h1v2h1v-1h2v1h1v-1h1v1h2v-1h1v1h1v-1h1v1h2v-1h1v1h1v-1h1v1h2v-1h1v1h1v-1h1v1h4v-1h1v1h1v-1h1v1h1v-1h2v1h8v-1h1v1h1v-1h2v1h1v-1h2v1h2v-1h1v1h6v-1h1v1h4v-1h1v1h2v-1h1v1h2v-1h1v1h3v-1h1v1h1v-1h1v1h1v-1h2v1h1v-1h2v1h2v-1h1v1h1v-1h1v1h3v-1h1v1h2v-1h4v1h2v-1h1v1h3v-1h1v1h1v-1h1v1h3v-1h1v1h2v-1h1v1h7v-1h1v1h1v-1h1v1h2v-1h1v1h3v-1h1v1h5v-1h1v1h2v-1h1v1h3v-1h1v1h2v-1h2v1h2v-1h1v1h3v-1h1v1h2v-1h1v1h1v-1h2v1h1v-1h1v1h3v-1h1v1h1v-1h2v1h1v-1h2v1h7v-1h1v1h3v-1h1v1h2v-2h1v1h1v1h3v-1h1v1h5v-1h1v1h2v-1h1v1h1v-1h3v1h3v-1h4v1h3v-1h1v1h2v-1h1v1h1v-1h1v1h1v-1h1v-1h1v1h1v1h1v-1h2v1h2v-1h2v1h1v-1h2v1h2v-1h2v1h1v-1h1v1h2v-1h1v1h2v-1h1v1h2v-1h1v1h3v-1h2v1h1v-1h1v1h1v-1h1v1h1v-1h1v1h1v-1h1v1h1v-1h1v1h1v-1h1v1h1v-1h1v1h2v-1h1v1h2v-1h1v1h1v-1h1v1h2v-1h1v1h2v-1h1v1h1v-1h1v1h2v-1h1v1h1v-1h2v1h3v-2h1v2h1v-1h1v1h1v-1h1v1h1v-1h1v1h3v-1h1v1h1v-1h1v1h5v-1h1v1h2v-1h2v1h2v-1h1v1h4v-1h1v1h1v-1h1v1h3v-1h1v1h3v-1h1v1h2v-1h1v1h3v-1h1v1h2v-1h2v1h2v-1h1v1h1v-1h1v1h1v-2h1v2h2v-1h1v1h9v-2h1v2h2v-1h2v1h1v-1h1v1h1v-1h2v1h7v-1h2v1h1v-1h1v1h2v-1h1v1h1v-1h2v1h5v-1h1v1h1v-1h1v1h3v-2h1v1h1v1h2v-1h1v1h1v-1h1v1h7v-1h1v1h1v-1h1v1h1v-1h2v1h6v-1h1v1h3v-1h1v1h1v-1h1v-1h1v1h2v1h3v-1h1v1h1v-1h3v1h1v-1h1v1h4v-2h1v1h1v1h3v-1h1v1h2v-1h1v1h1v-1h1v1h4v-1h1v1h1v-1h1v1h1v-1h1v1h2v-1h1v1h3v-1h1v1h1v-1h1v1h4v-2h1v2h1v-1h2v1h10v-1h1v1h1v-1h2v1h1v-1h1v1h4v-1h1v1h2v-1h1v1h5v-1h1v1h1v-1h1v1h3v-1h1v1h1v-1h1v1h2v-1h1v1h1v-1h1v1h1v-1h1v1h1v-1h1v1h3v-2h1v2h2v-1h1v1h1v-1h1v1h3v-1h2v1h2v-1h2v1h3v-1h1v1h2v-1h1v1h1v-1h1v1h3v-1h1v1h1v-1h1v1h3v-1h1v1h1v-1h2v1h3v-1h1v1h1v-1h1v1h2v-1h1v1h7v-1h1v1h2v-1h1v1h2v-1h1v1h2v-1h1v1h2v-1h2v1h2v-1h1v1h1v-1h1v1h1v-1h1v1h3v-1h1v1h2v-1h2v1h4v-1h1v1h3v-1h1v1h3v-1h1v1h1v-1h3v1h1v-1h1v1h1v-2h1v1h2v1h1v-1h1v1h2v-1h1v1h1v-1h1v1h2v-1h1v1h3v-1h1v1h1v-1h1v1h2v-1h1v1h4v-1h2v1h1v-1h2v-1h1v2h5v-1h1v1h2v-1h1v1h2v-1h1v-1h1v2h2v-1h1v1h2v-1h2v1h1v-1h2v1h4v-2h1v1h1v1h1v-1h1v1h1v-1h1v1h1v-1h1v1h3v-2h1v2h1v-1h2v1h1v-2h1v2h1v-1h2v1h1v-1h1v1h3v-2h1v2h1v-1h1v1h2v-1h1v1h5v-1h1v1h1v-1h3v1h1v-1h1v1h1v-1h1v1h1v-1h1v1h1v-1h1v1h1v-1h2v1h2v-1h1v1h4v-1h4v1h1v-1h1v1h3v-1h1v1h2v-1h2v1h1v-1h1v1h1v-1h1v1h2v-1h1v1h3v-1h1v1h1v-1h2v1h1v-1h2v1h1v-1h1v1h1v-1h1v1h3v-1h1v1h1v-1h3v1h2v-1h1v1h1v-1h3v1h2v-1h1v1h5v-1h1v1h1v-1h1v1h1v-1h1v1h1v-1h1v1h3v-1h1v1h1v-1h1v1h2v-1h1v1h5v-1h2v1h2v-1h1v1h2v-1h1v1h7v-1h2v1h3v-1h1v1h3v-1h1v1h1v-1h2v1h1v-1h1v1h1v-1h1v1h2v-1h1v1h1v-1h1v1h1v-1h1v1h4v-1h1v1h1v-1h1v1h1v-1h2v1h2v-1h1v1h1v-1h1v1h1v-1h1v1h1v-2h1v2h5v-1h2v1h1v-1h1v1h1v-1h1v1h4v-1h2v1h2v-1h1v1h1v-1h2v1h1v-1h1v1h1v-1h2v1h3v-1h1v1h1v-1h1v1h1v-1h1v1h1v-1h1v1h6v-1h1v1h1v-1h1v1h1v-2h1v2h1v-1h1v1h4v-1h1v1h1v-1h1v1h1v-1h2v1h2v-1h1v1h4v-1h1v1h1v-1h2v1h2v-1h1v1h4v-1h3v1h4v-1h1v1h1v-1h2v1h2v-1h1v1h1v-1h1v1h1v-1h2v4h-1v1h-1v-1h-2v1h-2v-1h-1v1h-1v-1h-2v1h-2v-1h-1v1h-1v-1h-1v1h-2v-1h-4v1h-1v-1h-2v1h-1v-1h-7v1h-1v-1h-7v1h-1v-1h-6v2h-1v-2h-1v1h-1v-1h-1v1h-1v-1h-1v1h-1v-1h-1v1h-1v-1h-1v1h-2v-1h-4v1h-3v-1h-1v1h-2v-1h-1v2h-1v-1h-1v-1h-1v1h-2v-1h-2v1h-1v-1h-1v1h-1v-1h-1v1h-2v-1h-1v1h-2v-1h-2v1h-1v-1h-3v1h-2v-1h-1v1h-2v-1h-2v1h-1v-1h-2v1h-1v-1h-2v1h-1v-1h-3v1h-1v-1h-1v1h-1v-1h-1v1h-1v-1h-5v1h-1v-1h-1v1h-1v-1h-1v1h-1v-1h-1v1h-1v-1h-5v1h-1v-1h-1v1h-1v-1h-3v1h-1v-1h-5v1h-1v-1h-1v1h-1v-1h-2v1h-1v-1h-1v1h-1v-1h-1v1h-1v-1h-1v1h-1v-1h-1v1h-1v-1h-4v1h-1v-1h-6v1h-1v-1h-2v1h-1v-1h-1v1h-2v-1h-1v1h-1v-1h-1v1h-1v-1h-1v1h-2v-1h-2v1h-2v-1h-2v1h-2v-1h-2v1h-1v-1h-2v1h-1v-1h-4v1h-1v-1h-1v1h-2v-1h-3v2h-1v-2h-1v1h-1v-1h-2v1h-2v-1h-1v1h-1v-1h-2v1h-1v-1h-3v1h-2v-1h-2v1h-1v-1h-3v1h-1v-1h-1v1h-1v-1h-1v1h-1v-1h-2v1h-1v-1h-2v1h-1v-1h-1v1h-1v-1h-1v1h-1v-1h-1v1h-1v-1h-5v1h-1v-1h-1v1h-2v-1h-1v1h-2v-1h-1v1h-1v-1h-1v1h-1v-1h-1v1h-2v-1h-2v1h-1v-1h-2v1h-1v-1h-2v1h-1v-1h-2v1h-3v-1h-8v1h-1v-1h-3v1h-1v-1h-3v1h-1v-1h-3v1h-2v-1h-4v1h-2v-1h-7v1h-1v-1h-1v1h-3v-1h-1v1h-1v-1h-1v1h-1v-1h-8v1h-1v-1h-1v1h-4v-1h-3v1h-1v-1h-3v1h-2v-1h-2v1h-1v-1h-2v1h-1v-1h-2v1h-1v-1h-2v1h-1v-1h-1v1h-1v-1h-1v1h-1v-1h-1v1h-1v-1h-1v1h-1v-1h-1v1h-1v-1h-3v1h-1v-1h-2v1h-2v-1h-3v1h-1v-1h-4v1h-1v-1h-1v1h-2v-1h-3v1h-2v-1h-1v1h-1v-1h-3v1h-1v-1h-1v1h-1v-1h-1v1h-2v-1h-1v1h-3v-1h-2v1h-1v-1h-1v1h-1v-1h-4v2h-1v-2h-3v1h-1v-1h-2v1h-2v-1h-2v2h-1v-2h-6v1h-1v-1h-2v1h-1v-1h-3v1h-1v-1h-1v1h-2v-1h-1v1h-1v-1h-3v1h-1v-1h-1v1h-1v-1h-3v1h-1v-1h-3v1h-1v-1h-2v1h-1v-1h-1v1h-1v-1h-2v1h-1v-1h-2v1h-1v-1h-1v1h-1v-1h-1v1h-1v-1h-2v1h-1v-1h-1v1h-1v-1h-1v1h-1v-1h-1v1h-1v-1h-3v1h-1v-1h-1v1h-1v-1h-2v1h-1v-1h-1v1h-1v-1h-1v1h-1v-1h-2v1h-1v-1h-1v1h-3v-1h-1v1h-1v-1h-5v1h-1v-1h-1v1h-1v-1h-1v1h-1v-1h-2v1h-2v-1h-2v1h-1v-1h-1v1h-1v-1h-3v1h-1v-1h-5v1h-1v-1h-1v1h-1v-1h-3v1h-1v-1h-4v1h-1v-1h-1v1h-1v-1h-2v1h-2v-1h-1v1h-1v-1h-1v1h-1v-1h-2v1h-1v-1h-1v1h-1v-1h-1v1h-1v-1h-1v1h-1v-1h-1v1h-1v-1h-4v1h-1v-1h-1v1h-1v-1h-5v1h-1v-1h-1v1h-1v-1h-1v1h-1v-1h-1v1h-1v-1h-3v1h-2v-1h-1v1h-1v-1h-1v1h-1v-1h-1v1h-1v-1h-5v1h-1v-1h-1v1h-1v-1h-1v1h-1v-1h-3v1h-1v-1h-5v1h-1v-1h-1v1h-1v-1h-1v1h-1v-1h-1v1h-1v-1h-2v2h-1v-2h-2v1h-1v-1h-2v1h-1v-1h-1v1h-1v-1h-4v1h-3v-1h-3v1h-1v-1h-3v1h-2v-1h-4v1h-1v-1h-1v1h-1v-1h-2v1h-1v-1h-2v1h-1v-1h-1v1h-1v-1h-1v1h-1v-1h-1v1h-1v-1h-1v1h-1v-1h-1v1h-2v-1h-2v1h-2v-1h-1v1h-1v-1h-1v1h-1v-1h-4v1h-1v-1h-2v1h-3v-1h-1v1h-1v-1h-1v1h-1v-1h-6v1h-1v-1h-1v1h-1v-1h-1v1h-1v-1h-1v1h-1v-1h-5v1h-1v-1h-2v1h-2v-1h-1v1h-1v-1h-2v1h-1v-1h-2v1h-2v-1h-2v1h-2v-1h-1v1h-1v-1h-1v1h-1v-1h-5v2h-1v-1h-1v-1h-1v1h-1v-1h-5v1h-1v-1h-3v1h-3v-1h-1v1h-2v-1h-1v1h-1v-1h-2v1h-1v-1h-2v1h-1v-1h-1v1h-1v-1h-1v1h-1v-1h-1v1h-1v-1h-2v1h-2v-1h-1v2h-1v-2h-1v1h-2v-1h-2v1h-1v-1h-1v1h-1v-1h-1v1h-1v-1h-5v1h-3v-1h-1v1h-2v-1h-2v1h-2v-1h-1v1h-1v-1h-7v1h-3v-1h-1v1h-1v-1h-2v1h-3v-1h-4v1h-1v-1h-2v1h-1v-1h-1v1h-1v1h-1v-2h-1v1h-1v-1h-1v1h-1v-1h-3v1h-1v-1h-2v1h-1v-1h-1v1h-1v-1h-1v1h-3v-1h-1v1h-1v-1h-1v1h-1v-1h-1v1h-1v-1h-1v1h-1v-1h-2v1h-1v-1h-1v1h-2v-1h-1v1h-2v-1h-1v1h-1v-1h-3v1h-1v-1h-1v1h-1v-1h-1v1h-2v-1h-2v1h-1v-1h-1v2h-1v-2h-1v1h-1v-1h-5v1h-1v-1h-1v1h-2v-1h-2v1h-1v-1h-1v1h-1v-1h-2v2h-1v-2h-1v1h-1v-1h-4v1h-1v-1h-1v1h-1v-1h-1v1h-1v-1h-1v1h-1v-1h-1v1h-1v-1h-2v1h-1v-1h-5v1h-1v-1h-1v1h-1v-1h-1v1h-1v-1h-1v1h-1v-1h-1v1h-2v-1h-1v1h-1v-1h-1v1h-3v-1h-2v1h-1v-1h-1v1h-1v-1h-3v1h-3v-1h-1v1h-1v-1h-4v1h-2v1h-1v-2h-1v1h-1v-1h-1v1h-1v-1h-4v1h-1v-1h-1v2h-1v-1h-1v-1h-4v1h-2v-1h-1v1h-2v-1h-2v1h-1v1h-1v-2h-1v1h-2v-1h-5v1h-1v-1h-1v1h-1v-1h-2v1h-1v-1h-1v1h-2v-1h-2v1h-1v-1h-3v1h-1v-1h-1v1h-1v-1h-2v1h-1v-1h-3v1h-1v-1h-2v1h-3v-1h-2v1h-1v-1h-5v1h-1v-1h-1v1h-1v-1h-3v1h-1v-1h-3v1h-1v-1h-2v1h-1v-1h-1v1h-3v-1h-2v2h-1v-2h-1v1h-1v-1h-3v1h-1v-1h-1v1h-1v-1h-1v1h-1v-1h-4v1h-2v-1h-1v1h-1v-1h-2v1h-2v-1h-2v1h-1v-1h-2v1h-1v1h-1v-2h-3v1h-2v-1h-1v1h-1v-1h-2v1h-1v-1h-1v1h-1v-1h-2v1h-1v-1h-1v1h-1v-1h-1v1h-1v-1h-2v1h-1v-1h-2v1h-1v-1h-2v1h-1v-1h-4v1h-2v-1h-1v1h-1v-1h-1v1h-1z"/><path d="M88 778h1v1h1v1h1v-1h1v1h1v-1h2v1h3v-2h1v2h3v-1h1v1h2v-1h1v1h1v-1h1v-1h1v2h1v-2h1v2h2v-1h1v1h5v-1h2v1h2v-2h1v1h2v1h4v-1h1v1h2v-2h1v2h4v-1h1v1h2v-1h1v-1h1v2h5v-1h1v1h1v-1h2v1h5v-1h1v1h6v-1h2v1h2v-1h1v1h2v-1h1v1h4v-1h1v1h5v-1h1v1h2v-1h1v1h2v-1h2v1h3v-1h1v1h5v-1h1v1h7v-1h1v1h3v-1h2v1h1v-1h2v1h3v-1h1v1h2v-1h2v1h2v-1h1v1h3v-1h1v1h1v-1h1v1h1v-1h1v1h2v-1h2v1h1v-1h1v1h2v-1h1v1h2v-1h2v1h1v-1h2v-2h1v1h1v2h1v-1h1v-1h2v-4h1v1h1v1h1v3h1v1h1v-5h1v2h1v3h2v-1h3v1h1v-4h1v2h1v2h1v-4h1v3h1v-1h1v-2h1v2h1v2h1v-1h1v-2h1v1h1v2h2v-1h1v-1h1v1h1v1h1v-3h1v1h2v-1h1v3h1v-2h1v2h3v-1h2v-1h1v2h1v-1h1v-1h1v2h1v-2h1v1h1v1h1v-1h1v1h1v-1h1v1h1v-2h1v2h1v-1h2v-1h1v2h1v-1h2v1h1v-1h2v1h1v-1h1v1h4v-2h1v1h6v1h3v-1h1v1h2v-1h2v1h1v-1h1v1h1v-1h3v1h5v-1h2v1h5v-1h2v1h1v-1h1v1h7v-1h1v1h4v-1h1v1h6v-1h1v1h1v-1h1v-1h1v2h6v-1h1v1h1v-1h1v1h3v-1h2v1h2v-1h2v1h4v-1h2v1h4v-1h1v1h1v-1h2v1h1v-1h1v1h2v-1h2v1h1v-2h1v2h2v-1h1v1h2v-1h1v1h2v-1h1v1h12v-1h1v1h4v-1h1v1h3v-1h1v1h1v-1h1v1h3v-2h1v2h2v-1h4v1h2v-1h1v1h2v-1h1v1h2v-1h1v1h2v-1h1v1h2v-1h1v1h9v-1h2v1h1v-1h1v1h4v-1h1v-1h1v2h1v-1h1v-1h1v2h1v-1h1v1h1v-2h1v2h2v-1h2v1h1v-1h1v1h3v-1h1v1h4v-1h1v1h5v-1h2v1h1v-1h2v1h2v-1h4v1h6v-2h1v1h1v1h1v-1h1v1h2v-1h1v1h4v-1h3v1h1v-1h2v1h3v-1h2v1h3v-1h1v1h10v-2h1v2h2v-1h1v1h2v-1h1v1h1v-1h1v1h2v-1h1v1h5v-1h2v1h2v-1h2v1h6v-1h1v1h1v-1h2v1h3v-1h1v1h2v-1h1v1h1v-1h1v1h2v-1h1v1h4v-1h1v1h1v-1h3v1h3v-1h1v1h1v-1h1v1h1v-1h1v-1h1v2h2v-1h1v1h1v-1h1v1h1v-1h1v1h3v-1h2v1h3v-1h1v1h3v-1h1v1h1v-1h1v1h2v-1h1v1h2v-1h2v1h2v-1h1v1h2v-1h2v1h1v-1h2v1h4v-1h1v1h2v-1h1v1h1v-1h1v1h3v-1h2v1h6v-1h1v1h3v-1h1v1h3v-1h1v1h5v-1h1v1h4v-1h1v1h3v-1h4v1h1v-1h1v1h3v-2h1v2h1v-1h1v1h7v-1h2v1h1v-1h1v1h4v-1h1v1h2v-1h2v1h1v-1h1v1h3v-1h1v1h8v-1h1v1h3v-2h1v2h9v-1h2v1h2v-1h1v1h1v-1h1v1h1v-1h2v-1h1v1h1v1h6v-1h1v1h1v-1h1v1h2v-1h1v1h4v-2h1v2h1v-1h1v1h2v-1h1v1h3v-1h6v1h7v-2h1v2h2v-1h1v1h1v-1h2v1h2v-1h1v1h10v-1h2v1h4v-1h1v1h2v-1h1v1h2v-1h1v1h2v-2h1v2h2v-1h1v1h1v-1h2v1h1v-1h6v1h1v-1h1v1h5v-1h1v1h2v-1h1v1h1v-1h1v1h2v-1h2v1h1v-1h2v1h4v-1h1v1h8v-1h1v1h3v-1h3v1h1v-1h2v1h2v-1h1v1h1v-1h1v1h2v-1h1v1h8v-1h2v1h5v-1h1v1h1v-1h1v1h1v-1h1v1h3v-1h1v1h1v-1h1v1h1v-1h1v1h3v-2h1v2h3v-1h1v1h1v-1h1v1h4v-1h1v1h3v-1h1v1h6v-1h2v1h1v-1h2v1h5v-1h2v1h2v-1h1v1h1v-1h1v1h1v-1h1v1h3v-1h3v1h2v-1h1v1h1v-1h1v1h2v-1h1v1h5v-1h3v1h1v-1h2v1h2v-1h2v1h4v-1h5v1h11v-1h1v1h1v-1h1v1h2v-1h1v1h1v-1h1v-1h1v2h5v-1h3v1h3v-1h1v1h1v-1h1v1h4v-1h1v1h7v-1h1v1h2v-2h1v2h6v-1h1v1h2v-1h1v1h1v-1h1v1h2v-1h1v1h1v-1h2v1h1v-1h1v1h4v-1h2v1h6v-1h1v1h2v-1h2v1h1v-1h3v1h4v-1h1v1h3v-2h1v2h7v-1h1v1h3v-1h3v1h1v-1h1v1h3v-1h3v1h2v-1h1v1h8v-1h1v1h1v-1h1v1h7v-1h1v1h1v-1h1v1h5v-1h1v1h2v-1h1v1h1v-1h1v1h2v-1h1v1h1v-1h1v5h-2v-1h-1v1h-1v-1h-1v1h-4v-1h-1v1h-2v-1h-1v1h-3v-1h-1v1h-3v-1h-1v1h-9v-1h-1v1h-1v-1h-1v1h-1v1h-1v-1h-11v-1h-1v1h-9v-1h-1v1h-7v1h-1v-1h-6v-1h-1v1h-1v-1h-1v1h-2v-1h-2v1h-6v-1h-1v1h-12v-1h-1v2h-1v-1h-6v-1h-1v1h-5v-1h-1v1h-2v-1h-2v1h-5v-1h-1v1h-1v-1h-1v1h-2v1h-1v-1h-5v1h-1v-1h-6v-1h-1v1h-6v-1h-2v1h-3v1h-1v-1h-3v-1h-1v1h-3v-1h-1v1h-4v-1h-2v1h-6v-1h-1v1h-7v-1h-1v1h-6v-1h-1v1h-8v-1h-1v1h-1v-1h-3v1h-2v1h-1v-1h-4v-1h-1v1h-4v1h-1v-1h-7v-1h-1v1h-6v-1h-1v1h-11v-1h-1v1h-7v-1h-1v1h-1v-1h-1v1h-1v-1h-1v1h-2v-1h-1v1h-5v-1h-1v1h-3v-1h-1v1h-3v1h-1v-1h-1v-1h-1v1h-3v-1h-3v1h-1v1h-1v-1h-6v-1h-1v1h-18v-1h-2v1h-3v-1h-2v1h-9v-1h-1v1h-8v-1h-1v1h-2v-1h-1v1h-3v-1h-2v1h-3v-1h-1v1h-1v-1h-1v1h-4v-1h-1v1h-14v-1h-1v1h-17v-1h-1v1h-2v1h-2v-1h-3v-1h-1v1h-14v-1h-1v1h-7v1h-1v-1h-3v-1h-1v1h-6v-1h-1v1h-6v1h-1v-1h-18v-1h-1v1h-9v-1h-1v1h-3v-1h-2v1h-10v-1h-1v1h-9v-1h-1v1h-3v-1h-1v1h-3v-1h-1v1h-2v-1h-2v1h-2v-1h-1v1h-22v-1h-2v1h-4v-1h-1v1h-3v-1h-1v1h-7v-1h-1v1h-3v-1h-2v1h-3v-1h-1v1h-11v1h-1v-1h-2v-1h-3v1h-3v1h-1v-1h-4v-1h-1v1h-6v-1h-1v1h-5v-1h-2v1h-38v-1h-1v1h-3v-1h-1v1h-30v-1h-1v1h-5v-1h-1v1h-10v1h-1v-1h-1v-1h-1v1h-6v1h-1v-1h-4v-1h-1v1h-2v-1h-1v1h-15v-1h-1v1h-8v-1h-1v2h-1v-2h-1v1h-10v-1h-1v1h-4v1h-1v-1h-24v-1h-1v1h-2v-1h-1v1h-9v-1h-1v1h-1v1h-1v-1h-4v-1h-1v1h-4v-1h-1v1h-3v1h-1v-1h-8v1h-1v-1h-3v1h-1v-2h-1v1h-28v-1h-1v1h-4v-1h-1v1h-1v1h-1v-1h-1v-1h-1v1h-3v-1h-1v1h-4v-1h-2v1h-2v-1h-1v1h-6v-1h-1v1h-9v-1h-1v1h-3v-1h-1v1h-5v-1h-3v1h-4v1h-1v-1h-3v1h-1v-1h-2v1h-1v-1h-18v2h-2v-2h-1v1h-1v-1h-3v2h-2v-2h-4v1h-2v-1h-1v3h-1v-3h-1v2h-1v-2h-2v1h-1v-1h-2v1h-2v-1h-4v1h-1v3h-1v-3h-1v-1h-1v2h-1v-2h-1v1h-2v-1h-3v3h-1v-3h-7v-1h-1v1h-5v-1h-1v1h-6v-1h-1v1h-3v-1h-1v1h-1v-1h-1v1h-3v-1h-1v1h-1v-1h-1v1h-22v-1h-2v1h-6v1h-1v-1h-11v-1h-4v1h-7v-1h-1v1h-18v-1h-1v1h-8v-1h-1v1h-1v1h-1v-1h-2v-1h-2v1h-3v-1h-1v1h-7v1h-1v-2h-1v1h-10v-1h-1v1h-4v1h-1v-1h-6v-1h-1v1h-3v-1h-1v1h-1z"/><path d="M88 810h1v-1h1v1h8v-2h1v2h3v-1h1v1h2v-1h1v1h1v-2h1v1h1v1h2v-1h1v1h2v-1h1v1h2v-1h3v1h1v-1h1v1h2v-1h2v1h2v-1h1v1h1v-1h2v1h3v-1h1v1h2v-1h1v1h5v-1h2v1h1v-1h1v1h7v-1h1v1h1v-1h1v1h6v-1h1v1h2v-1h1v1h3v-2h1v1h1v1h2v-1h1v1h3v-1h1v-1h1v2h2v-1h1v1h2v-2h1v1h1v1h2v-1h1v1h3v-1h2v1h2v-1h1v1h3v-1h1v1h4v-1h2v1h2v-2h1v2h3v-1h1v1h2v-1h1v1h5v-1h2v1h5v-1h1v1h4v-1h1v1h2v-1h1v1h2v-1h1v1h1v-1h1v1h1v-1h2v1h1v-2h1v1h1v1h13v-2h1v2h2v-1h1v1h4v-1h2v1h5v-1h1v1h1v-1h1v1h3v-1h1v1h7v-1h1v1h8v-1h1v1h2v-1h1v1h1v-1h2v1h3v-1h1v1h1v-1h1v1h1v-1h2v1h3v-1h1v1h1v-1h3v1h3v-1h1v1h2v-1h1v1h1v-1h1v1h1v-1h1v1h5v-1h2v-1h1v2h1v-1h2v1h2v-1h1v1h1v-2h1v1h2v1h2v-1h3v1h5v-1h1v1h1v-1h1v1h7v-1h1v1h7v-1h1v1h1v-2h1v2h6v-1h2v1h5v-1h1v1h1v-1h1v1h4v-1h3v1h1v-1h1v1h3v-2h1v1h1v1h3v-1h1v1h1v-1h1v1h13v-1h1v1h1v-1h1v1h2v-1h1v1h4v-1h3v1h6v-1h1v1h4v-1h2v1h2v-2h1v2h1v-1h1v1h3v-2h1v2h3v-1h1v1h1v-1h1v1h1v-1h1v1h5v-1h2v1h1v-1h1v1h1v-1h2v1h1v-1h1v-1h1v2h5v-1h2v1h2v-1h3v1h3v-2h1v2h4v-1h2v1h1v-1h1v1h1v-1h1v1h1v-1h1v1h1v-1h1v1h1v-1h1v1h3v-1h1v1h1v-1h1v1h1v-1h1v1h1v-1h1v1h8v-1h2v1h2v-1h1v1h1v-1h1v1h1v-1h1v1h7v-1h1v1h1v-1h2v1h1v-1h3v1h6v-1h2v1h2v-1h3v1h2v-1h2v1h2v-1h1v1h3v-1h2v1h1v-1h2v1h11v-1h1v1h7v-1h1v1h1v-1h1v1h1v-1h1v1h2v-1h1v1h3v-1h1v1h1v-1h1v1h2v-1h1v1h2v-1h1v1h2v-1h1v1h6v-1h1v1h4v-1h2v1h1v-1h1v1h1v-1h1v1h3v-1h1v1h9v-1h1v1h1v-1h2v1h2v-1h1v1h1v-1h1v1h3v-1h1v1h10v-1h2v1h4v-1h1v1h2v-1h2v1h2v-1h5v1h1v-2h1v2h1v-2h1v2h1v-1h2v1h2v-1h1v1h1v-1h1v1h1v-1h1v1h7v-1h1v1h1v-1h1v1h4v-1h1v1h2v-1h1v1h1v-1h1v1h3v-1h2v1h10v-1h3v1h1v-1h1v1h6v-1h1v1h1v-1h1v1h6v-1h1v1h1v-1h1v1h1v-1h1v1h3v-1h3v1h10v-1h1v-1h1v1h1v1h2v-1h1v1h2v-1h1v1h2v-1h1v-1h1v2h2v-2h1v2h4v-1h2v1h7v-1h2v1h4v-1h1v1h1v-1h2v-1h1v1h1v1h1v-1h1v1h7v-1h2v1h1v-2h2v2h2v-1h1v1h2v-1h1v1h1v-1h1v1h4v-1h1v1h5v-1h1v1h1v-1h2v1h4v-1h1v1h4v-1h1v1h2v-1h1v1h1v-1h1v1h1v-1h1v1h5v-1h1v1h4v-1h1v1h4v-2h1v2h1v-1h1v1h3v-1h2v1h1v-1h2v1h2v-1h2v1h1v-2h1v2h1v-1h2v1h1v-1h2v1h2v-1h1v1h3v-1h1v1h2v-1h1v1h2v-1h2v1h1v-1h1v1h2v-1h1v1h8v-1h1v1h3v-1h1v1h5v-2h1v2h12v-1h1v1h4v-1h1v-1h1v2h2v-1h1v1h1v-1h2v1h1v-1h2v1h1v-1h2v1h1v-1h1v1h4v-1h1v1h2v-1h2v1h2v-1h1v1h1v-1h1v1h4v-1h1v1h6v-1h2v1h3v-2h1v2h14v-1h1v1h10v-1h1v1h2v-1h3v1h1v-1h1v1h1v-1h1v1h2v-1h1v1h1v-1h1v1h1v-1h1v1h1v-1h1v1h5v-1h1v1h2v-1h1v1h3v-1h1v1h2v-1h1v1h2v-1h1v1h2v-2h1v2h2v-1h1v1h9v-1h1v1h1v-1h1v1h4v-1h1v1h7v-1h1v1h4v-1h1v1h1v-1h1v1h1v-1h1v1h4v-1h2v1h1v-1h1v1h3v-1h1v1h1v-1h1v1h2v-1h1v1h3v-1h1v1h4v-1h1v1h4v-1h1v1h1v-1h1v1h1v-1h3v1h2v-1h2v1h4v-1h1v1h1v-1h1v1h3v-1h2v1h2v-1h1v1h4v-1h3v1h1v-1h1v1h4v-1h1v1h1v-1h1v1h1v-1h1v1h4v4h-8v-1h-1v2h-1v-1h-14v1h-2v-1h-3v-1h-1v1h-4v-1h-1v1h-10v-1h-1v1h-19v-1h-3v1h-4v1h-1v-1h-10v-1h-1v1h-8v1h-1v-1h-5v-1h-1v1h-7v-1h-1v1h-2v-1h-1v1h-13v-1h-1v1h-11v-1h-1v1h-5v-1h-1v1h-3v-1h-1v1h-3v1h-1v-1h-6v-1h-1v2h-1v-1h-8v-1h-1v1h-3v-1h-1v1h-17v-1h-2v1h-9v-1h-1v1h-4v-1h-2v1h-4v-1h-1v1h-3v1h-1v-1h-5v-1h-1v1h-1v-1h-1v1h-2v-1h-1v1h-2v-1h-1v1h-2v1h-1v-1h-5v1h-1v-1h-5v1h-1v-1h-5v-1h-1v1h-19v1h-1v-1h-1v-1h-1v2h-1v-1h-2v-1h-1v1h-15v-1h-2v1h-9v-1h-1v1h-3v-1h-1v1h-10v-1h-1v1h-20v1h-1v-1h-8v-1h-1v1h-8v-1h-1v1h-8v-1h-1v1h-10v1h-1v-1h-4v-1h-1v1h-5v-1h-1v1h-1v-1h-3v1h-19v-1h-1v1h-5v-1h-1v1h-1v-1h-1v1h-4v1h-1v-1h-4v-1h-2v1h-4v1h-1v-1h-3v-1h-1v1h-3v-1h-1v1h-1v-1h-2v1h-3v1h-1v-1h-5v-1h-1v1h-1v-1h-1v1h-3v-1h-1v1h-12v-1h-1v1h-6v-1h-1v1h-2v-1h-1v1h-5v-1h-1v1h-1v-1h-1v1h-7v-1h-1v1h-16v-1h-1v1h-1v1h-1v-1h-4v-1h-1v1h-2v1h-1v-1h-11v-1h-1v1h-6v-1h-1v1h-7v-1h-1v1h-3v-1h-1v1h-2v-1h-1v1h-1v-1h-1v1h-3v-1h-1v1h-1v-1h-1v1h-10v-1h-1v1h-1v-1h-1v1h-4v-1h-2v1h-2v-1h-2v1h-1v1h-1v-1h-1v-1h-3v1h-17v-1h-2v1h-4v-1h-1v1h-15v-1h-1v1h-21v-1h-1v2h-1v-1h-6v-1h-1v1h-3v-1h-1v1h-12v-1h-1v1h-4v-1h-2v1h-6v-1h-2v1h-4v-1h-2v1h-4v-1h-2v1h-1v-1h-1v1h-3v-1h-1v1h-8v-1h-2v1h-2v1h-1v-1h-15v1h-1v-1h-15v-1h-1v1h-2v-1h-1v1h-2v1h-1v-2h-2v1h-2v-1h-1v1h-17v-1h-1v1h-1v-1h-1v1h-2v-1h-1v1h-10v-1h-1v1h-4v-1h-1v1h-8v1h-1v-1h-5v-1h-1v1h-11v-1h-1v1h-8v-1h-3v1h-5v1h-1v-1h-1v-1h-2v1h-2v-1h-3v1h-7v-1h-2v2h-1v-1h-1v-1h-1v1h-22v-1h-1v1h-7v-1h-1v1h-1v1h-1v-1h-3v-1h-1v1h-10v1h-1v-2h-1v1h-5v-1h-1v1h-9v-1h-2v1h-1v-1h-1v1h-15v-1h-1v1h-6v-1h-1v1h-11v-1h-1v1h-3v-1h-1v1h-1v-1h-1v1h-7v-1h-2v1h-2v1h-1v-2h-2v1h-2v-1h-2v1h-7v1h-1v-1h-2v-1h-2v1h-1v1h-1v-1h-8v-1h-1v1h-6v-1h-1v1h-4v-1h-1v1h-4v-1h-1v1h-3v-1h-2v1h-1v-1h-1v1h-16v-1h-3v1h-15v-1h-1v1h-2v-1h-4v1h-6v-1h-3v1h-10v-1h-1v1h-7v-1h-1v1h-3v-1h-1z"/><path d="M88 840h1v1h3v-1h4v1h1v-1h5v1h1v-1h10v1h1v-1h5v1h1v-1h3v-1h1v1h14v1h3v-1h5v1h1v-1h6v1h1v-1h3v1h1v-1h3v1h1v-1h1v1h2v-1h1v1h2v-1h2v1h1v-1h13v-1h1v1h1v-1h1v1h17v1h1v-1h7v1h1v-1h8v1h1v-1h8v1h2v-1h5v1h1v-1h34v-1h1v1h6v1h1v-1h4v1h1v-1h6v1h1v-1h5v1h3v-1h5v1h1v-1h12v1h2v-1h6v1h1v-1h1v1h1v-1h2v1h1v-1h5v1h1v-1h6v1h1v-1h15v1h1v-1h2v1h1v-1h2v-1h1v1h4v-1h1v1h4v1h3v-1h5v1h1v-1h4v1h1v-1h19v1h1v-1h11v1h1v-1h2v1h2v-1h7v1h1v-1h1v1h1v-2h1v2h1v-1h5v1h1v-1h16v1h2v-1h32v1h1v-1h1v1h3v-1h1v1h1v-1h2v1h1v-1h4v1h1v-1h2v1h2v-1h15v1h1v-1h11v1h2v-1h4v1h1v-1h11v1h1v-1h7v1h1v-1h2v1h1v-1h8v1h1v-1h3v-1h1v1h7v1h1v-1h5v1h1v-1h2v-1h1v1h2v1h1v-1h4v1h3v-1h4v-1h1v1h10v1h1v-1h2v1h1v-1h1v1h1v-1h4v1h2v-1h1v1h1v-1h14v1h1v-1h4v-1h1v1h2v1h1v-1h2v1h2v-1h16v-1h1v1h8v1h1v-1h8v1h2v-1h4v1h2v-1h11v-2h1v2h14v1h1v-1h8v1h1v-1h7v1h1v-1h3v1h1v-1h1v1h1v-1h15v1h1v-1h5v1h1v-1h8v-1h2v1h10v1h1v-1h3v-1h1v2h1v-1h4v1h1v-1h5v1h1v-1h4v1h4v-2h1v1h6v-1h1v1h3v-1h1v2h1v-1h7v1h2v-1h3v1h1v-1h2v1h1v-1h6v1h1v-1h14v1h1v-1h1v1h1v-1h3v1h1v-1h2v1h2v-1h5v1h3v-1h5v-1h1v1h1v-1h1v1h3v1h1v-1h3v1h1v-1h3v1h1v-1h3v1h1v-1h20v1h1v-1h5v-1h1v1h2v1h1v-1h5v1h3v-1h29v1h1v-1h1v-1h1v1h3v1h1v-1h3v1h1v-1h3v1h2v-1h1v1h1v-1h4v1h1v-1h27v1h1v-1h3v1h1v-1h8v-1h1v1h9v1h2v-1h5v1h1v-2h1v1h10v1h1v-1h2v1h1v-1h1v1h2v-1h2v1h1v-1h13v1h2v-1h6v1h1v-1h8v1h4v-1h2v1h3v-1h8v1h2v-1h24v1h1v-1h14v1h1v-1h2v1h2v-1h1v1h1v-2h1v1h4v1h1v-1h7v1h1v-1h4v1h2v-1h4v-1h1v1h5v1h1v3h-1v1h-4v-1h-1v1h-1v-1h-1v1h-3v1h-1v-2h-1v1h-1v-1h-2v1h-1v1h-1v-2h-4v1h-1v-1h-1v1h-1v-1h-1v1h-1v-1h-1v1h-3v-1h-1v1h-5v-1h-1v1h-3v-1h-1v1h-1v-1h-1v1h-3v-1h-1v1h-4v-1h-3v1h-4v-1h-1v2h-1v-1h-1v-1h-1v1h-2v-1h-1v1h-1v-1h-1v1h-1v-1h-2v1h-2v-1h-2v1h-2v-1h-2v1h-3v-1h-1v1h-1v-1h-1v1h-1v-1h-1v1h-1v-1h-2v1h-1v-1h-1v1h-2v-1h-1v1h-2v-1h-2v1h-3v-1h-1v1h-1v-1h-1v1h-5v-1h-1v1h-1v-1h-1v1h-2v-1h-1v1h-5v-1h-1v1h-5v-1h-1v1h-6v-1h-1v2h-1v-2h-2v1h-3v-1h-1v1h-2v-1h-3v1h-1v-1h-1v1h-2v-1h-2v1h-1v-1h-1v1h-2v-1h-1v1h-2v-1h-1v1h-3v1h-1v-1h-1v-1h-1v1h-1v-1h-1v1h-2v-1h-1v1h-2v-1h-1v1h-1v-1h-1v1h-1v-1h-1v2h-1v-2h-2v1h-2v-1h-1v1h-1v-1h-1v1h-2v-1h-1v1h-1v-1h-1v1h-5v-1h-1v1h-3v-1h-1v1h-1v-1h-2v1h-3v-1h-1v1h-1v-1h-1v1h-6v-1h-1v1h-1v-1h-2v1h-1v-1h-1v1h-3v-1h-1v1h-2v-1h-1v1h-1v-1h-1v1h-4v1h-1v-1h-2v-1h-1v1h-3v-1h-3v1h-2v-1h-1v1h-3v-1h-2v1h-1v-1h-1v1h-1v-1h-1v1h-1v-1h-1v1h-1v-1h-2v1h-6v-1h-3v1h-5v-1h-1v1h-2v-1h-2v1h-1v-1h-1v1h-3v-1h-1v1h-2v-1h-1v2h-1v-2h-1v2h-2v-1h-1v-1h-3v1h-4v-1h-1v1h-2v-1h-1v1h-4v2h-1v-2h-1v1h-1v-1h-1v-1h-1v1h-2v-1h-1v1h-2v-1h-1v1h-1v-1h-1v1h-1v-1h-1v1h-1v-1h-3v1h-3v-1h-1v1h-1v-1h-1v1h-1v-1h-1v1h-2v-1h-2v1h-7v-1h-1v1h-4v-1h-1v1h-1v-1h-1v1h-3v-1h-1v1h-1v-1h-2v1h-1v-1h-1v1h-2v-1h-1v1h-1v-1h-1v1h-3v-1h-1v1h-3v-1h-2v1h-2v1h-1v-1h-1v-1h-1v1h-2v-1h-2v1h-1v-1h-1v1h-1v-1h-4v1h-1v-1h-2v1h-1v-1h-1v1h-1v-1h-1v1h-5v-1h-1v1h-2v-1h-3v1h-2v-1h-1v1h-1v-1h-1v1h-1v-1h-1v1h-4v-1h-1v1h-3v-1h-1v1h-1v-1h-1v1h-1v-1h-2v1h-1v-1h-2v1h-2v-1h-1v1h-2v1h-1v-1h-1v-1h-1v1h-4v-1h-1v2h-1v-1h-2v-1h-2v1h-2v-1h-1v2h-1v-2h-2v1h-3v-1h-1v1h-3v-1h-2v1h-1v-1h-1v1h-4v-1h-2v1h-5v-1h-1v1h-1v-1h-1v2h-3v-2h-2v1h-1v1h-1v-1h-2v-1h-3v1h-2v-1h-2v1h-1v-1h-1v1h-2v-1h-1v1h-1v-1h-1v1h-1v-1h-1v1h-2v-1h-1v1h-2v-1h-2v1h-3v-1h-1v1h-3v-1h-1v1h-3v1h-1v-1h-3v-1h-1v1h-1v-1h-2v1h-2v-1h-1v1h-2v-1h-1v1h-1v-1h-1v1h-1v-1h-1v1h-1v-1h-2v1h-1v-1h-2v1h-3v-1h-1v1h-1v-1h-1v1h-1v-1h-1v1h-3v-1h-1v1h-3v-1h-1v1h-3v-1h-1v1h-2v-1h-1v1h-1v-1h-1v1h-2v-1h-1v1h-2v-1h-2v1h-1v-1h-1v1h-1v-1h-1v1h-3v-1h-1v1h-1v-1h-1v1h-2v1h-1v-2h-1v1h-2v-1h-1v1h-2v-1h-1v1h-1v-1h-1v1h-1v-1h-1v1h-1v-1h-1v1h-1v-1h-1v1h-1v-1h-1v1h-3v-1h-1v1h-1v-1h-1v1h-2v-1h-2v1h-2v-1h-1v1h-1v-1h-1v1h-1v-1h-2v1h-1v-1h-3v1h-1v-1h-3v1h-1v-1h-2v1h-2v-1h-1v1h-3v-1h-1v2h-1v-1h-1v-1h-1v1h-1v-1h-1v1h-1v-1h-1v1h-2v-1h-1v1h-1v-1h-4v1h-2v-1h-3v1h-2v-1h-1v1h-1v1h-1v-1h-1v1h-1v-1h-1v-1h-1v1h-1v-1h-1v1h-1v-1h-2v1h-2v-1h-1v1h-1v-1h-1v1h-1v-1h-1v1h-1v-1h-1v1h-4v-1h-1v1h-1v-1h-1v1h-1v-1h-1v1h-1v-1h-1v1h-1v1h-1v-1h-1v-1h-1v1h-2v-1h-1v1h-3v1h-1v-2h-1v1h-1v-1h-2v1h-1v-1h-1v1h-1v-1h-1v1h-4v-1h-2v1h-1v-1h-1v1h-6v-1h-1v1h-1v-1h-1v1h-1v-1h-2v1h-2v-1h-3v1h-1v-1h-1v1h-2v-1h-1v1h-1v-1h-4v1h-2v-1h-1v1h-2v-1h-1v1h-1v-1h-1v1h-3v-1h-5v1h-1v-1h-2v1h-1v-1h-2v1h-2v-1h-1v1h-2v-1h-1v1h-1v-1h-1v2h-1v-1h-1v-1h-1v1h-1v-1h-1v1h-1v-1h-1v1h-1v-1h-1v1h-1v-1h-1v1h-1v1h-1v-1h-1v-1h-1v1h-1v-1h-3v1h-2v-1h-1v1h-1v1h-1v-1h-2v-1h-1v1h-1v-1h-1v2h-1v-1h-6v-1h-1v1h-2v-1h-1v1h-1v-1h-1v1h-2v-1h-2v1h-3v-1h-1v1h-1v-1h-2v1h-1v1h-1v-1h-1v-1h-1v1h-2v-1h-2v1h-6v-1h-2v1h-1v-1h-1v1h-1v-1h-1v1h-1v-1h-1v1h-1v-1h-3v1h-5v-1h-1v1h-1v-1h-3v1h-1v-1h-1v1h-1v-1h-1v1h-3v-1h-2v1h-1v-1h-1v1h-1v-1h-3v1h-1v-1h-1v1h-1v-1h-1v1h-2v-1h-2v1h-1v-1h-1v1h-1v-1h-1v1h-1v-1h-1v1h-1v-1h-3v1h-1v-1h-2v1h-1v-1h-1v1h-1v-1h-1v1h-5v-1h-1v1h-2v-1h-1v1h-1v-1h-2v1h-3v-1h-1v1h-2v-1h-1v1h-3v-1h-1v1h-1v-1h-1v1h-1v1h-1v-1h-2v-1h-1v2h-1v-1h-3v1h-1v-1h-1v-1h-1v1h-1v-1h-1v1h-1v-1h-1v1h-1v-1h-1v1h-10v-1h-1v1h-1v-1h-1v1h-2v-1h-1v1h-2v-1h-1v1h-1v-1h-1v1h-1v-1h-2v1h-2v-1h-1v1h-1v-1h-1v1h-1v-1h-1v1h-2v-1h-2v1h-2v-1h-1v1h-1v-1h-2v1h-2v-1h-2v1h-1v-1h-1v1h-1v-1h-2v1h-2v1h-1v-1h-1v-1h-1v1h-1v-1h-2v1h-3v-1h-2v1h-4v-1h-1v1h-1v-1h-1v1h-2v1h-1v-2h-2v1h-1v-1h-1v1h-2v-1h-1v1h-1v-1h-7v1h-1v-1h-1v1h-1v-1h-2v1h-2v-1h-2v1h-1v-1h-1v1h-3v-1h-1v1h-1v-1h-1v1h-1v-1h-1v1h-1v-1h-3v1h-1v-1h-1v1h-4v-1h-1v1h-1v-1h-2v1h-1v-1h-1v1h-1v-1h-1v1h-2v-1h-1v1h-1v-1h-2v1h-2v-1h-3v1h-1v-1h-1v1h-2v-1h-2v1h-2v-1h-1v1h-4v-1h-1v1h-1v1h-1v-1h-1v-1h-2v1h-1v-1h-2v1h-4v-1h-1z"/><path d="M88 869h1v1h5v1h2v-1h1v1h1v-1h4v1h1v-1h37v1h1v-1h6v1h2v-1h4v1h2v-1h5v1h1v-1h1v1h1v-1h3v1h1v-1h1v-1h1v1h2v1h1v-1h11v1h1v-1h1v1h4v-1h1v1h2v-1h1v-1h1v1h1v1h2v-1h7v1h1v-1h9v1h1v-1h8v1h1v-1h9v1h2v-1h1v-1h1v1h14v1h2v-1h6v1h1v-1h1v1h1v-1h9v1h1v-1h13v1h2v-1h4v1h1v-1h7v1h1v-1h5v1h2v-1h1v-1h1v1h8v1h1v-1h8v1h2v-1h2v-1h1v1h11v1h1v-1h5v1h1v-1h6v1h4v-1h6v1h1v-1h3v-1h1v1h2v1h2v-1h1v1h1v-1h2v1h1v-1h2v1h1v-1h3v1h1v-1h2v1h1v-1h2v1h1v-1h4v1h1v-1h5v1h1v-1h13v-1h1v1h28v1h1v-1h7v1h2v-1h27v1h1v-1h4v1h1v-1h22v1h2v-1h14v1h1v-1h16v1h1v-1h9v1h1v-1h4v1h1v-1h5v1h1v-1h1v1h1v-1h4v1h1v-1h3v1h2v-1h3v1h1v-1h6v1h2v-1h11v1h1v-1h3v1h1v-1h6v1h1v-1h2v1h1v-1h10v1h1v-1h8v1h2v-1h6v1h1v-1h10v1h2v-1h15v1h1v-1h2v1h2v-1h6v1h2v-1h6v1h1v-1h2v1h1v-1h2v1h1v-1h1v1h1v-1h1v1h1v-1h8v-1h1v1h3v1h1v-1h9v1h1v-1h10v1h1v-1h1v1h2v-1h6v-1h1v1h3v-2h1v2h11v1h1v-1h2v1h1v-1h4v1h1v-1h2v1h1v-1h13v-1h1v1h3v1h2v-1h3v1h2v-1h2v1h1v-1h8v1h1v-1h9v1h1v-1h3v1h1v-1h1v1h1v-1h5v1h1v-1h1v1h1v-1h13v1h1v-1h5v1h1v-1h14v1h1v-1h8v1h1v-1h1v1h1v-1h11v1h2v-1h9v1h1v-2h1v1h12v1h3v-1h1v1h1v-1h6v1h2v-2h1v1h8v1h1v-1h2v1h3v-1h2v1h1v-1h3v-1h1v1h22v1h1v-1h2v1h1v-1h7v1h1v-1h1v-1h1v1h4v1h1v-1h5v1h1v-1h14v1h1v-1h9v1h1v-1h13v1h1v-1h4v1h1v-1h4v1h1v-1h4v1h1v-1h21v1h1v-1h2v1h1v-1h10v1h1v-1h5v1h2v-1h3v5h-2v-1h-1v1h-6v1h-1v-2h-1v1h-5v-1h-4v1h-1v-1h-1v1h-4v-1h-1v1h-3v-1h-1v1h-2v-1h-1v1h-16v1h-1v-1h-17v-1h-1v1h-20v-1h-1v1h-6v-1h-1v1h-9v-1h-1v1h-19v-1h-1v1h-12v-1h-1v1h-3v-1h-1v1h-12v-1h-1v1h-3v-1h-1v1h-20v-1h-2v1h-4v-1h-1v1h-4v-1h-1v1h-2v-1h-1v1h-6v-1h-1v1h-11v-1h-1v1h-3v1h-1v-2h-2v1h-3v-1h-1v1h-9v-1h-1v1h-1v-1h-2v1h-1v-1h-1v1h-6v-1h-1v1h-6v-1h-1v1h-3v-1h-1v1h-6v-1h-1v1h-3v1h-1v-1h-1v-1h-1v1h-3v-1h-1v1h-10v-1h-1v1h-2v-1h-1v1h-2v-1h-1v1h-3v1h-1v-1h-3v-1h-1v1h-6v-1h-1v1h-1v-1h-2v1h-12v-1h-1v1h-1v-1h-2v1h-1v-1h-1v1h-1v-1h-1v1h-7v-1h-1v1h-1v1h-1v-1h-3v1h-1v-1h-4v1h-1v-1h-1v1h-1v-1h-1v-1h-1v1h-16v-1h-1v1h-2v-1h-1v1h-1v-1h-2v1h-2v-1h-1v1h-8v1h-1v-1h-4v-1h-1v1h-14v-1h-1v1h-6v-1h-1v1h-3v-1h-2v1h-1v-1h-1v1h-9v-1h-1v1h-7v-1h-1v1h-12v-1h-1v1h-7v1h-1v-1h-14v-1h-1v1h-1v-1h-2v1h-1v-1h-3v1h-2v-1h-3v1h-10v-1h-2v1h-1v-1h-1v1h-3v-1h-1v1h-12v-1h-1v1h-11v-1h-2v1h-1v-1h-1v1h-23v-1h-1v1h-6v-1h-1v1h-3v1h-1v-1h-1v1h-3v-1h-4v-1h-1v1h-10v-1h-1v1h-2v-1h-1v1h-1v-1h-1v1h-1v-1h-1v1h-8v-1h-1v2h-1v-2h-1v1h-9v-1h-1v1h-4v-1h-1v1h-17v-1h-1v1h-7v-1h-1v2h-1v-1h-6v-1h-2v1h-1v-1h-2v1h-10v-1h-1v1h-10v-1h-1v1h-3v-1h-1v1h-12v-1h-1v1h-6v-1h-2v1h-1v-1h-1v1h-4v-1h-1v1h-1v-1h-3v1h-17v-1h-1v1h-6v-1h-1v1h-26v-1h-1v1h-14v-1h-2v1h-4v-1h-1v1h-8v-1h-1v1h-4v-1h-1v1h-3v-1h-2v1h-10v-1h-3v1h-2v-1h-1v2h-2v-1h-12v-1h-3v1h-11v-1h-1v1h-2v1h-1v-1h-17v-1h-1v1h-8v-1h-1v1h-18v-1h-2v2h-1v-2h-1v1h-9v-1h-2v1h-1v-1h-1v1h-2v1h-1v-1h-11v-1h-4v1h-5v1h-1v-1h-15v-1h-1v1h-4v-1h-1v1h-6v-1h-1v1h-2v-1h-1v1h-3v-1h-5v1h-3v-1h-1v1h-4v-1h-1v1h-8v-1h-1v1h-6z"/></g>
</g>
<g font-size="13" fill="#000"><text x="162.9" y="138" text-anchor="middle">02</text><text x="162.9" y="920" text-anchor="middle">02</text><text x="237.9" y="138" text-anchor="middle">04</text><text x="237.9" y="920" text-anchor="middle">04</text><text x="312.8" y="138" text-anchor="middle">06</text><text x="312.8" y="920" text-anchor="middle">06</text><text x="387.7" y="138" text-anchor="middle">08</text><text x="387.7" y="920" text-anchor="middle">08</text><text x="462.7" y="138" text-anchor="middle">10</text><text x="462.7" y="920" text-anchor="middle">10</text><text x="537.6" y="138" text-anchor="middle">12</text><text x="537.6" y="920" text-anchor="middle">12</text><text x="612.5" y="138" text-anchor="middle">14</text><text x="612.5" y="920" text-anchor="middle">14</text><text x="687.5" y="138" text-anchor="middle">16</text><text x="687.5" y="920" text-anchor="middle">16</text><text x="762.4" y="138" text-anchor="middle">18</text><text x="762.4" y="920" text-anchor="middle">18</text><text x="837.3" y="138" text-anchor="middle">20</text><text x="837.3" y="920" text-anchor="middle">20</text><text x="912.3" y="138" text-anchor="middle">22</text><text x="912.3" y="920" text-anchor="middle">22</text><text x="987.2" y="138" text-anchor="middle">24</text><text x="987.2" y="920" text-anchor="middle">24</text><text x="1062.1" y="138" text-anchor="middle">26</text><text x="1062.1" y="920" text-anchor="middle">26</text><text x="1137.1" y="138" text-anchor="middle">28</text><text x="1137.1" y="920" text-anchor="middle">28</text><text x="1234.5" y="180" text-anchor="middle">0:30</text><text x="1234.5" y="211" text-anchor="middle">1:00</text><text x="1234.5" y="241" text-anchor="middle">1:30</text><text x="1234.5" y="271" text-anchor="middle">2:00</text><text x="1234.5" y="302" text-anchor="middle">2:30</text><text x="1234.5" y="332" text-anchor="middle">3:00</text><text x="1234.5" y="362" text-anchor="middle">3:30</text><text x="1234.5" y="393" text-anchor="middle">4:00</text><text x="1234.5" y="423" text-anchor="middle">4:30</text><text x="1234.5" y="453" text-anchor="middle">5:00</text><text x="1234.5" y="484" text-anchor="middle">5:30</text><text x="1234.5" y="514" text-anchor="middle">6:00</text><text x="1234.5" y="544" text-anchor="middle">6:30</text><text x="1234.5" y="574" text-anchor="middle">7:00</text><text x="1234.5" y="605" text-anchor="middle">7:30</text><text x="1234.5" y="635" text-anchor="middle">8:00</text><text x="1234.5" y="665" text-anchor="middle">8:30</text><text x="1234.5" y="696" text-anchor="middle">9:00</text><text x="1234.5" y="726" text-anchor="middle">9:30</text><text x="1234.5" y="756" text-anchor="middle">10:00</text><text x="1234.5" y="787" text-anchor="middle">10:30</text><text x="1234.5" y="817" text-anchor="middle">11:00</text><text x="1234.5" y="847" text-anchor="middle">11:30</text><text x="1234.5" y="878" text-anchor="middle">12:00</text></g>
<g font-size="16" fill="#000">
<text x="88" y="81" textLength="347.4">Département de géologie et de génie géologique</text>
<text x="88" y="100">Faculté des sciences et de génie</text>
<text x="88" y="119" textLength="114.8">Université Laval</text>
</g>
<text x="650.5" y="102" font-size="21.33" textLength="312.7" text-anchor="middle">Séismographe QCQ (CGC/GSC)</text>
<text x="1234.5" y="152" font-size="18" text-anchor="middle" fill="#ff0000">UTC</text>
<text x="651" y="961" font-size="18" textLength="142.4" text-anchor="middle">Minutes écoulées</text>
<path d="M1111.3 74.2H1143.6V104.6Q1143.6 110.8 1137.4 110.8H1130.6L1127.45 115.2L1124.3 110.8H1117.5Q1111.3 110.8 1111.3 104.6Z" fill="#e3001b" stroke="#5a1414" stroke-width="0.9"/><path d="M1124 74.5H1130.6V110.8L1127.3 114.6L1124 110.8Z" fill="#fecb00"/><rect x="1111.7" y="89.6" width="31.5" height="6" fill="#fecb00"/><ellipse cx="1127.3" cy="82" rx="2.1" ry="1.8" fill="#1a84c8"/><ellipse cx="1127.3" cy="92.6" rx="2.1" ry="1.8" fill="#1a84c8"/><ellipse cx="1127.3" cy="103" rx="2.1" ry="1.8" fill="#1a84c8"/><ellipse cx="1118" cy="92.6" rx="2.1" ry="1.8" fill="#1a84c8"/><ellipse cx="1136.6" cy="92.6" rx="2.1" ry="1.8" fill="#1a84c8"/><path d="M1113.3 78.4a1.1 1.1 0 0 1 1.2-1.4a0.9 0.9 0 0 1 1.4 0a1.1 1.1 0 0 1 1.2 1.4l-0.9 0.7v1.5h-1.9v-1.5z" fill="#e6e6e6"/><path d="M1113.3 85.2a1.1 1.1 0 0 1 1.2-1.4a0.9 0.9 0 0 1 1.4 0a1.1 1.1 0 0 1 1.2 1.4l-0.9 0.7v1.5h-1.9v-1.5z" fill="#e6e6e6"/><path d="M1113.3 99.2a1.1 1.1 0 0 1 1.2-1.4a0.9 0.9 0 0 1 1.4 0a1.1 1.1 0 0 1 1.2 1.4l-0.9 0.7v1.5h-1.9v-1.5z" fill="#e6e6e6"/><path d="M1113.3 105.6a1.1 1.1 0 0 1 1.2-1.4a0.9 0.9 0 0 1 1.4 0a1.1 1.1 0 0 1 1.2 1.4l-0.9 0.7v1.5h-1.9v-1.5z" fill="#e6e6e6"/><path d="M1119.1 78.4a1.1 1.1 0 0 1 1.2-1.4a0.9 0.9 0 0 1 1.4 0a1.1 1.1 0 0 1 1.2 1.4l-0.9 0.7v1.5h-1.9v-1.5z" fill="#e6e6e6"/><path d="M1119.1 85.2a1.1 1.1 0 0 1 1.2-1.4a0.9 0.9 0 0 1 1.4 0a1.1 1.1 0 0 1 1.2 1.4l-0.9 0.7v1.5h-1.9v-1.5z" fill="#e6e6e6"/><path d="M1119.1 99.2a1.1 1.1 0 0 1 1.2-1.4a0.9 0.9 0 0 1 1.4 0a1.1 1.1 0 0 1 1.2 1.4l-0.9 0.7v1.5h-1.9v-1.5z" fill="#e6e6e6"/><path d="M1119.1 105.6a1.1 1.1 0 0 1 1.2-1.4a0.9 0.9 0 0 1 1.4 0a1.1 1.1 0 0 1 1.2 1.4l-0.9 0.7v1.5h-1.9v-1.5z" fill="#e6e6e6"/><path d="M1131.8 78.4a1.1 1.1 0 0 1 1.2-1.4a0.9 0.9 0 0 1 1.4 0a1.1 1.1 0 0 1 1.2 1.4l-0.9 0.7v1.5h-1.9v-1.5z" fill="#e6e6e6"/><path d="M1131.8 85.2a1.1 1.1 0 0 1 1.2-1.4a0.9 0.9 0 0 1 1.4 0a1.1 1.1 0 0 1 1.2 1.4l-0.9 0.7v1.5h-1.9v-1.5z" fill="#e6e6e6"/><path d="M1131.8 99.2a1.1 1.1 0 0 1 1.2-1.4a0.9 0.9 0 0 1 1.4 0a1.1 1.1 0 0 1 1.2 1.4l-0.9 0.7v1.5h-1.9v-1.5z" fill="#e6e6e6"/><path d="M1131.8 105.6a1.1 1.1 0 0 1 1.2-1.4a0.9 0.9 0 0 1 1.4 0a1.1 1.1 0 0 1 1.2 1.4l-0.9 0.7v1.5h-1.9v-1.5z" fill="#e6e6e6"/><path d="M1137.6 78.4a1.1 1.1 0 0 1 1.2-1.4a0.9 0.9 0 0 1 1.4 0a1.1 1.1 0 0 1 1.2 1.4l-0.9 0.7v1.5h-1.9v-1.5z" fill="#e6e6e6"/><path d="M1137.6 85.2a1.1 1.1 0 0 1 1.2-1.4a0.9 0.9 0 0 1 1.4 0a1.1 1.1 0 0 1 1.2 1.4l-0.9 0.7v1.5h-1.9v-1.5z" fill="#e6e6e6"/><path d="M1137.6 99.2a1.1 1.1 0 0 1 1.2-1.4a0.9 0.9 0 0 1 1.4 0a1.1 1.1 0 0 1 1.2 1.4l-0.9 0.7v1.5h-1.9v-1.5z" fill="#e6e6e6"/><path d="M1137.6 105.6a1.1 1.1 0 0 1 1.2-1.4a0.9 0.9 0 0 1 1.4 0a1.1 1.1 0 0 1 1.2 1.4l-0.9 0.7v1.5h-1.9v-1.5z" fill="#e6e6e6"/><text x="1149.7" y="86.9" font-size="11.2" textLength="62.2" lengthAdjust="spacingAndGlyphs" fill="#231f20" stroke="#231f20" stroke-width="0.25" style="font-family:'Liberation Sans',sans-serif">UNIVERSITÉ</text><text x="1149.3" y="105.6" font-size="22" textLength="62.8" lengthAdjust="spacingAndGlyphs" fill="#231f20" stroke="#231f20" stroke-width="0.5" style="font-family:'Liberation Sans',sans-serif">LAVAL</text>

<defs>
<linearGradient id="cg" x1="0" y1="0" x2="0" y2="1">
<stop offset="0" stop-color="#f4a276"/><stop offset="0.3" stop-color="#ef7a55"/><stop offset="0.5" stop-color="#ee6e45"/><stop offset="0.52" stop-color="#e95c2b"/><stop offset="1" stop-color="#f0561f"/>
</linearGradient>
<linearGradient id="gg" x1="0" y1="0" x2="0" y2="1">
<stop offset="0" stop-color="#8e8d88"/><stop offset="1" stop-color="#6b6a65"/>
</linearGradient>
</defs>
<circle cx="13.4" cy="11.4" r="8.1" fill="#2e2d29"/>
<circle cx="13.4" cy="11.4" r="7.3" fill="url(#cg)"/>
<path d="M10.9 8.9L15.9 13.9M15.9 8.9L10.9 13.9" stroke="#3b2d27" stroke-width="1.05"/>
<circle cx="32.3" cy="11.4" r="8.1" fill="#2e2d29"/>
<circle cx="32.3" cy="11.4" r="7.3" fill="url(#gg)"/>
<rect x="29" y="10.9" width="7" height="1.3" fill="#2f2e2a"/>
<circle cx="51.3" cy="11.4" r="8.1" fill="#2e2d29"/>
<circle cx="51.3" cy="11.4" r="7.3" fill="url(#gg)"/>
<rect x="48.6" y="9.6" width="5.8" height="3.7" fill="none" stroke="#2f2e2a" stroke-width="1.1"/>
<text x="75" y="17.3" font-size="16.5" font-weight="bold" textLength="15.6" lengthAdjust="spacingAndGlyphs" fill="#dfdbd2" style="font-family:'Liberation Sans',sans-serif">tk</text>
<g fill="#dfdbd2" stroke="#2b2a26" stroke-width="1.5" stroke-linejoin="miter" paint-order="stroke">
<path d="M1030 3.6L1035.2 9.1H1032.3V15.9H1027.7V9.1H1024.8Z"/>
<path d="M1038 20.9L1043 16H1040.2V8.7H1035.9V16H1032.9Z"/>
</g>
<rect x="1056" y="1.4" width="20" height="1" fill="#2a2925" opacity="0.8"/>
<rect x="1056" y="2" width="20" height="19.8" rx="2.2" fill="#dfdbd2"/>
<text x="1066.2" y="16.6" font-size="12" font-weight="bold" textLength="12.8" lengthAdjust="spacingAndGlyphs" text-anchor="middle" fill="#33322e" style="font-family:'Liberation Sans',sans-serif">En</text>
<rect x="1089.7" y="6.4" width="20.7" height="11.2" rx="1.5" fill="none" stroke="#dfdbd2" stroke-width="1.1"/>
<rect x="1091" y="7.7" width="18.2" height="8.6" fill="#2b2a26"/>
<rect x="1091.6" y="8.3" width="17" height="7.4" fill="#dfdbd2"/>
<rect x="1110.8" y="9.3" width="1.9" height="5.1" fill="none" stroke="#dfdbd2" stroke-width="0.9"/>
<text x="1116.5" y="16.8" font-size="14" fill="#dfdbd2" textLength="45.5" style="font-family:'Liberation Sans',sans-serif">(100%)</text>
<path d="M1175.2 9.2H1178L1182 6.6V17.5L1178 14.8H1175.2Z" fill="#dfdbd2"/>
<path d="M1184.6 9.2Q1186 12 1184.6 14.8" fill="none" stroke="#dfdbd2" stroke-width="1.45"/>
<path d="M1187.4 7.2Q1190.4 12 1187.4 16.8" fill="none" stroke="#dfdbd2" stroke-width="1.45"/>
<path d="M1190.3 4.8Q1195 12 1190.3 19.4" fill="none" stroke="#9a978f" stroke-width="1.3"/>
<text x="1207" y="17" font-size="14.3" fill="#dfdbd2" textLength="36" style="font-family:'Liberation Sans',sans-serif">07:57</text>
<g fill="none" stroke="#dfdbd2">
<path d="M1261.19 7.81A5.3 5.3 0 1 0 1266.81 7.81" stroke-width="1.9"/>
<path d="M1264 3.4V11.2" stroke-width="1.8"/>
<path d="M1256 12H1257.7M1270.3 12H1272M1264 18.4V20M1258.4 6.6L1259.5 7.7M1269.6 6.6L1268.5 7.7M1258.4 17.4L1259.5 16.3M1269.6 17.4L1268.5 16.3" stroke-width="1.8"/>
</g>

</svg>
</body></html>
